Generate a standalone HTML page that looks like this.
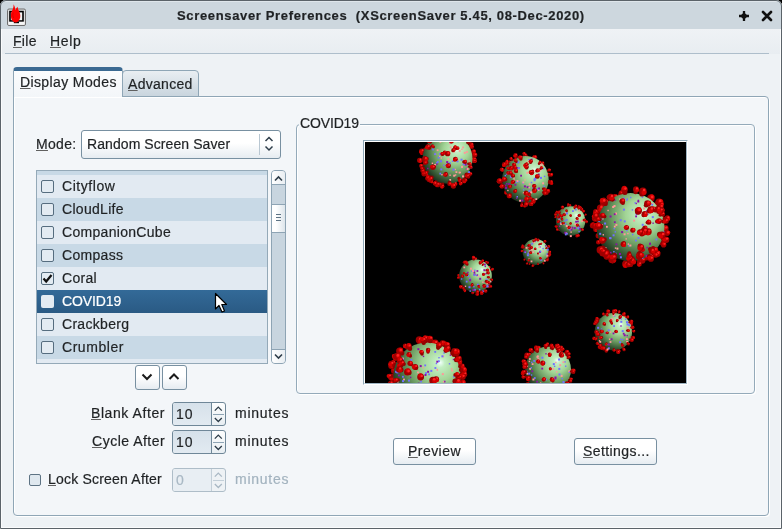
<!DOCTYPE html>
<html><head><meta charset="utf-8">
<style>
*{margin:0;padding:0;box-sizing:border-box}
html,body{width:782px;height:529px;overflow:hidden;background:#000}
body{position:relative;font-family:"Liberation Sans",sans-serif;font-size:14px;color:#1f2224;-webkit-font-smoothing:antialiased;-webkit-text-stroke:0.2px}
#root{position:absolute;left:0;top:0;width:782px;height:529px;will-change:transform}
.a{position:absolute}
.t{position:absolute;line-height:16px;white-space:nowrap;letter-spacing:0.3px}
.u{text-decoration:underline;text-underline-offset:1px;text-decoration-thickness:1px;text-decoration-color:#606060}
#win{left:0;top:0;width:782px;height:529px;background:#eef2f5;border-radius:6px 6px 0 0;overflow:hidden}
#frameov{left:0;top:0;width:782px;height:529px;border:1px solid #5b6369;border-radius:6px 6px 0 0;pointer-events:none}
#hl{left:1px;top:29px;width:780px;height:499px;box-shadow:inset 1px 0 0 #fafbfc,inset -1px -1px 0 #fafbfc}
#tophl{left:5px;top:1px;width:772px;height:1px;background:#dfe6eb}
#title{left:0;top:0;width:782px;height:29px;background:#cdd7de}
#menu{left:0;top:29px;width:782px;height:25px;background:linear-gradient(#eff2f5,#e8edf1)}
#menuline{left:5px;top:53px;width:764px;height:1px;background:#aebecb}
#nb{left:13px;top:96px;width:756px;height:420px;background:#f3f6f9;border:1px solid #8fa6b6;border-radius:0 4px 4px 4px;box-shadow:1px 1px 0 #fff,inset 1px 1px 0 #fff}
#tab1{left:13px;top:67px;width:110px;height:30px;background:linear-gradient(#fbfcfd,#f3f6f9);border:1px solid #8fa6b6;border-bottom:none;border-radius:4px 4px 0 0;border-top:4px solid #3b6a92}
#tab2{left:122px;top:70px;width:77px;height:27px;background:linear-gradient(#e9eef2,#c9d5de);border:1px solid #8fa6b6;border-radius:4px 4px 0 0}
.btn{position:absolute;background:linear-gradient(#ffffff 45%,#e6ecf1);border:1px solid #7890a1;border-radius:3px}
#combo{left:81px;top:130px;width:200px;height:29px}
#list{left:36px;top:170px;width:232px;height:194px;border:1px solid #94a9b8;background:#e2eaf2;overflow:hidden}
.row{position:absolute;left:0;width:230px;height:23px}
.dk{background:#c8d9e6}
.lt{background:#e2eaf2}
.sel{background:linear-gradient(#336a98,#2a5a84)}
.cb{position:absolute;left:4px;top:5px;width:13px;height:13px;border:1px solid #566d7f;border-radius:2px;background:#e3ebf2}
.rt{position:absolute;left:25px;top:3px;line-height:16px;white-space:nowrap;letter-spacing:0.3px}
#sb{left:271px;top:170px;width:15px;height:194px;background:#c8d5df;border:1px solid #8ea4b4;border-radius:4px;overflow:hidden}
#frame{left:296px;top:124px;width:459px;height:270px;border:1px solid #94aaba;border-radius:4px;box-shadow:1px 1px 0 #fff,inset 1px 1px 0 #fff}
#flabel{left:299px;top:115px;background:#f3f6f9;padding:0 1px;letter-spacing:-0.15px}
#prev{left:363px;top:140px;width:325px;height:245px;border-style:solid;border-width:1px;border-color:#8fa8b8 #fff #fff #8fa8b8}
#previn{left:0;top:0;width:323px;height:243px;border-style:solid;border-width:1px;border-color:#fff #9fb5c4 #9fb5c4 #fff;background:#000;overflow:hidden}
.spin{position:absolute;width:54px;height:24px;border:1px solid #6f8798;border-radius:3px;background:linear-gradient(#fdfefe,#e8eef2);overflow:hidden}
.spin .f{position:absolute;left:0;top:0;width:39px;height:22px;background:linear-gradient(#d6e1ea,#e2eaf1);border-right:1px solid #6f8798}
.spin .sep{position:absolute;left:40px;top:11px;width:11px;height:1px;background:#8ea4b4}
.spin svg{position:absolute;left:39px;top:0}
.spin .v{position:absolute;left:3px;top:3px;line-height:16px;letter-spacing:1px}
</style></head><body><div id="root">
<div id="win" class="a">
<div id="title" class="a"></div>
<div id="menu" class="a"></div>
<div id="menuline" class="a"></div>
</div>
<!-- app icon -->
<svg class="a" style="left:4px;top:2px" width="24" height="26" viewBox="0 0 24 26">
 <rect x="3.5" y="7" width="18" height="16.5" rx="1.5" fill="#dcdcdc" stroke="#6e6e6e"/>
 <rect x="5.2" y="8.8" width="14.6" height="11" fill="#000"/>
 <rect x="6.8" y="10.4" width="11.4" height="7.8" fill="#f2f2f2"/>
 <rect x="4.5" y="19.8" width="16" height="3" fill="#f6f6f6"/>
 <rect x="9.8" y="19.8" width="5.2" height="1.4" fill="#000"/>
 <path d="M9.6 2.2 C10.6 4 11.3 6 11.2 8.2 C11.9 6.8 12.8 5.6 13.5 4.8 C13.8 7 14.8 8.5 15.5 10.2 C16.5 12.5 16.6 15 15.7 17 C14.9 19 13.4 20.5 11.8 20.5 C9.6 20.5 7.8 18.7 7.2 16.2 C6.6 13.6 6.9 11 7.9 9 C8.8 7 9.8 5 9.6 2.2 Z" fill="#ff0000"/><path d="M9.2 10.5 C8.6 12.5 8.8 14.5 9.6 16" fill="none" stroke="#900" stroke-width="0.6" opacity="0.6"/>
</svg>
<!-- title buttons -->
<svg class="a" style="left:738px;top:10px" width="12" height="12" viewBox="0 0 12 12">
 <path d="M6 2.2 L9.8 6 L6 9.8 L2.2 6 Z" fill="#111"/>
 <path d="M6 1 V11 M1 6 H11" stroke="#111" stroke-width="2.3"/>
</svg>
<svg class="a" style="left:761px;top:10px" width="12" height="12" viewBox="0 0 12 12">
 <path d="M2 2 L10 10 M10 2 L2 10" stroke="#111" stroke-width="2.6" stroke-linecap="round"/>
</svg>
<div class="t" style="left:177px;top:8px;font-weight:bold;font-size:13px;letter-spacing:0.65px">Screensaver Preferences&nbsp; (XScreenSaver 5.45, 08-Dec-2020)</div>
<div class="t" style="left:13px;top:33px"><span class="u">F</span>ile</div>
<div class="t" style="left:50px;top:33px;letter-spacing:0.7px"><span class="u">H</span>elp</div>

<div id="nb" class="a"></div>
<div id="tab2" class="a"></div>
<div id="tab1" class="a"></div>
<div class="t" style="left:20px;top:74px;letter-spacing:0.38px"><span class="u">D</span>isplay Modes</div>
<div class="t" style="left:128px;top:76px"><span class="u">A</span>dvanced</div>

<div class="t" style="left:36px;top:136px"><span class="u">M</span>ode:</div>
<div id="combo" class="btn"></div>
<div class="t" style="left:87px;top:136px;letter-spacing:0.08px">Random Screen Saver</div>
<div class="a" style="left:259px;top:134px;width:1px;height:21px;background:#b9c7d2"></div>
<svg class="a" style="left:262px;top:135px" width="14" height="18" viewBox="0 0 14 18">
 <path d="M3.5 6 L7 2.5 L10.5 6 M3.5 11.5 L7 15 L10.5 11.5" fill="none" stroke="#2e3d49" stroke-width="1.5"/>
</svg>

<div id="list" class="a">
 <div class="row dk" style="top:0;height:4px"></div>
 <div class="row lt" style="top:4px"><div class="cb"></div><div class="rt" style="letter-spacing:0.55px">Cityflow</div></div>
 <div class="row dk" style="top:27px"><div class="cb"></div><div class="rt">CloudLife</div></div>
 <div class="row lt" style="top:50px"><div class="cb"></div><div class="rt">CompanionCube</div></div>
 <div class="row dk" style="top:73px"><div class="cb"></div><div class="rt">Compass</div></div>
 <div class="row lt" style="top:96px"><div class="cb"></div><div class="rt">Coral</div>
  <svg class="a" style="left:4px;top:5px" width="13" height="13" viewBox="0 0 13 13"><path d="M2.5 6.5 L5.2 9.5 L10.5 3" fill="none" stroke="#111" stroke-width="2.2"/></svg></div>
 <div class="row sel" style="top:119px"><div class="cb" style="border:none;background:#e3ebf2"></div><div class="rt" style="color:#fff;letter-spacing:-0.1px">COVID19</div></div>
 <div class="row lt" style="top:142px"><div class="cb"></div><div class="rt">Crackberg</div></div>
 <div class="row dk" style="top:165px"><div class="cb"></div><div class="rt" style="letter-spacing:0.55px">Crumbler</div></div>
 <div class="row lt" style="top:188px"></div>
</div>
<div id="sb" class="a">
 <div class="a" style="left:0;top:0;width:13px;height:14px;background:linear-gradient(90deg,#fff,#e9eef2);border-bottom:1px solid #8ea4b4"></div>
 <div class="a" style="left:0;top:33px;width:13px;height:29px;background:linear-gradient(90deg,#fff 30%,#dde5eb);border-top:1px solid #8ea4b4;border-bottom:1px solid #8ea4b4"></div>
 <div class="a" style="left:0;top:178px;width:13px;height:14px;background:linear-gradient(90deg,#fff,#e9eef2);border-top:1px solid #8ea4b4"></div>
 <svg class="a" style="left:0;top:0" width="13" height="192" viewBox="0 0 13 192">
  <path d="M3 9.5 L6.5 6 L10 9.5" fill="none" stroke="#2e3d49" stroke-width="1.6"/>
  <path d="M3 183.5 L6.5 187 L10 183.5" fill="none" stroke="#2e3d49" stroke-width="1.6"/>
  <path d="M4 43.5 H9 M4 46.5 H9 M4 49.5 H9" stroke="#5d7384" stroke-width="1"/>
 </svg>
</div>

<div id="frame" class="a"></div>
<div id="flabel" class="t">COVID19</div>
<div id="prev" class="a"><div id="previn" class="a"><svg width="321" height="241" viewBox="0 0 321 241" style="position:absolute;left:0;top:0"><defs><radialGradient id="g" cx="0.64" cy="0.36" r="0.7" fx="0.7" fy="0.3"><stop offset="0" stop-color="#f0fffa"/><stop offset="0.1" stop-color="#c2eec2"/><stop offset="0.36" stop-color="#a2d496"/><stop offset="0.62" stop-color="#6c9c62"/><stop offset="0.84" stop-color="#385a36"/><stop offset="1" stop-color="#1a2c1a"/></radialGradient></defs><circle cx="86.5" cy="21.8" r="1.8" fill="#900000"/><circle cx="86.8" cy="22.2" r="2.5" fill="#a00000"/><circle cx="85.8" cy="21.6" r="1.7" fill="#d40000"/><circle cx="87.6" cy="21.4" r="0.9" fill="#ff2424"/><circle cx="77.1" cy="20.4" r="1.2" fill="#900000"/><circle cx="76.6" cy="20.8" r="1.7" fill="#a00000"/><circle cx="76.6" cy="21.5" r="1.2" fill="#d40000"/><circle cx="77.2" cy="20.2" r="0.6" fill="#ff2424"/><circle cx="85" cy="23.3" r="1.6" fill="#900000"/><circle cx="85.1" cy="23.8" r="2.2" fill="#a00000"/><circle cx="86" cy="23.3" r="1.5" fill="#d40000"/><circle cx="85.8" cy="23.1" r="0.8" fill="#ff2424"/><circle cx="87.8" cy="21.8" r="1.9" fill="#900000"/><circle cx="88.3" cy="22.2" r="2.6" fill="#a00000"/><circle cx="87.1" cy="21.8" r="1.8" fill="#d40000"/><circle cx="89.1" cy="21.3" r="1" fill="#ff2424"/><circle cx="73" cy="13.9" r="1.2" fill="#900000"/><circle cx="72.2" cy="13.7" r="1.7" fill="#a00000"/><circle cx="72.4" cy="13" r="1.1" fill="#d40000"/><circle cx="72.8" cy="13.2" r="0.6" fill="#ff2424"/><circle cx="73.3" cy="22.9" r="1.5" fill="#900000"/><circle cx="72.6" cy="23.4" r="2.1" fill="#a00000"/><circle cx="71.7" cy="22.9" r="1.4" fill="#d40000"/><circle cx="73.2" cy="22.7" r="0.8" fill="#ff2424"/><circle cx="75.7" cy="7.7" r="1.8" fill="#900000"/><circle cx="75.1" cy="7" r="2.4" fill="#a00000"/><circle cx="74.4" cy="6.2" r="1.7" fill="#d40000"/><circle cx="75.9" cy="6.2" r="0.9" fill="#ff2424"/><circle cx="92.7" cy="23.3" r="1.6" fill="#900000"/><circle cx="93.5" cy="23.8" r="2.2" fill="#a00000"/><circle cx="94.4" cy="23.3" r="1.5" fill="#d40000"/><circle cx="94.2" cy="23.1" r="0.8" fill="#ff2424"/><circle cx="69.3" cy="18.2" r="1.5" fill="#900000"/><circle cx="68.2" cy="18.3" r="2.1" fill="#a00000"/><circle cx="67.5" cy="18.9" r="1.4" fill="#d40000"/><circle cx="68.9" cy="17.6" r="0.8" fill="#ff2424"/><circle cx="69.4" cy="19.3" r="1.9" fill="#900000"/><circle cx="68.4" cy="19.5" r="2.6" fill="#a00000"/><circle cx="68.8" cy="20.6" r="1.8" fill="#d40000"/><circle cx="69.2" cy="18.7" r="0.9" fill="#ff2424"/><circle cx="96.9" cy="14.5" r="1.4" fill="#900000"/><circle cx="98.1" cy="14.3" r="2" fill="#a00000"/><circle cx="98.5" cy="13.5" r="1.3" fill="#d40000"/><circle cx="98.7" cy="13.7" r="0.7" fill="#ff2424"/><circle cx="97.9" cy="19.3" r="1.3" fill="#900000"/><circle cx="99.1" cy="19.5" r="1.7" fill="#a00000"/><circle cx="99.5" cy="18.8" r="1.2" fill="#d40000"/><circle cx="99.7" cy="18.9" r="0.6" fill="#ff2424"/><circle cx="88.5" cy="1.6" r="1.8" fill="#900000"/><circle cx="89" cy="0.3" r="2.4" fill="#a00000"/><circle cx="88" cy="0.8" r="1.6" fill="#d40000"/><circle cx="89.7" cy="-0.4" r="0.9" fill="#ff2424"/><circle cx="93.1" cy="29.2" r="1.4" fill="#900000"/><circle cx="94" cy="30.2" r="2" fill="#a00000"/><circle cx="94.2" cy="29.3" r="1.3" fill="#d40000"/><circle cx="94.6" cy="29.5" r="0.7" fill="#ff2424"/><circle cx="82.4" cy="33.3" r="1.9" fill="#900000"/><circle cx="82.4" cy="34.6" r="2.7" fill="#a00000"/><circle cx="83.2" cy="35.6" r="1.8" fill="#d40000"/><circle cx="83.3" cy="33.8" r="1" fill="#ff2424"/><circle cx="96.5" cy="25.8" r="1.6" fill="#900000"/><circle cx="97.6" cy="26.5" r="2.2" fill="#a00000"/><circle cx="96.7" cy="26.2" r="1.5" fill="#d40000"/><circle cx="98.3" cy="25.8" r="0.8" fill="#ff2424"/><circle cx="78.1" cy="-0.8" r="1.6" fill="#900000"/><circle cx="77.7" cy="-2.3" r="2.2" fill="#a00000"/><circle cx="77.2" cy="-1.4" r="1.5" fill="#d40000"/><circle cx="78.4" cy="-3" r="0.8" fill="#ff2424"/><circle cx="64.1" cy="15.5" r="1.3" fill="#900000"/><circle cx="62.6" cy="15.5" r="1.8" fill="#a00000"/><circle cx="61.8" cy="15" r="1.2" fill="#d40000"/><circle cx="63.1" cy="14.9" r="0.7" fill="#ff2424"/><circle cx="63.5" cy="21.9" r="1.8" fill="#900000"/><circle cx="62" cy="22.3" r="2.5" fill="#a00000"/><circle cx="63.1" cy="22.8" r="1.7" fill="#d40000"/><circle cx="62.8" cy="21.5" r="0.9" fill="#ff2424"/><circle cx="86.5" cy="-2.8" r="1.4" fill="#900000"/><circle cx="86.9" cy="-4.4" r="1.9" fill="#a00000"/><circle cx="87.2" cy="-5.2" r="1.3" fill="#d40000"/><circle cx="87.5" cy="-5" r="0.7" fill="#ff2424"/><circle cx="65.2" cy="6.8" r="1.8" fill="#900000"/><circle cx="63.8" cy="6" r="2.5" fill="#a00000"/><circle cx="63.2" cy="5" r="1.7" fill="#d40000"/><circle cx="64.6" cy="5.2" r="0.9" fill="#ff2424"/><circle cx="81.2" cy="-3.4" r="1.2" fill="#900000"/><circle cx="81.1" cy="-5.1" r="1.7" fill="#a00000"/><circle cx="80.9" cy="-5.8" r="1.1" fill="#d40000"/><circle cx="81.6" cy="-5.6" r="0.6" fill="#ff2424"/><circle cx="92.8" cy="-1.3" r="2" fill="#900000"/><circle cx="93.6" cy="-2.7" r="2.7" fill="#a00000"/><circle cx="94.9" cy="-2.7" r="1.9" fill="#d40000"/><circle cx="94.5" cy="-3.6" r="1" fill="#ff2424"/><circle cx="62.8" cy="23.7" r="1.8" fill="#900000"/><circle cx="61.2" cy="24.3" r="2.4" fill="#a00000"/><circle cx="62.2" cy="24.6" r="1.7" fill="#d40000"/><circle cx="61.9" cy="23.5" r="0.9" fill="#ff2424"/><circle cx="62.3" cy="8.5" r="1.9" fill="#900000"/><circle cx="60.7" cy="7.8" r="2.6" fill="#a00000"/><circle cx="60.9" cy="8.9" r="1.8" fill="#d40000"/><circle cx="61.5" cy="7" r="0.9" fill="#ff2424"/><circle cx="90.3" cy="-3.7" r="1.7" fill="#900000"/><circle cx="90.9" cy="-5.3" r="2.4" fill="#a00000"/><circle cx="91.9" cy="-5.6" r="1.6" fill="#d40000"/><circle cx="91.6" cy="-6.1" r="0.9" fill="#ff2424"/><circle cx="66.7" cy="1.1" r="1.8" fill="#900000"/><circle cx="65.4" cy="-0.1" r="2.4" fill="#a00000"/><circle cx="66.1" cy="0.7" r="1.7" fill="#d40000"/><circle cx="66.2" cy="-0.9" r="0.9" fill="#ff2424"/><circle cx="98.8" cy="32.4" r="1.4" fill="#900000"/><circle cx="100.1" cy="33.6" r="2" fill="#a00000"/><circle cx="100.9" cy="33.2" r="1.3" fill="#d40000"/><circle cx="100.7" cy="33" r="0.7" fill="#ff2424"/><circle cx="79.8" cy="-6.4" r="1.3" fill="#900000"/><circle cx="79.6" cy="-8.3" r="1.8" fill="#a00000"/><circle cx="79" cy="-8.8" r="1.2" fill="#d40000"/><circle cx="80.2" cy="-8.8" r="0.7" fill="#ff2424"/><circle cx="63.9" cy="31.4" r="1.5" fill="#900000"/><circle cx="62.4" cy="32.6" r="2.1" fill="#a00000"/><circle cx="62.9" cy="33.4" r="1.4" fill="#d40000"/><circle cx="63.1" cy="31.9" r="0.8" fill="#ff2424"/><circle cx="89.2" cy="39.8" r="1.7" fill="#900000"/><circle cx="89.8" cy="41.7" r="2.3" fill="#a00000"/><circle cx="90.8" cy="41.9" r="1.6" fill="#d40000"/><circle cx="90.5" cy="40.9" r="0.8" fill="#ff2424"/><circle cx="58.9" cy="11.7" r="1.3" fill="#900000"/><circle cx="57" cy="11.3" r="1.8" fill="#a00000"/><circle cx="56.4" cy="11.8" r="1.2" fill="#d40000"/><circle cx="57.6" cy="10.7" r="0.6" fill="#ff2424"/><circle cx="75.8" cy="40.4" r="1.3" fill="#900000"/><circle cx="75.2" cy="42.3" r="1.7" fill="#a00000"/><circle cx="76" cy="42.6" r="1.2" fill="#d40000"/><circle cx="75.8" cy="41.8" r="0.6" fill="#ff2424"/><circle cx="101.7" cy="32.2" r="1.7" fill="#900000"/><circle cx="103.3" cy="33.4" r="2.3" fill="#a00000"/><circle cx="103.2" cy="32.4" r="1.6" fill="#d40000"/><circle cx="104" cy="32.7" r="0.8" fill="#ff2424"/><circle cx="107.1" cy="18.3" r="1.9" fill="#900000"/><circle cx="109.1" cy="18.4" r="2.6" fill="#a00000"/><circle cx="109.9" cy="19.3" r="1.8" fill="#d40000"/><circle cx="110" cy="17.6" r="1" fill="#ff2424"/><circle cx="107.1" cy="14" r="1.5" fill="#900000"/><circle cx="109.1" cy="13.7" r="2.1" fill="#a00000"/><circle cx="108.7" cy="14.6" r="1.4" fill="#d40000"/><circle cx="109.8" cy="13.1" r="0.8" fill="#ff2424"/><circle cx="107.3" cy="17.2" r="1.7" fill="#900000"/><circle cx="109.3" cy="17.3" r="2.3" fill="#a00000"/><circle cx="108.3" cy="17.3" r="1.6" fill="#d40000"/><circle cx="110" cy="16.5" r="0.8" fill="#ff2424"/><circle cx="58.6" cy="9.7" r="2" fill="#900000"/><circle cx="56.7" cy="9.2" r="2.7" fill="#a00000"/><circle cx="55.9" cy="10.1" r="1.8" fill="#d40000"/><circle cx="57.6" cy="8.3" r="1" fill="#ff2424"/><circle cx="106.6" cy="10.7" r="1.2" fill="#900000"/><circle cx="108.6" cy="10.2" r="1.7" fill="#a00000"/><circle cx="108.3" cy="9.5" r="1.2" fill="#d40000"/><circle cx="109.1" cy="9.7" r="0.6" fill="#ff2424"/><circle cx="107.3" cy="18.8" r="1.3" fill="#900000"/><circle cx="109.4" cy="18.9" r="1.8" fill="#a00000"/><circle cx="108.8" cy="18.3" r="1.2" fill="#d40000"/><circle cx="109.9" cy="18.4" r="0.7" fill="#ff2424"/><circle cx="106.6" cy="10.1" r="1.6" fill="#900000"/><circle cx="108.5" cy="9.5" r="2.2" fill="#a00000"/><circle cx="109.4" cy="9" r="1.5" fill="#d40000"/><circle cx="109.2" cy="8.8" r="0.8" fill="#ff2424"/><circle cx="92.2" cy="-6.4" r="1.6" fill="#900000"/><circle cx="92.9" cy="-8.3" r="2.3" fill="#a00000"/><circle cx="92.2" cy="-9" r="1.5" fill="#d40000"/><circle cx="93.7" cy="-9" r="0.8" fill="#ff2424"/><circle cx="105.4" cy="5.9" r="1.4" fill="#900000"/><circle cx="107.2" cy="5" r="1.9" fill="#a00000"/><circle cx="106.4" cy="4.7" r="1.3" fill="#d40000"/><circle cx="107.8" cy="4.4" r="0.7" fill="#ff2424"/><circle cx="58" cy="23.4" r="1.4" fill="#900000"/><circle cx="56" cy="23.9" r="1.9" fill="#a00000"/><circle cx="56" cy="23" r="1.3" fill="#d40000"/><circle cx="56.7" cy="23.3" r="0.7" fill="#ff2424"/><circle cx="97.6" cy="37.3" r="1.6" fill="#900000"/><circle cx="98.9" cy="39" r="2.2" fill="#a00000"/><circle cx="99.5" cy="39.7" r="1.5" fill="#d40000"/><circle cx="99.6" cy="38.3" r="0.8" fill="#ff2424"/><circle cx="93.1" cy="-6.6" r="1.4" fill="#900000"/><circle cx="94" cy="-8.5" r="1.9" fill="#a00000"/><circle cx="93.4" cy="-7.9" r="1.3" fill="#d40000"/><circle cx="94.6" cy="-9.1" r="0.7" fill="#ff2424"/><circle cx="65.7" cy="36.1" r="1.8" fill="#900000"/><circle cx="64.4" cy="37.7" r="2.5" fill="#a00000"/><circle cx="64.9" cy="38.7" r="1.7" fill="#d40000"/><circle cx="65.2" cy="36.9" r="0.9" fill="#ff2424"/><circle cx="107.9" cy="13.3" r="1.8" fill="#900000"/><circle cx="110" cy="13" r="2.4" fill="#a00000"/><circle cx="109.4" cy="12.1" r="1.7" fill="#d40000"/><circle cx="110.8" cy="12.3" r="0.9" fill="#ff2424"/><circle cx="104" cy="30.7" r="1.3" fill="#900000"/><circle cx="105.7" cy="31.9" r="1.7" fill="#a00000"/><circle cx="105.3" cy="31.2" r="1.2" fill="#d40000"/><circle cx="106.3" cy="31.3" r="0.6" fill="#ff2424"/><circle cx="99.2" cy="36.2" r="1.3" fill="#900000"/><circle cx="100.5" cy="37.8" r="1.8" fill="#a00000"/><circle cx="101.1" cy="38.4" r="1.2" fill="#d40000"/><circle cx="101.1" cy="37.3" r="0.6" fill="#ff2424"/><circle cx="104.6" cy="3.6" r="1.7" fill="#900000"/><circle cx="106.4" cy="2.6" r="2.3" fill="#a00000"/><circle cx="106.5" cy="3.6" r="1.6" fill="#d40000"/><circle cx="107.2" cy="1.9" r="0.8" fill="#ff2424"/><circle cx="73.4" cy="40.8" r="1.9" fill="#900000"/><circle cx="72.7" cy="42.7" r="2.6" fill="#a00000"/><circle cx="71.5" cy="42.9" r="1.8" fill="#d40000"/><circle cx="73.5" cy="41.9" r="1" fill="#ff2424"/><circle cx="74.9" cy="-7.9" r="1.5" fill="#900000"/><circle cx="74.3" cy="-9.9" r="2" fill="#a00000"/><circle cx="74.6" cy="-10.8" r="1.4" fill="#d40000"/><circle cx="75" cy="-10.5" r="0.7" fill="#ff2424"/><circle cx="101.8" cy="33.8" r="1.2" fill="#900000"/><circle cx="103.4" cy="35.1" r="1.7" fill="#a00000"/><circle cx="103.3" cy="34.4" r="1.1" fill="#d40000"/><circle cx="103.9" cy="34.6" r="0.6" fill="#ff2424"/><circle cx="67.6" cy="37.7" r="1.2" fill="#900000"/><circle cx="66.4" cy="39.5" r="1.7" fill="#a00000"/><circle cx="66.9" cy="40.1" r="1.2" fill="#d40000"/><circle cx="67" cy="38.9" r="0.6" fill="#ff2424"/><circle cx="60.8" cy="30.7" r="2" fill="#900000"/><circle cx="59.1" cy="31.8" r="2.7" fill="#a00000"/><circle cx="58.6" cy="30.7" r="1.8" fill="#d40000"/><circle cx="59.9" cy="31" r="1" fill="#ff2424"/><circle cx="72.1" cy="40.3" r="1.4" fill="#900000"/><circle cx="71.3" cy="42.3" r="1.9" fill="#a00000"/><circle cx="71.9" cy="42.8" r="1.3" fill="#d40000"/><circle cx="71.9" cy="41.6" r="0.7" fill="#ff2424"/><circle cx="88" cy="41.9" r="2" fill="#900000"/><circle cx="88.4" cy="44" r="2.7" fill="#a00000"/><circle cx="87.8" cy="42.9" r="1.9" fill="#d40000"/><circle cx="89.3" cy="43.1" r="1" fill="#ff2424"/><circle cx="56.7" cy="18.2" r="1.9" fill="#900000"/><circle cx="54.6" cy="18.3" r="2.6" fill="#a00000"/><circle cx="55.3" cy="19.2" r="1.7" fill="#d40000"/><circle cx="55.4" cy="17.5" r="0.9" fill="#ff2424"/><circle cx="66.6" cy="-3.8" r="1.7" fill="#900000"/><circle cx="65.3" cy="-5.4" r="2.3" fill="#a00000"/><circle cx="64.7" cy="-4.6" r="1.6" fill="#d40000"/><circle cx="66.1" cy="-6.2" r="0.8" fill="#ff2424"/><circle cx="94.8" cy="39.5" r="1.4" fill="#900000"/><circle cx="95.8" cy="41.3" r="1.9" fill="#a00000"/><circle cx="95.4" cy="42.1" r="1.3" fill="#d40000"/><circle cx="96.4" cy="40.7" r="0.7" fill="#ff2424"/><circle cx="82.5" cy="16.7" r="25" fill="url(#g)"/><rect x="71.7" y="7.3" width="1.8" height="1.8" fill="#ff9898"/><rect x="97" y="33.4" width="2" height="2" fill="#ff9898"/><rect x="62.1" y="25.8" width="1.4" height="1.4" fill="#8a10a8"/><rect x="67.2" y="6.6" width="1.8" height="1.8" fill="#7070ff"/><rect x="86.8" y="18.5" width="1.4" height="1.4" fill="#7070ff"/><rect x="88.2" y="32.7" width="2" height="2" fill="#ff9898"/><rect x="82.5" y="16.2" width="1.8" height="1.8" fill="#ff9898"/><rect x="97.2" y="4.5" width="1.8" height="1.8" fill="#ff9898"/><rect x="75" y="18.3" width="2" height="2" fill="#7070ff"/><rect x="90.5" y="29.2" width="1.8" height="1.8" fill="#ff9898"/><rect x="89.5" y="26.7" width="1.4" height="1.4" fill="#ff9898"/><rect x="82.5" y="-3.2" width="1.8" height="1.8" fill="#7070ff"/><rect x="93.8" y="8.1" width="1.8" height="1.8" fill="#ff9898"/><rect x="101.1" y="9.1" width="1.8" height="1.8" fill="#ff9898"/><rect x="88.1" y="8.9" width="1.8" height="1.8" fill="#ff9898"/><rect x="71.1" y="20.1" width="1.4" height="1.4" fill="#7070ff"/><rect x="83.7" y="20.3" width="2" height="2" fill="#7070ff"/><rect x="96" y="23.9" width="2" height="2" fill="#ff9898"/><rect x="76.2" y="32" width="1.4" height="1.4" fill="#ff9898"/><rect x="80.2" y="-3.7" width="1.4" height="1.4" fill="#7070ff"/><rect x="87.5" y="26.6" width="2" height="2" fill="#7070ff"/><rect x="66.5" y="3.7" width="1.4" height="1.4" fill="#ff9898"/><rect x="66.7" y="20.6" width="1.4" height="1.4" fill="#ff9898"/><rect x="99.7" y="21.7" width="2" height="2" fill="#8a10a8"/><rect x="78.1" y="22.7" width="1.4" height="1.4" fill="#7070ff"/><rect x="96.2" y="6.6" width="1.4" height="1.4" fill="#ff9898"/><rect x="74.5" y="-1" width="1.8" height="1.8" fill="#ff9898"/><rect x="83.5" y="11.5" width="1.8" height="1.8" fill="#ff9898"/><rect x="80.6" y="21.9" width="1.4" height="1.4" fill="#7070ff"/><rect x="89.9" y="32.3" width="1.4" height="1.4" fill="#ff9898"/><rect x="75.6" y="15.3" width="1.4" height="1.4" fill="#ff9898"/><rect x="103.1" y="29.2" width="2" height="2" fill="#7070ff"/><rect x="100.9" y="26.1" width="1.4" height="1.4" fill="#8a10a8"/><rect x="69" y="21.9" width="2" height="2" fill="#ff9898"/><rect x="84.5" y="-0.7" width="2" height="2" fill="#7070ff"/><rect x="103.5" y="18.3" width="1.4" height="1.4" fill="#ff9898"/><rect x="74" y="13.7" width="1.4" height="1.4" fill="#ff9898"/><rect x="84.8" y="4.5" width="1.8" height="1.8" fill="#ff9898"/><rect x="94.4" y="29.8" width="1.4" height="1.4" fill="#ff9898"/><rect x="75.4" y="-3.8" width="2" height="2" fill="#8a10a8"/><rect x="82.7" y="22.7" width="1.4" height="1.4" fill="#7070ff"/><rect x="76.3" y="-4" width="1.4" height="1.4" fill="#ff9898"/><rect x="101.6" y="26" width="2" height="2" fill="#ff9898"/><rect x="95.5" y="16.7" width="2" height="2" fill="#7070ff"/><rect x="91.5" y="18.3" width="2" height="2" fill="#7070ff"/><rect x="97.7" y="21.3" width="1.8" height="1.8" fill="#7070ff"/><rect x="69.8" y="11.5" width="1.4" height="1.4" fill="#ff9898"/><rect x="93.6" y="29.7" width="1.8" height="1.8" fill="#ff9898"/><rect x="99.9" y="20.5" width="1.4" height="1.4" fill="#8a10a8"/><rect x="87.9" y="17.6" width="1.8" height="1.8" fill="#7070ff"/><rect x="71.2" y="21.5" width="1.4" height="1.4" fill="#8a10a8"/><rect x="84.4" y="32.5" width="1.4" height="1.4" fill="#ff9898"/><rect x="81.2" y="19.1" width="2" height="2" fill="#8a10a8"/><rect x="92.1" y="-1.6" width="1.8" height="1.8" fill="#7070ff"/><rect x="72.7" y="14.8" width="1.8" height="1.8" fill="#7070ff"/><rect x="84" y="0.8" width="1.4" height="1.4" fill="#ff9898"/><rect x="74.4" y="30.7" width="1.8" height="1.8" fill="#7070ff"/><rect x="74.2" y="11" width="2" height="2" fill="#7070ff"/><rect x="98.8" y="9.8" width="2" height="2" fill="#ff9898"/><rect x="91.1" y="16.8" width="2" height="2" fill="#ff9898"/><rect x="105.2" y="24.4" width="2" height="2" fill="#7070ff"/><rect x="84.3" y="37" width="1.8" height="1.8" fill="#ff9898"/><rect x="71.9" y="19.1" width="1.8" height="1.8" fill="#7070ff"/><rect x="69.1" y="11.2" width="1.8" height="1.8" fill="#7070ff"/><rect x="75.3" y="26.4" width="2" height="2" fill="#7070ff"/><circle cx="77.7" cy="42.1" r="1.6" fill="#900000"/><circle cx="77.3" cy="44.2" r="2.2" fill="#a00000"/><circle cx="76.8" cy="45" r="1.5" fill="#d40000"/><circle cx="78" cy="43.5" r="0.8" fill="#ff2424"/><circle cx="72.9" cy="-7.3" r="1.3" fill="#900000"/><circle cx="72.1" cy="-9.2" r="1.8" fill="#a00000"/><circle cx="72.1" cy="-8.4" r="1.2" fill="#d40000"/><circle cx="72.6" cy="-9.8" r="0.7" fill="#ff2424"/><circle cx="65.8" cy="36.4" r="1.5" fill="#900000"/><circle cx="64.4" cy="38" r="2.1" fill="#a00000"/><circle cx="65.2" cy="38.5" r="1.4" fill="#d40000"/><circle cx="65.1" cy="37.4" r="0.8" fill="#ff2424"/><circle cx="70.8" cy="39.7" r="1.5" fill="#900000"/><circle cx="69.8" cy="41.6" r="2.1" fill="#a00000"/><circle cx="69.8" cy="40.6" r="1.4" fill="#d40000"/><circle cx="70.5" cy="40.9" r="0.8" fill="#ff2424"/><circle cx="59.2" cy="27.9" r="1.4" fill="#900000"/><circle cx="57.3" cy="28.8" r="2" fill="#a00000"/><circle cx="58.1" cy="28.4" r="1.3" fill="#d40000"/><circle cx="58" cy="28.2" r="0.7" fill="#ff2424"/><circle cx="64.2" cy="34.8" r="1.8" fill="#900000"/><circle cx="62.7" cy="36.3" r="2.5" fill="#a00000"/><circle cx="62.8" cy="35.1" r="1.7" fill="#d40000"/><circle cx="63.5" cy="35.5" r="0.9" fill="#ff2424"/><circle cx="86.2" cy="-8.7" r="1.6" fill="#900000"/><circle cx="86.5" cy="-10.8" r="2.2" fill="#a00000"/><circle cx="85.5" cy="-10.6" r="1.5" fill="#d40000"/><circle cx="87.2" cy="-11.5" r="0.8" fill="#ff2424"/><circle cx="66" cy="36.3" r="1.6" fill="#900000"/><circle cx="64.6" cy="37.9" r="2.2" fill="#a00000"/><circle cx="65.5" cy="38.5" r="1.5" fill="#d40000"/><circle cx="65.4" cy="37.2" r="0.8" fill="#ff2424"/><circle cx="102.7" cy="0.9" r="1.4" fill="#900000"/><circle cx="104.3" cy="-0.4" r="1.9" fill="#a00000"/><circle cx="104" cy="-1.2" r="1.3" fill="#d40000"/><circle cx="104.9" cy="-1" r="0.7" fill="#ff2424"/><circle cx="66.5" cy="36.5" r="1.3" fill="#900000"/><circle cx="65.2" cy="38.1" r="1.8" fill="#a00000"/><circle cx="64.6" cy="37.7" r="1.2" fill="#d40000"/><circle cx="65.8" cy="37.6" r="0.6" fill="#ff2424"/><circle cx="64.2" cy="-1" r="1.7" fill="#900000"/><circle cx="62.7" cy="-2.4" r="2.3" fill="#a00000"/><circle cx="63.2" cy="-3.4" r="1.6" fill="#d40000"/><circle cx="63.5" cy="-3.1" r="0.8" fill="#ff2424"/><circle cx="58.8" cy="25.9" r="1.2" fill="#900000"/><circle cx="56.9" cy="26.6" r="1.7" fill="#a00000"/><circle cx="56.6" cy="25.9" r="1.1" fill="#d40000"/><circle cx="57.5" cy="26.1" r="0.6" fill="#ff2424"/><circle cx="101.5" cy="32.1" r="1.7" fill="#900000"/><circle cx="103.1" cy="33.3" r="2.3" fill="#a00000"/><circle cx="102" cy="33.2" r="1.6" fill="#d40000"/><circle cx="103.8" cy="32.6" r="0.8" fill="#ff2424"/><circle cx="100.9" cy="32.8" r="1.6" fill="#900000"/><circle cx="102.4" cy="34.1" r="2.2" fill="#a00000"/><circle cx="101.4" cy="33.8" r="1.5" fill="#d40000"/><circle cx="103.1" cy="33.4" r="0.8" fill="#ff2424"/><circle cx="66.9" cy="35.3" r="1.8" fill="#900000"/><circle cx="65.6" cy="36.8" r="2.4" fill="#a00000"/><circle cx="64.6" cy="37.1" r="1.6" fill="#d40000"/><circle cx="66.4" cy="36" r="0.9" fill="#ff2424"/><circle cx="65.3" cy="-0" r="1.8" fill="#900000"/><circle cx="63.9" cy="-1.4" r="2.5" fill="#a00000"/><circle cx="62.9" cy="-1.9" r="1.7" fill="#d40000"/><circle cx="64.7" cy="-2.2" r="0.9" fill="#ff2424"/><circle cx="79.5" cy="-7.1" r="1.9" fill="#900000"/><circle cx="79.3" cy="-9" r="2.7" fill="#a00000"/><circle cx="78.2" cy="-9.5" r="1.8" fill="#d40000"/><circle cx="80.2" cy="-9.9" r="1" fill="#ff2424"/><circle cx="62.6" cy="29.7" r="1.2" fill="#900000"/><circle cx="61" cy="30.7" r="1.7" fill="#a00000"/><circle cx="61.4" cy="31.3" r="1.2" fill="#d40000"/><circle cx="61.5" cy="30.2" r="0.6" fill="#ff2424"/><circle cx="84.3" cy="40.1" r="1.5" fill="#900000"/><circle cx="84.4" cy="41.9" r="2.1" fill="#a00000"/><circle cx="85.4" cy="41.7" r="1.4" fill="#d40000"/><circle cx="85.1" cy="41.3" r="0.8" fill="#ff2424"/><circle cx="104.1" cy="24.6" r="1.2" fill="#900000"/><circle cx="105.9" cy="25.2" r="1.7" fill="#a00000"/><circle cx="106" cy="24.5" r="1.1" fill="#d40000"/><circle cx="106.4" cy="24.7" r="0.6" fill="#ff2424"/><circle cx="93.9" cy="36.3" r="1.4" fill="#900000"/><circle cx="94.8" cy="37.9" r="1.9" fill="#a00000"/><circle cx="94.6" cy="38.7" r="1.3" fill="#d40000"/><circle cx="95.4" cy="37.3" r="0.7" fill="#ff2424"/><circle cx="103.3" cy="21.8" r="1.2" fill="#900000"/><circle cx="105" cy="22.2" r="1.7" fill="#a00000"/><circle cx="105.1" cy="21.4" r="1.1" fill="#d40000"/><circle cx="105.5" cy="21.7" r="0.6" fill="#ff2424"/><circle cx="61.7" cy="20.5" r="1.7" fill="#900000"/><circle cx="60" cy="20.8" r="2.3" fill="#a00000"/><circle cx="60.7" cy="20" r="1.6" fill="#d40000"/><circle cx="60.7" cy="20" r="0.8" fill="#ff2424"/><circle cx="64.4" cy="5.8" r="2" fill="#900000"/><circle cx="63" cy="4.9" r="2.7" fill="#a00000"/><circle cx="61.9" cy="5.5" r="1.8" fill="#d40000"/><circle cx="63.8" cy="4" r="1" fill="#ff2424"/><circle cx="61.7" cy="16.8" r="2" fill="#900000"/><circle cx="60" cy="16.8" r="2.7" fill="#a00000"/><circle cx="61.3" cy="16.9" r="1.9" fill="#d40000"/><circle cx="60.9" cy="15.9" r="1" fill="#ff2424"/><circle cx="82.5" cy="-2.5" r="1.9" fill="#900000"/><circle cx="82.5" cy="-4" r="2.7" fill="#a00000"/><circle cx="82.6" cy="-2.8" r="1.8" fill="#d40000"/><circle cx="83.3" cy="-4.9" r="1" fill="#ff2424"/><circle cx="68.7" cy="5" r="1.2" fill="#900000"/><circle cx="67.5" cy="4" r="1.7" fill="#a00000"/><circle cx="68.2" cy="4.4" r="1.2" fill="#d40000"/><circle cx="68.1" cy="3.5" r="0.6" fill="#ff2424"/><circle cx="86.4" cy="-0.4" r="2" fill="#900000"/><circle cx="86.7" cy="-1.8" r="2.7" fill="#a00000"/><circle cx="86.3" cy="-0.6" r="1.8" fill="#d40000"/><circle cx="87.6" cy="-2.6" r="1" fill="#ff2424"/><circle cx="98.7" cy="19.7" r="1.5" fill="#900000"/><circle cx="100" cy="19.9" r="2" fill="#a00000"/><circle cx="100.3" cy="19.1" r="1.4" fill="#d40000"/><circle cx="100.7" cy="19.3" r="0.7" fill="#ff2424"/><circle cx="69" cy="24.6" r="1.9" fill="#900000"/><circle cx="67.9" cy="25.3" r="2.7" fill="#a00000"/><circle cx="67" cy="24.5" r="1.8" fill="#d40000"/><circle cx="68.8" cy="24.4" r="1" fill="#ff2424"/><circle cx="80.9" cy="31.4" r="1.6" fill="#900000"/><circle cx="80.7" cy="32.6" r="2.3" fill="#a00000"/><circle cx="79.7" cy="32.7" r="1.5" fill="#d40000"/><circle cx="81.4" cy="31.9" r="0.8" fill="#ff2424"/><circle cx="91.8" cy="6.8" r="1.3" fill="#900000"/><circle cx="92.6" cy="6" r="1.8" fill="#a00000"/><circle cx="93.1" cy="6.5" r="1.2" fill="#d40000"/><circle cx="93.1" cy="5.4" r="0.6" fill="#ff2424"/><circle cx="89.5" cy="6.5" r="1.5" fill="#900000"/><circle cx="90.1" cy="5.6" r="2" fill="#a00000"/><circle cx="90.3" cy="4.7" r="1.4" fill="#d40000"/><circle cx="90.7" cy="5" r="0.7" fill="#ff2424"/><circle cx="87.9" cy="8.7" r="1.5" fill="#900000"/><circle cx="88.4" cy="8" r="2.1" fill="#a00000"/><circle cx="89.3" cy="7.8" r="1.4" fill="#d40000"/><circle cx="89" cy="7.3" r="0.8" fill="#ff2424"/><circle cx="89.8" cy="17.1" r="1.7" fill="#900000"/><circle cx="90.4" cy="17.2" r="2.4" fill="#a00000"/><circle cx="89.6" cy="17.9" r="1.6" fill="#d40000"/><circle cx="91.2" cy="16.4" r="0.9" fill="#ff2424"/><circle cx="83.3" cy="23.2" r="1.8" fill="#900000"/><circle cx="83.4" cy="23.8" r="2.5" fill="#a00000"/><circle cx="82.3" cy="23.6" r="1.7" fill="#d40000"/><circle cx="84.2" cy="23" r="0.9" fill="#ff2424"/><circle cx="77.7" cy="12.4" r="1.4" fill="#900000"/><circle cx="77.3" cy="12" r="1.9" fill="#a00000"/><circle cx="77" cy="11.2" r="1.3" fill="#d40000"/><circle cx="77.9" cy="11.4" r="0.7" fill="#ff2424"/><circle cx="79.9" cy="10.9" r="1.5" fill="#900000"/><circle cx="79.7" cy="10.4" r="2" fill="#a00000"/><circle cx="79.3" cy="11.2" r="1.4" fill="#d40000"/><circle cx="80.3" cy="9.7" r="0.7" fill="#ff2424"/><circle cx="82.6" cy="12.1" r="1.9" fill="#900000"/><circle cx="82.6" cy="11.7" r="2.6" fill="#a00000"/><circle cx="83.5" cy="11" r="1.8" fill="#d40000"/><circle cx="83.4" cy="10.9" r="0.9" fill="#ff2424"/><circle cx="161.2" cy="35.4" r="1.4" fill="#900000"/><circle cx="161.3" cy="35.2" r="2" fill="#a00000"/><circle cx="160.4" cy="35.1" r="1.3" fill="#d40000"/><circle cx="161.9" cy="34.6" r="0.7" fill="#ff2424"/><circle cx="160.7" cy="40.3" r="1.4" fill="#900000"/><circle cx="160.7" cy="40.6" r="2" fill="#a00000"/><circle cx="159.9" cy="40.1" r="1.4" fill="#d40000"/><circle cx="161.4" cy="39.9" r="0.7" fill="#ff2424"/><circle cx="157.4" cy="32.9" r="1.5" fill="#900000"/><circle cx="157.2" cy="32.6" r="2.1" fill="#a00000"/><circle cx="156.9" cy="31.7" r="1.4" fill="#d40000"/><circle cx="157.8" cy="31.9" r="0.8" fill="#ff2424"/><circle cx="163.5" cy="32.5" r="1.6" fill="#900000"/><circle cx="163.8" cy="32.1" r="2.3" fill="#a00000"/><circle cx="163.6" cy="31.1" r="1.5" fill="#d40000"/><circle cx="164.5" cy="31.4" r="0.8" fill="#ff2424"/><circle cx="159.3" cy="46.2" r="1.6" fill="#900000"/><circle cx="159.2" cy="46.9" r="2.1" fill="#a00000"/><circle cx="160.1" cy="47.2" r="1.5" fill="#d40000"/><circle cx="159.9" cy="46.2" r="0.8" fill="#ff2424"/><circle cx="169.1" cy="42.9" r="1.7" fill="#900000"/><circle cx="169.8" cy="43.3" r="2.3" fill="#a00000"/><circle cx="169.5" cy="44.3" r="1.5" fill="#d40000"/><circle cx="170.6" cy="42.6" r="0.8" fill="#ff2424"/><circle cx="171.2" cy="40" r="1.5" fill="#900000"/><circle cx="172.1" cy="40.3" r="2.1" fill="#a00000"/><circle cx="171.2" cy="40" r="1.4" fill="#d40000"/><circle cx="172.8" cy="39.6" r="0.8" fill="#ff2424"/><circle cx="170.5" cy="42.4" r="1.7" fill="#900000"/><circle cx="171.3" cy="42.8" r="2.4" fill="#a00000"/><circle cx="172.4" cy="42.5" r="1.6" fill="#d40000"/><circle cx="172.1" cy="42.1" r="0.9" fill="#ff2424"/><circle cx="163.6" cy="50.7" r="1.6" fill="#900000"/><circle cx="163.8" cy="51.8" r="2.2" fill="#a00000"/><circle cx="163.7" cy="52.8" r="1.5" fill="#d40000"/><circle cx="164.5" cy="51.1" r="0.8" fill="#ff2424"/><circle cx="172.2" cy="30.1" r="1.4" fill="#900000"/><circle cx="173.2" cy="29.5" r="2" fill="#a00000"/><circle cx="172.9" cy="30.4" r="1.3" fill="#d40000"/><circle cx="173.8" cy="28.9" r="0.7" fill="#ff2424"/><circle cx="148.8" cy="29.6" r="1.5" fill="#900000"/><circle cx="147.8" cy="28.9" r="2" fill="#a00000"/><circle cx="147.5" cy="29.8" r="1.4" fill="#d40000"/><circle cx="148.5" cy="28.3" r="0.7" fill="#ff2424"/><circle cx="171.4" cy="28.7" r="1.8" fill="#900000"/><circle cx="172.3" cy="28" r="2.4" fill="#a00000"/><circle cx="171.8" cy="29" r="1.7" fill="#d40000"/><circle cx="173.1" cy="27.2" r="0.9" fill="#ff2424"/><circle cx="172" cy="46.2" r="1.6" fill="#900000"/><circle cx="173" cy="46.9" r="2.2" fill="#a00000"/><circle cx="172" cy="46.9" r="1.5" fill="#d40000"/><circle cx="173.7" cy="46.2" r="0.8" fill="#ff2424"/><circle cx="167.6" cy="21.5" r="1.4" fill="#900000"/><circle cx="168.1" cy="20.2" r="1.9" fill="#a00000"/><circle cx="167.7" cy="19.5" r="1.3" fill="#d40000"/><circle cx="168.8" cy="19.6" r="0.7" fill="#ff2424"/><circle cx="151.3" cy="20.9" r="1.8" fill="#900000"/><circle cx="150.5" cy="19.6" r="2.5" fill="#a00000"/><circle cx="150.1" cy="20.6" r="1.7" fill="#d40000"/><circle cx="151.3" cy="18.8" r="0.9" fill="#ff2424"/><circle cx="164.8" cy="55.8" r="1.6" fill="#900000"/><circle cx="165.2" cy="57.3" r="2.2" fill="#a00000"/><circle cx="164.2" cy="57.5" r="1.5" fill="#d40000"/><circle cx="165.8" cy="56.6" r="0.8" fill="#ff2424"/><circle cx="149.7" cy="21.5" r="1.2" fill="#900000"/><circle cx="148.9" cy="20.2" r="1.7" fill="#a00000"/><circle cx="149.6" cy="20.2" r="1.2" fill="#d40000"/><circle cx="149.4" cy="19.7" r="0.6" fill="#ff2424"/><circle cx="169.1" cy="55.3" r="1.6" fill="#900000"/><circle cx="169.8" cy="56.8" r="2.2" fill="#a00000"/><circle cx="168.9" cy="57.1" r="1.5" fill="#d40000"/><circle cx="170.5" cy="56.1" r="0.8" fill="#ff2424"/><circle cx="146.8" cy="22.5" r="1.5" fill="#900000"/><circle cx="145.7" cy="21.3" r="2.1" fill="#a00000"/><circle cx="144.9" cy="21.8" r="1.4" fill="#d40000"/><circle cx="146.3" cy="20.6" r="0.8" fill="#ff2424"/><circle cx="161.7" cy="17" r="1.3" fill="#900000"/><circle cx="161.8" cy="15.4" r="1.7" fill="#a00000"/><circle cx="162.5" cy="15" r="1.2" fill="#d40000"/><circle cx="162.4" cy="14.8" r="0.6" fill="#ff2424"/><circle cx="167.8" cy="56.5" r="1.2" fill="#900000"/><circle cx="168.4" cy="58" r="1.7" fill="#a00000"/><circle cx="167.6" cy="58" r="1.2" fill="#d40000"/><circle cx="168.9" cy="57.5" r="0.6" fill="#ff2424"/><circle cx="143.1" cy="49" r="1.8" fill="#900000"/><circle cx="141.7" cy="49.9" r="2.5" fill="#a00000"/><circle cx="141.1" cy="50.9" r="1.7" fill="#d40000"/><circle cx="142.5" cy="49.1" r="0.9" fill="#ff2424"/><circle cx="176.6" cy="23.9" r="1.1" fill="#900000"/><circle cx="177.9" cy="22.8" r="1.6" fill="#a00000"/><circle cx="177.2" cy="23.1" r="1.1" fill="#d40000"/><circle cx="178.4" cy="22.3" r="0.6" fill="#ff2424"/><circle cx="163" cy="58.5" r="1.5" fill="#900000"/><circle cx="163.2" cy="60.2" r="2.1" fill="#a00000"/><circle cx="162.2" cy="60.2" r="1.4" fill="#d40000"/><circle cx="163.8" cy="59.6" r="0.8" fill="#ff2424"/><circle cx="139.6" cy="42.9" r="1.8" fill="#900000"/><circle cx="137.9" cy="43.3" r="2.5" fill="#a00000"/><circle cx="138.2" cy="44.4" r="1.7" fill="#d40000"/><circle cx="138.7" cy="42.5" r="0.9" fill="#ff2424"/><circle cx="145.9" cy="21.3" r="1.3" fill="#900000"/><circle cx="144.8" cy="20" r="1.8" fill="#a00000"/><circle cx="145.2" cy="20.7" r="1.2" fill="#d40000"/><circle cx="145.3" cy="19.5" r="0.6" fill="#ff2424"/><circle cx="160.5" cy="15.5" r="1.5" fill="#900000"/><circle cx="160.5" cy="13.7" r="2.1" fill="#a00000"/><circle cx="160.5" cy="14.7" r="1.4" fill="#d40000"/><circle cx="161.2" cy="13.1" r="0.8" fill="#ff2424"/><circle cx="181.9" cy="32.9" r="1.4" fill="#900000"/><circle cx="183.7" cy="32.6" r="1.9" fill="#a00000"/><circle cx="183.1" cy="32" r="1.3" fill="#d40000"/><circle cx="184.3" cy="32" r="0.7" fill="#ff2424"/><circle cx="176.4" cy="22.2" r="1.3" fill="#900000"/><circle cx="177.7" cy="21" r="1.7" fill="#a00000"/><circle cx="177" cy="21.3" r="1.2" fill="#d40000"/><circle cx="178.3" cy="20.4" r="0.6" fill="#ff2424"/><circle cx="169.1" cy="16.9" r="1.7" fill="#900000"/><circle cx="169.8" cy="15.3" r="2.4" fill="#a00000"/><circle cx="168.8" cy="15.2" r="1.6" fill="#d40000"/><circle cx="170.6" cy="14.5" r="0.9" fill="#ff2424"/><circle cx="160" cy="14.9" r="1.5" fill="#900000"/><circle cx="160" cy="13.1" r="2" fill="#a00000"/><circle cx="159.8" cy="12.2" r="1.4" fill="#d40000"/><circle cx="160.6" cy="12.5" r="0.7" fill="#ff2424"/><circle cx="138.2" cy="43.7" r="1.2" fill="#900000"/><circle cx="136.4" cy="44.3" r="1.6" fill="#a00000"/><circle cx="136.6" cy="43.6" r="1.1" fill="#d40000"/><circle cx="136.9" cy="43.7" r="0.6" fill="#ff2424"/><circle cx="165.4" cy="60" r="1.6" fill="#900000"/><circle cx="165.8" cy="61.9" r="2.2" fill="#a00000"/><circle cx="166.6" cy="62.5" r="1.5" fill="#d40000"/><circle cx="166.5" cy="61.2" r="0.8" fill="#ff2424"/><circle cx="142.8" cy="22" r="1.2" fill="#900000"/><circle cx="141.3" cy="20.7" r="1.6" fill="#a00000"/><circle cx="141.8" cy="20.2" r="1.1" fill="#d40000"/><circle cx="141.9" cy="20.2" r="0.6" fill="#ff2424"/><circle cx="166.1" cy="60.3" r="1.3" fill="#900000"/><circle cx="166.5" cy="62.2" r="1.8" fill="#a00000"/><circle cx="166.6" cy="61.3" r="1.2" fill="#d40000"/><circle cx="167.1" cy="61.6" r="0.7" fill="#ff2424"/><circle cx="143.4" cy="21" r="1.3" fill="#900000"/><circle cx="142" cy="19.7" r="1.7" fill="#a00000"/><circle cx="142.1" cy="18.9" r="1.2" fill="#d40000"/><circle cx="142.5" cy="19.1" r="0.6" fill="#ff2424"/><circle cx="138.6" cy="28.2" r="1.5" fill="#900000"/><circle cx="136.8" cy="27.5" r="2.1" fill="#a00000"/><circle cx="137.3" cy="28.3" r="1.4" fill="#d40000"/><circle cx="137.5" cy="26.8" r="0.8" fill="#ff2424"/><circle cx="181.5" cy="48.4" r="1.4" fill="#900000"/><circle cx="183.2" cy="49.2" r="1.9" fill="#a00000"/><circle cx="183.3" cy="48.4" r="1.3" fill="#d40000"/><circle cx="183.8" cy="48.7" r="0.7" fill="#ff2424"/><circle cx="159" cy="13.5" r="1.2" fill="#900000"/><circle cx="158.9" cy="11.5" r="1.6" fill="#a00000"/><circle cx="159.3" cy="11" r="1.1" fill="#d40000"/><circle cx="159.4" cy="11" r="0.6" fill="#ff2424"/><circle cx="140.8" cy="23.5" r="1.8" fill="#900000"/><circle cx="139.3" cy="22.4" r="2.4" fill="#a00000"/><circle cx="138.8" cy="23.4" r="1.7" fill="#d40000"/><circle cx="140" cy="21.6" r="0.9" fill="#ff2424"/><circle cx="160.2" cy="61.5" r="1.3" fill="#900000"/><circle cx="160.2" cy="63.5" r="1.8" fill="#a00000"/><circle cx="159.7" cy="64.2" r="1.3" fill="#d40000"/><circle cx="160.8" cy="62.9" r="0.7" fill="#ff2424"/><circle cx="136.3" cy="38.8" r="1.9" fill="#900000"/><circle cx="134.4" cy="38.9" r="2.6" fill="#a00000"/><circle cx="133.4" cy="39.6" r="1.7" fill="#d40000"/><circle cx="135.2" cy="38.1" r="0.9" fill="#ff2424"/><circle cx="160.4" cy="37.4" r="23.3" fill="url(#g)"/><rect x="165.8" y="39.8" width="1.4" height="1.4" fill="#7070ff"/><rect x="165.8" y="16.7" width="1.8" height="1.8" fill="#8a10a8"/><rect x="172" y="46.3" width="1.8" height="1.8" fill="#7070ff"/><rect x="177.1" y="40.3" width="2" height="2" fill="#ff9898"/><rect x="173" y="47.5" width="1.4" height="1.4" fill="#ff9898"/><rect x="153.3" y="38.9" width="1.4" height="1.4" fill="#7070ff"/><rect x="155.2" y="32.8" width="1.8" height="1.8" fill="#8a10a8"/><rect x="149.5" y="41.9" width="1.8" height="1.8" fill="#8a10a8"/><rect x="175" y="34.9" width="2" height="2" fill="#7070ff"/><rect x="168.6" y="36.4" width="1.4" height="1.4" fill="#7070ff"/><rect x="151.1" y="55.5" width="1.4" height="1.4" fill="#8a10a8"/><rect x="163.7" y="41.4" width="1.8" height="1.8" fill="#ff9898"/><rect x="140.1" y="45" width="2" height="2" fill="#8a10a8"/><rect x="148.4" y="37.4" width="1.8" height="1.8" fill="#ff9898"/><rect x="141.1" y="41" width="1.4" height="1.4" fill="#8a10a8"/><rect x="167.2" y="45" width="1.8" height="1.8" fill="#7070ff"/><rect x="168.6" y="37.3" width="2" height="2" fill="#7070ff"/><rect x="173.2" y="45.5" width="1.8" height="1.8" fill="#8a10a8"/><rect x="166.1" y="30.3" width="1.4" height="1.4" fill="#ff9898"/><rect x="154.1" y="57.7" width="2" height="2" fill="#ff9898"/><rect x="178.5" y="43.6" width="1.4" height="1.4" fill="#7070ff"/><rect x="161.6" y="24.3" width="1.8" height="1.8" fill="#8a10a8"/><rect x="150.3" y="25.3" width="2" height="2" fill="#8a10a8"/><rect x="157.8" y="50.2" width="1.4" height="1.4" fill="#ff9898"/><rect x="148.3" y="35.6" width="1.4" height="1.4" fill="#ff9898"/><rect x="157.9" y="47.1" width="1.4" height="1.4" fill="#7070ff"/><rect x="151.4" y="38.1" width="2" height="2" fill="#ff9898"/><rect x="156.3" y="57.5" width="2" height="2" fill="#8a10a8"/><rect x="139.4" y="42.6" width="2" height="2" fill="#8a10a8"/><rect x="151.6" y="54" width="1.4" height="1.4" fill="#7070ff"/><rect x="144.2" y="28.9" width="1.8" height="1.8" fill="#8a10a8"/><rect x="163.2" y="16.9" width="1.4" height="1.4" fill="#7070ff"/><rect x="145.2" y="34" width="2" height="2" fill="#7070ff"/><rect x="166.9" y="58.7" width="1.4" height="1.4" fill="#8a10a8"/><rect x="153.2" y="25.1" width="1.8" height="1.8" fill="#7070ff"/><rect x="142.2" y="47.8" width="1.4" height="1.4" fill="#ff9898"/><rect x="163.5" y="47.9" width="2" height="2" fill="#7070ff"/><rect x="172.9" y="31.6" width="1.8" height="1.8" fill="#8a10a8"/><rect x="161.6" y="44.2" width="2" height="2" fill="#8a10a8"/><rect x="141.2" y="31" width="1.8" height="1.8" fill="#7070ff"/><rect x="159.3" y="37.2" width="1.4" height="1.4" fill="#ff9898"/><rect x="150.8" y="39.6" width="1.4" height="1.4" fill="#7070ff"/><rect x="170.4" y="56.2" width="1.8" height="1.8" fill="#ff9898"/><rect x="158.9" y="43.4" width="2" height="2" fill="#8a10a8"/><rect x="143.1" y="41.2" width="2" height="2" fill="#8a10a8"/><rect x="177.9" y="26" width="1.4" height="1.4" fill="#7070ff"/><rect x="151.7" y="25.1" width="1.4" height="1.4" fill="#8a10a8"/><rect x="178.9" y="33.7" width="1.4" height="1.4" fill="#7070ff"/><rect x="139.6" y="32.9" width="1.4" height="1.4" fill="#7070ff"/><rect x="157.1" y="39.9" width="1.8" height="1.8" fill="#7070ff"/><rect x="168.5" y="56.9" width="1.4" height="1.4" fill="#ff9898"/><rect x="161.4" y="29.8" width="2" height="2" fill="#ff9898"/><rect x="163.5" y="45" width="1.4" height="1.4" fill="#ff9898"/><rect x="157.3" y="39.4" width="2" height="2" fill="#ff9898"/><rect x="162.5" y="18.7" width="1.4" height="1.4" fill="#ff9898"/><rect x="175.3" y="21.7" width="2" height="2" fill="#ff9898"/><rect x="174.1" y="27.4" width="2" height="2" fill="#ff9898"/><rect x="165.1" y="49.4" width="2" height="2" fill="#ff9898"/><rect x="152.2" y="19.4" width="2" height="2" fill="#7070ff"/><rect x="169.3" y="35.7" width="2" height="2" fill="#7070ff"/><circle cx="151.3" cy="15.1" r="1.6" fill="#900000"/><circle cx="150.5" cy="13.2" r="2.2" fill="#a00000"/><circle cx="149.9" cy="14" r="1.5" fill="#d40000"/><circle cx="151.2" cy="12.6" r="0.8" fill="#ff2424"/><circle cx="157" cy="61.3" r="1.2" fill="#900000"/><circle cx="156.7" cy="63.2" r="1.7" fill="#a00000"/><circle cx="156.5" cy="64" r="1.1" fill="#d40000"/><circle cx="157.2" cy="62.7" r="0.6" fill="#ff2424"/><circle cx="184.4" cy="40.1" r="1.1" fill="#900000"/><circle cx="186.3" cy="40.3" r="1.5" fill="#a00000"/><circle cx="186.7" cy="40.9" r="1.1" fill="#d40000"/><circle cx="186.8" cy="39.8" r="0.6" fill="#ff2424"/><circle cx="184.3" cy="40.6" r="1.4" fill="#900000"/><circle cx="186.2" cy="40.9" r="2" fill="#a00000"/><circle cx="186.9" cy="41.4" r="1.3" fill="#d40000"/><circle cx="186.8" cy="40.3" r="0.7" fill="#ff2424"/><circle cx="182.8" cy="28.7" r="1.1" fill="#900000"/><circle cx="184.6" cy="27.9" r="1.5" fill="#a00000"/><circle cx="184" cy="27.7" r="1.1" fill="#d40000"/><circle cx="185.1" cy="27.5" r="0.6" fill="#ff2424"/><circle cx="136.4" cy="38.9" r="1.8" fill="#900000"/><circle cx="134.4" cy="39.1" r="2.5" fill="#a00000"/><circle cx="135" cy="38.1" r="1.7" fill="#d40000"/><circle cx="135.2" cy="38.2" r="0.9" fill="#ff2424"/><circle cx="184.1" cy="33.1" r="1.4" fill="#900000"/><circle cx="186" cy="32.8" r="1.9" fill="#a00000"/><circle cx="186.8" cy="32.4" r="1.3" fill="#d40000"/><circle cx="186.6" cy="32.2" r="0.7" fill="#ff2424"/><circle cx="184.3" cy="39.3" r="1.2" fill="#900000"/><circle cx="186.2" cy="39.5" r="1.6" fill="#a00000"/><circle cx="186.7" cy="40.1" r="1.1" fill="#d40000"/><circle cx="186.8" cy="38.9" r="0.6" fill="#ff2424"/><circle cx="147" cy="17.9" r="1.1" fill="#900000"/><circle cx="145.9" cy="16.4" r="1.5" fill="#a00000"/><circle cx="146.5" cy="16.6" r="1.1" fill="#d40000"/><circle cx="146.4" cy="15.9" r="0.6" fill="#ff2424"/><circle cx="161.1" cy="60.7" r="1.6" fill="#900000"/><circle cx="161.2" cy="62.6" r="2.2" fill="#a00000"/><circle cx="161.2" cy="61.7" r="1.5" fill="#d40000"/><circle cx="161.9" cy="61.9" r="0.8" fill="#ff2424"/><circle cx="180.1" cy="49.9" r="1.5" fill="#900000"/><circle cx="181.7" cy="50.9" r="2" fill="#a00000"/><circle cx="182" cy="50" r="1.4" fill="#d40000"/><circle cx="182.4" cy="50.2" r="0.7" fill="#ff2424"/><circle cx="180.8" cy="48" r="1.5" fill="#900000"/><circle cx="182.5" cy="48.9" r="2" fill="#a00000"/><circle cx="183.3" cy="48.4" r="1.4" fill="#d40000"/><circle cx="183.1" cy="48.2" r="0.7" fill="#ff2424"/><circle cx="138.7" cy="44" r="1.6" fill="#900000"/><circle cx="137" cy="44.5" r="2.2" fill="#a00000"/><circle cx="136" cy="44.3" r="1.5" fill="#d40000"/><circle cx="137.6" cy="43.8" r="0.8" fill="#ff2424"/><circle cx="143.2" cy="22.6" r="1.2" fill="#900000"/><circle cx="141.8" cy="21.4" r="1.7" fill="#a00000"/><circle cx="141.1" cy="21.8" r="1.2" fill="#d40000"/><circle cx="142.4" cy="20.9" r="0.6" fill="#ff2424"/><circle cx="178.4" cy="50.5" r="1.4" fill="#900000"/><circle cx="179.9" cy="51.5" r="2" fill="#a00000"/><circle cx="180.3" cy="50.7" r="1.4" fill="#d40000"/><circle cx="180.5" cy="50.9" r="0.7" fill="#ff2424"/><circle cx="168.4" cy="57.9" r="1.3" fill="#900000"/><circle cx="169.1" cy="59.6" r="1.8" fill="#a00000"/><circle cx="168.8" cy="60.4" r="1.2" fill="#d40000"/><circle cx="169.6" cy="59" r="0.6" fill="#ff2424"/><circle cx="145.2" cy="52.7" r="1.7" fill="#900000"/><circle cx="144" cy="54" r="2.4" fill="#a00000"/><circle cx="145" cy="54.4" r="1.6" fill="#d40000"/><circle cx="144.7" cy="53.2" r="0.9" fill="#ff2424"/><circle cx="167.6" cy="57.2" r="1.5" fill="#900000"/><circle cx="168.1" cy="58.8" r="2.1" fill="#a00000"/><circle cx="168.3" cy="59.7" r="1.4" fill="#d40000"/><circle cx="168.8" cy="58.1" r="0.8" fill="#ff2424"/><circle cx="155.9" cy="17.1" r="1.6" fill="#900000"/><circle cx="155.5" cy="15.5" r="2.2" fill="#a00000"/><circle cx="154.7" cy="14.9" r="1.5" fill="#d40000"/><circle cx="156.2" cy="14.8" r="0.8" fill="#ff2424"/><circle cx="174" cy="21.8" r="1.2" fill="#900000"/><circle cx="175.1" cy="20.5" r="1.6" fill="#a00000"/><circle cx="175" cy="19.8" r="1.1" fill="#d40000"/><circle cx="175.7" cy="20" r="0.6" fill="#ff2424"/><circle cx="178.3" cy="46.8" r="1.4" fill="#900000"/><circle cx="179.7" cy="47.5" r="2" fill="#a00000"/><circle cx="179.3" cy="48.3" r="1.3" fill="#d40000"/><circle cx="180.3" cy="46.9" r="0.7" fill="#ff2424"/><circle cx="140.5" cy="37.4" r="1.8" fill="#900000"/><circle cx="138.9" cy="37.4" r="2.4" fill="#a00000"/><circle cx="139.1" cy="36.3" r="1.6" fill="#d40000"/><circle cx="139.7" cy="36.6" r="0.9" fill="#ff2424"/><circle cx="151.3" cy="19.8" r="1.3" fill="#900000"/><circle cx="150.6" cy="18.4" r="1.9" fill="#a00000"/><circle cx="150.2" cy="17.7" r="1.3" fill="#d40000"/><circle cx="151.2" cy="17.8" r="0.7" fill="#ff2424"/><circle cx="144.6" cy="27.1" r="1.2" fill="#900000"/><circle cx="143.4" cy="26.3" r="1.7" fill="#a00000"/><circle cx="142.6" cy="26.2" r="1.1" fill="#d40000"/><circle cx="143.9" cy="25.8" r="0.6" fill="#ff2424"/><circle cx="175.5" cy="26.7" r="1.2" fill="#900000"/><circle cx="176.7" cy="25.8" r="1.6" fill="#a00000"/><circle cx="176.2" cy="25.3" r="1.1" fill="#d40000"/><circle cx="177.2" cy="25.3" r="0.6" fill="#ff2424"/><circle cx="161.7" cy="55.8" r="1.8" fill="#900000"/><circle cx="161.8" cy="57.3" r="2.5" fill="#a00000"/><circle cx="161.1" cy="56.5" r="1.7" fill="#d40000"/><circle cx="162.6" cy="56.5" r="0.9" fill="#ff2424"/><circle cx="165.3" cy="54.9" r="1.1" fill="#900000"/><circle cx="165.7" cy="56.4" r="1.6" fill="#a00000"/><circle cx="165" cy="56.3" r="1.1" fill="#d40000"/><circle cx="166.2" cy="55.9" r="0.6" fill="#ff2424"/><circle cx="165.5" cy="20.6" r="1.5" fill="#900000"/><circle cx="165.9" cy="19.3" r="2" fill="#a00000"/><circle cx="165.1" cy="19.6" r="1.4" fill="#d40000"/><circle cx="166.6" cy="18.6" r="0.7" fill="#ff2424"/><circle cx="144.2" cy="31.3" r="1.2" fill="#900000"/><circle cx="142.9" cy="30.8" r="1.7" fill="#a00000"/><circle cx="142.8" cy="31.5" r="1.2" fill="#d40000"/><circle cx="143.4" cy="30.2" r="0.6" fill="#ff2424"/><circle cx="149.8" cy="23.8" r="1.5" fill="#900000"/><circle cx="148.9" cy="22.7" r="2" fill="#a00000"/><circle cx="149.7" cy="23" r="1.4" fill="#d40000"/><circle cx="149.5" cy="22" r="0.7" fill="#ff2424"/><circle cx="147.2" cy="26.7" r="1.6" fill="#900000"/><circle cx="146.2" cy="25.9" r="2.2" fill="#a00000"/><circle cx="146.2" cy="26.9" r="1.5" fill="#d40000"/><circle cx="146.9" cy="25.2" r="0.8" fill="#ff2424"/><circle cx="145.8" cy="44" r="1.3" fill="#900000"/><circle cx="144.6" cy="44.6" r="1.8" fill="#a00000"/><circle cx="145.3" cy="45" r="1.3" fill="#d40000"/><circle cx="145.2" cy="44" r="0.7" fill="#ff2424"/><circle cx="146.4" cy="31.4" r="1.3" fill="#900000"/><circle cx="145.3" cy="30.9" r="1.8" fill="#a00000"/><circle cx="146" cy="30.5" r="1.3" fill="#d40000"/><circle cx="145.9" cy="30.3" r="0.7" fill="#ff2424"/><circle cx="150.5" cy="26.1" r="1.3" fill="#900000"/><circle cx="149.7" cy="25.2" r="1.8" fill="#a00000"/><circle cx="150.4" cy="25.7" r="1.3" fill="#d40000"/><circle cx="150.3" cy="24.6" r="0.7" fill="#ff2424"/><circle cx="150.7" cy="48.4" r="1.4" fill="#900000"/><circle cx="149.9" cy="49.3" r="1.9" fill="#a00000"/><circle cx="150.8" cy="49" r="1.3" fill="#d40000"/><circle cx="150.6" cy="48.7" r="0.7" fill="#ff2424"/><circle cx="164.2" cy="51.5" r="1.2" fill="#900000"/><circle cx="164.5" cy="52.6" r="1.6" fill="#a00000"/><circle cx="164.1" cy="53.2" r="1.1" fill="#d40000"/><circle cx="165" cy="52.1" r="0.6" fill="#ff2424"/><circle cx="161.8" cy="23.4" r="1.3" fill="#900000"/><circle cx="161.9" cy="22.2" r="1.8" fill="#a00000"/><circle cx="161.5" cy="21.5" r="1.2" fill="#d40000"/><circle cx="162.4" cy="21.7" r="0.6" fill="#ff2424"/><circle cx="171.7" cy="29" r="1.5" fill="#900000"/><circle cx="172.6" cy="28.3" r="2" fill="#a00000"/><circle cx="173.3" cy="28.9" r="1.4" fill="#d40000"/><circle cx="173.2" cy="27.7" r="0.7" fill="#ff2424"/><circle cx="169" cy="47.7" r="1.8" fill="#900000"/><circle cx="169.7" cy="48.6" r="2.4" fill="#a00000"/><circle cx="169.2" cy="49.5" r="1.7" fill="#d40000"/><circle cx="170.5" cy="47.8" r="0.9" fill="#ff2424"/><circle cx="160.7" cy="24.1" r="1.6" fill="#900000"/><circle cx="160.7" cy="23.1" r="2.2" fill="#a00000"/><circle cx="159.7" cy="23.4" r="1.5" fill="#d40000"/><circle cx="161.4" cy="22.3" r="0.8" fill="#ff2424"/><circle cx="161" cy="50.3" r="1.8" fill="#900000"/><circle cx="161" cy="51.4" r="2.4" fill="#a00000"/><circle cx="162" cy="51.8" r="1.7" fill="#d40000"/><circle cx="161.8" cy="50.6" r="0.9" fill="#ff2424"/><circle cx="148.4" cy="33.7" r="1.3" fill="#900000"/><circle cx="147.5" cy="33.4" r="1.8" fill="#a00000"/><circle cx="147.3" cy="34.2" r="1.2" fill="#d40000"/><circle cx="148" cy="32.8" r="0.6" fill="#ff2424"/><circle cx="148.8" cy="34" r="1.3" fill="#900000"/><circle cx="147.9" cy="33.7" r="1.8" fill="#a00000"/><circle cx="148.3" cy="33" r="1.2" fill="#d40000"/><circle cx="148.5" cy="33.1" r="0.7" fill="#ff2424"/><circle cx="148.7" cy="39.8" r="1.5" fill="#900000"/><circle cx="147.7" cy="40" r="2.1" fill="#a00000"/><circle cx="147.2" cy="40.7" r="1.4" fill="#d40000"/><circle cx="148.4" cy="39.3" r="0.7" fill="#ff2424"/><circle cx="151.5" cy="29.6" r="1.5" fill="#900000"/><circle cx="150.8" cy="28.9" r="2.1" fill="#a00000"/><circle cx="151.3" cy="28.2" r="1.4" fill="#d40000"/><circle cx="151.4" cy="28.3" r="0.7" fill="#ff2424"/><circle cx="161.6" cy="25.9" r="1.5" fill="#900000"/><circle cx="161.7" cy="25" r="2.1" fill="#a00000"/><circle cx="160.7" cy="25.3" r="1.4" fill="#d40000"/><circle cx="162.3" cy="24.3" r="0.8" fill="#ff2424"/><circle cx="171.6" cy="34.7" r="1.6" fill="#900000"/><circle cx="172.5" cy="34.5" r="2.2" fill="#a00000"/><circle cx="171.8" cy="33.8" r="1.5" fill="#d40000"/><circle cx="173.2" cy="33.8" r="0.8" fill="#ff2424"/><circle cx="168.7" cy="43.6" r="1.4" fill="#900000"/><circle cx="169.4" cy="44.1" r="2" fill="#a00000"/><circle cx="168.6" cy="44.5" r="1.3" fill="#d40000"/><circle cx="170" cy="43.5" r="0.7" fill="#ff2424"/><circle cx="167" cy="29.7" r="1.2" fill="#900000"/><circle cx="167.6" cy="29.1" r="1.7" fill="#a00000"/><circle cx="166.9" cy="29.4" r="1.1" fill="#d40000"/><circle cx="168.1" cy="28.6" r="0.6" fill="#ff2424"/><circle cx="166.4" cy="31" r="1.8" fill="#900000"/><circle cx="166.9" cy="30.5" r="2.4" fill="#a00000"/><circle cx="166.5" cy="31.6" r="1.7" fill="#d40000"/><circle cx="167.7" cy="29.7" r="0.9" fill="#ff2424"/><circle cx="165.4" cy="30.7" r="1.4" fill="#900000"/><circle cx="165.8" cy="30.2" r="1.9" fill="#a00000"/><circle cx="165.1" cy="29.7" r="1.3" fill="#d40000"/><circle cx="166.4" cy="29.6" r="0.7" fill="#ff2424"/><circle cx="206.5" cy="79.5" r="0.8" fill="#900000"/><circle cx="206.5" cy="79.6" r="1.2" fill="#a00000"/><circle cx="207.1" cy="79.7" r="0.8" fill="#d40000"/><circle cx="206.9" cy="79.2" r="0.4" fill="#ff2424"/><circle cx="201.7" cy="82.1" r="0.8" fill="#900000"/><circle cx="201.4" cy="82.3" r="1.1" fill="#a00000"/><circle cx="201.7" cy="82.8" r="0.8" fill="#d40000"/><circle cx="201.7" cy="82" r="0.4" fill="#ff2424"/><circle cx="211" cy="82" r="0.9" fill="#900000"/><circle cx="211.4" cy="82.2" r="1.2" fill="#a00000"/><circle cx="211.9" cy="81.9" r="0.8" fill="#d40000"/><circle cx="211.8" cy="81.9" r="0.4" fill="#ff2424"/><circle cx="206.5" cy="85.3" r="0.7" fill="#900000"/><circle cx="206.5" cy="85.8" r="1" fill="#a00000"/><circle cx="206.3" cy="86.1" r="0.7" fill="#d40000"/><circle cx="206.9" cy="85.4" r="0.4" fill="#ff2424"/><circle cx="208.9" cy="86.9" r="1" fill="#900000"/><circle cx="209.2" cy="87.5" r="1.4" fill="#a00000"/><circle cx="208.7" cy="87.1" r="1" fill="#d40000"/><circle cx="209.6" cy="87.1" r="0.5" fill="#ff2424"/><circle cx="213.7" cy="82.7" r="0.7" fill="#900000"/><circle cx="214.4" cy="83" r="1" fill="#a00000"/><circle cx="214.4" cy="83.4" r="0.7" fill="#d40000"/><circle cx="214.7" cy="82.6" r="0.4" fill="#ff2424"/><circle cx="205.1" cy="69.7" r="0.8" fill="#900000"/><circle cx="205.1" cy="69" r="1.2" fill="#a00000"/><circle cx="205.5" cy="68.7" r="0.8" fill="#d40000"/><circle cx="205.4" cy="68.6" r="0.4" fill="#ff2424"/><circle cx="196.6" cy="81.5" r="0.9" fill="#900000"/><circle cx="195.8" cy="81.7" r="1.3" fill="#a00000"/><circle cx="195.8" cy="82.3" r="0.9" fill="#d40000"/><circle cx="196.2" cy="81.3" r="0.5" fill="#ff2424"/><circle cx="216" cy="78.3" r="0.9" fill="#900000"/><circle cx="216.8" cy="78.3" r="1.3" fill="#a00000"/><circle cx="216.2" cy="78.3" r="0.9" fill="#d40000"/><circle cx="217.2" cy="77.8" r="0.5" fill="#ff2424"/><circle cx="196.9" cy="85.2" r="0.8" fill="#900000"/><circle cx="196.2" cy="85.7" r="1.1" fill="#a00000"/><circle cx="196" cy="85.2" r="0.7" fill="#d40000"/><circle cx="196.5" cy="85.3" r="0.4" fill="#ff2424"/><circle cx="196" cy="87.2" r="1" fill="#900000"/><circle cx="195.2" cy="87.8" r="1.4" fill="#a00000"/><circle cx="194.5" cy="87.9" r="1" fill="#d40000"/><circle cx="195.7" cy="87.4" r="0.5" fill="#ff2424"/><circle cx="197.2" cy="69.4" r="1" fill="#900000"/><circle cx="196.5" cy="68.6" r="1.3" fill="#a00000"/><circle cx="196.6" cy="68" r="0.9" fill="#d40000"/><circle cx="196.9" cy="68.2" r="0.5" fill="#ff2424"/><circle cx="209.6" cy="66.6" r="1.2" fill="#900000"/><circle cx="209.9" cy="65.6" r="1.6" fill="#a00000"/><circle cx="209.3" cy="65.1" r="1.1" fill="#d40000"/><circle cx="210.4" cy="65.1" r="0.6" fill="#ff2424"/><circle cx="191.7" cy="75.5" r="0.7" fill="#900000"/><circle cx="190.6" cy="75.2" r="1" fill="#a00000"/><circle cx="190.1" cy="75.2" r="0.7" fill="#d40000"/><circle cx="190.9" cy="74.9" r="0.4" fill="#ff2424"/><circle cx="192.2" cy="73.7" r="1" fill="#900000"/><circle cx="191.2" cy="73.3" r="1.4" fill="#a00000"/><circle cx="190.9" cy="73.9" r="1" fill="#d40000"/><circle cx="191.6" cy="72.9" r="0.5" fill="#ff2424"/><circle cx="205.1" cy="64.5" r="1" fill="#900000"/><circle cx="205" cy="63.4" r="1.4" fill="#a00000"/><circle cx="204.6" cy="63.8" r="1" fill="#d40000"/><circle cx="205.5" cy="62.9" r="0.5" fill="#ff2424"/><circle cx="193.4" cy="87" r="1" fill="#900000"/><circle cx="192.4" cy="87.7" r="1.4" fill="#a00000"/><circle cx="191.9" cy="87.2" r="0.9" fill="#d40000"/><circle cx="192.8" cy="87.2" r="0.5" fill="#ff2424"/><circle cx="217.4" cy="70.1" r="1" fill="#900000"/><circle cx="218.4" cy="69.4" r="1.4" fill="#a00000"/><circle cx="218.9" cy="69.1" r="1" fill="#d40000"/><circle cx="218.8" cy="68.9" r="0.5" fill="#ff2424"/><circle cx="220.4" cy="79.8" r="1" fill="#900000"/><circle cx="221.6" cy="79.9" r="1.4" fill="#a00000"/><circle cx="221.5" cy="79.3" r="1" fill="#d40000"/><circle cx="222.1" cy="79.4" r="0.5" fill="#ff2424"/><circle cx="214.5" cy="66.9" r="1" fill="#900000"/><circle cx="215.2" cy="65.9" r="1.4" fill="#a00000"/><circle cx="215.3" cy="66.5" r="1" fill="#d40000"/><circle cx="215.7" cy="65.4" r="0.5" fill="#ff2424"/><circle cx="191.7" cy="73.2" r="1" fill="#900000"/><circle cx="190.6" cy="72.7" r="1.4" fill="#a00000"/><circle cx="190.1" cy="72.3" r="0.9" fill="#d40000"/><circle cx="191" cy="72.2" r="0.5" fill="#ff2424"/><circle cx="219.6" cy="73.2" r="0.7" fill="#900000"/><circle cx="220.7" cy="72.7" r="1" fill="#a00000"/><circle cx="220.7" cy="72.3" r="0.7" fill="#d40000"/><circle cx="221" cy="72.4" r="0.4" fill="#ff2424"/><circle cx="192.5" cy="71.3" r="0.8" fill="#900000"/><circle cx="191.5" cy="70.7" r="1.1" fill="#a00000"/><circle cx="191" cy="70.7" r="0.8" fill="#d40000"/><circle cx="191.8" cy="70.4" r="0.4" fill="#ff2424"/><circle cx="203.4" cy="64" r="1" fill="#900000"/><circle cx="203.3" cy="62.8" r="1.3" fill="#a00000"/><circle cx="203.2" cy="62.2" r="0.9" fill="#d40000"/><circle cx="203.7" cy="62.4" r="0.5" fill="#ff2424"/><circle cx="212.4" cy="92.5" r="1.1" fill="#900000"/><circle cx="213" cy="93.6" r="1.5" fill="#a00000"/><circle cx="212.4" cy="93.8" r="1" fill="#d40000"/><circle cx="213.5" cy="93.2" r="0.5" fill="#ff2424"/><circle cx="214.9" cy="67" r="1.1" fill="#900000"/><circle cx="215.7" cy="66" r="1.6" fill="#a00000"/><circle cx="215" cy="66.3" r="1.1" fill="#d40000"/><circle cx="216.2" cy="65.5" r="0.6" fill="#ff2424"/><circle cx="212.7" cy="92.4" r="1" fill="#900000"/><circle cx="213.2" cy="93.5" r="1.3" fill="#a00000"/><circle cx="213.8" cy="93.5" r="0.9" fill="#d40000"/><circle cx="213.7" cy="93.1" r="0.5" fill="#ff2424"/><circle cx="192.9" cy="70.7" r="0.9" fill="#900000"/><circle cx="191.9" cy="70" r="1.2" fill="#a00000"/><circle cx="191.7" cy="69.5" r="0.8" fill="#d40000"/><circle cx="192.2" cy="69.7" r="0.4" fill="#ff2424"/><circle cx="214.2" cy="66.4" r="1.2" fill="#900000"/><circle cx="214.9" cy="65.4" r="1.6" fill="#a00000"/><circle cx="215.5" cy="65.8" r="1.1" fill="#d40000"/><circle cx="215.4" cy="64.9" r="0.6" fill="#ff2424"/><circle cx="213.4" cy="65.9" r="1.1" fill="#900000"/><circle cx="214" cy="64.9" r="1.5" fill="#a00000"/><circle cx="213.7" cy="64.3" r="1" fill="#d40000"/><circle cx="214.5" cy="64.4" r="0.5" fill="#ff2424"/><circle cx="205.6" cy="79" r="14.7" fill="url(#g)"/><rect x="193.3" y="75.9" width="1.4" height="1.4" fill="#7070ff"/><rect x="194.5" y="79.9" width="1.4" height="1.4" fill="#7070ff"/><rect x="209.8" y="66.7" width="1.8" height="1.8" fill="#7070ff"/><rect x="199.9" y="81.2" width="1.4" height="1.4" fill="#7070ff"/><rect x="199.3" y="89.8" width="2" height="2" fill="#8a10a8"/><rect x="193.3" y="77.5" width="2" height="2" fill="#ff9898"/><rect x="206.5" y="84.7" width="1.8" height="1.8" fill="#8a10a8"/><rect x="213.4" y="68" width="1.4" height="1.4" fill="#ff9898"/><rect x="207" y="68.2" width="1.8" height="1.8" fill="#7070ff"/><rect x="212" y="78.6" width="1.8" height="1.8" fill="#8a10a8"/><rect x="204.3" y="86.7" width="1.8" height="1.8" fill="#7070ff"/><rect x="200.3" y="69.7" width="1.4" height="1.4" fill="#ff9898"/><rect x="202.2" y="85.4" width="1.8" height="1.8" fill="#ff9898"/><rect x="210.5" y="79" width="1.4" height="1.4" fill="#7070ff"/><rect x="200.7" y="90.5" width="1.4" height="1.4" fill="#ff9898"/><rect x="210.2" y="78.8" width="1.8" height="1.8" fill="#8a10a8"/><rect x="205.4" y="89.4" width="1.4" height="1.4" fill="#ff9898"/><rect x="213.4" y="88.9" width="1.4" height="1.4" fill="#7070ff"/><rect x="194" y="83.6" width="1.4" height="1.4" fill="#8a10a8"/><rect x="199.9" y="91.6" width="1.8" height="1.8" fill="#7070ff"/><rect x="212.9" y="73.3" width="1.4" height="1.4" fill="#7070ff"/><rect x="204.8" y="93.1" width="2" height="2" fill="#ff9898"/><rect x="209.4" y="81.3" width="1.8" height="1.8" fill="#ff9898"/><rect x="200.7" y="77" width="1.8" height="1.8" fill="#7070ff"/><rect x="216.2" y="78.2" width="1.8" height="1.8" fill="#ff9898"/><rect x="213.7" y="83.6" width="1.4" height="1.4" fill="#8a10a8"/><rect x="198" y="81.3" width="1.4" height="1.4" fill="#ff9898"/><rect x="201.1" y="90.8" width="1.8" height="1.8" fill="#7070ff"/><rect x="214" y="85.9" width="2" height="2" fill="#8a10a8"/><rect x="200.8" y="83" width="2" height="2" fill="#ff9898"/><rect x="199.3" y="78.2" width="1.4" height="1.4" fill="#7070ff"/><rect x="212.2" y="85.2" width="2" height="2" fill="#7070ff"/><rect x="195.1" y="81.1" width="1.8" height="1.8" fill="#ff9898"/><rect x="205.2" y="85.8" width="1.8" height="1.8" fill="#ff9898"/><rect x="205.5" y="86.4" width="2" height="2" fill="#8a10a8"/><rect x="192.1" y="74.8" width="1.4" height="1.4" fill="#ff9898"/><rect x="201" y="70.4" width="2" height="2" fill="#7070ff"/><rect x="208.8" y="85.1" width="2" height="2" fill="#8a10a8"/><circle cx="203.3" cy="63.9" r="0.8" fill="#900000"/><circle cx="203.1" cy="62.7" r="1.1" fill="#a00000"/><circle cx="202.8" cy="63.1" r="0.7" fill="#d40000"/><circle cx="203.4" cy="62.4" r="0.4" fill="#ff2424"/><circle cx="211.4" cy="93.1" r="1" fill="#900000"/><circle cx="211.9" cy="94.2" r="1.4" fill="#a00000"/><circle cx="212" cy="93.6" r="1" fill="#d40000"/><circle cx="212.3" cy="93.7" r="0.5" fill="#ff2424"/><circle cx="216.2" cy="68.1" r="0.9" fill="#900000"/><circle cx="217.1" cy="67.2" r="1.2" fill="#a00000"/><circle cx="217.2" cy="67.8" r="0.9" fill="#d40000"/><circle cx="217.5" cy="66.8" r="0.5" fill="#ff2424"/><circle cx="197.9" cy="66" r="1.2" fill="#900000"/><circle cx="197.3" cy="65" r="1.6" fill="#a00000"/><circle cx="198" cy="64.8" r="1.1" fill="#d40000"/><circle cx="197.8" cy="64.5" r="0.6" fill="#ff2424"/><circle cx="210.6" cy="65.1" r="1" fill="#900000"/><circle cx="211" cy="64" r="1.4" fill="#a00000"/><circle cx="210.4" cy="63.7" r="0.9" fill="#d40000"/><circle cx="211.5" cy="63.6" r="0.5" fill="#ff2424"/><circle cx="213.6" cy="66.6" r="1.1" fill="#900000"/><circle cx="214.3" cy="65.6" r="1.5" fill="#a00000"/><circle cx="213.6" cy="65.9" r="1" fill="#d40000"/><circle cx="214.8" cy="65.1" r="0.6" fill="#ff2424"/><circle cx="191.8" cy="83.9" r="0.8" fill="#900000"/><circle cx="190.7" cy="84.3" r="1.1" fill="#a00000"/><circle cx="190.4" cy="84.6" r="0.7" fill="#d40000"/><circle cx="191" cy="83.9" r="0.4" fill="#ff2424"/><circle cx="192.7" cy="84.5" r="0.8" fill="#900000"/><circle cx="191.6" cy="84.9" r="1" fill="#a00000"/><circle cx="191.2" cy="85" r="0.7" fill="#d40000"/><circle cx="192" cy="84.6" r="0.4" fill="#ff2424"/><circle cx="195.1" cy="70.1" r="0.7" fill="#900000"/><circle cx="194.2" cy="69.4" r="1" fill="#a00000"/><circle cx="193.8" cy="69.5" r="0.7" fill="#d40000"/><circle cx="194.5" cy="69" r="0.4" fill="#ff2424"/><circle cx="194.6" cy="70.9" r="1" fill="#900000"/><circle cx="193.8" cy="70.3" r="1.4" fill="#a00000"/><circle cx="193.4" cy="70.8" r="1" fill="#d40000"/><circle cx="194.2" cy="69.8" r="0.5" fill="#ff2424"/><circle cx="216.5" cy="87.1" r="1" fill="#900000"/><circle cx="217.4" cy="87.8" r="1.4" fill="#a00000"/><circle cx="218" cy="87.7" r="0.9" fill="#d40000"/><circle cx="217.8" cy="87.4" r="0.5" fill="#ff2424"/><circle cx="209.5" cy="66.5" r="0.8" fill="#900000"/><circle cx="209.8" cy="65.5" r="1.1" fill="#a00000"/><circle cx="209.3" cy="65.4" r="0.8" fill="#d40000"/><circle cx="210.1" cy="65.1" r="0.4" fill="#ff2424"/><circle cx="218.6" cy="78" r="1" fill="#900000"/><circle cx="219.7" cy="77.9" r="1.4" fill="#a00000"/><circle cx="219.3" cy="78.4" r="1" fill="#d40000"/><circle cx="220.1" cy="77.5" r="0.5" fill="#ff2424"/><circle cx="194.3" cy="75.5" r="0.8" fill="#900000"/><circle cx="193.4" cy="75.2" r="1.2" fill="#a00000"/><circle cx="192.8" cy="75.1" r="0.8" fill="#d40000"/><circle cx="193.7" cy="74.8" r="0.4" fill="#ff2424"/><circle cx="194.2" cy="79.4" r="1.1" fill="#900000"/><circle cx="193.3" cy="79.4" r="1.5" fill="#a00000"/><circle cx="192.8" cy="79.9" r="1" fill="#d40000"/><circle cx="193.7" cy="79" r="0.5" fill="#ff2424"/><circle cx="195.6" cy="74" r="1.1" fill="#900000"/><circle cx="194.8" cy="73.6" r="1.5" fill="#a00000"/><circle cx="195.2" cy="73.1" r="1" fill="#d40000"/><circle cx="195.3" cy="73.2" r="0.5" fill="#ff2424"/><circle cx="201.8" cy="69.3" r="0.9" fill="#900000"/><circle cx="201.5" cy="68.5" r="1.2" fill="#a00000"/><circle cx="201" cy="68.8" r="0.8" fill="#d40000"/><circle cx="201.9" cy="68.1" r="0.4" fill="#ff2424"/><circle cx="197.1" cy="74.2" r="1" fill="#900000"/><circle cx="196.4" cy="73.8" r="1.4" fill="#a00000"/><circle cx="195.8" cy="74.1" r="0.9" fill="#d40000"/><circle cx="196.8" cy="73.4" r="0.5" fill="#ff2424"/><circle cx="213.7" cy="73.7" r="1.1" fill="#900000"/><circle cx="214.4" cy="73.3" r="1.5" fill="#a00000"/><circle cx="214.5" cy="74" r="1" fill="#d40000"/><circle cx="214.9" cy="72.8" r="0.5" fill="#ff2424"/><circle cx="197.4" cy="76.7" r="0.8" fill="#900000"/><circle cx="196.8" cy="76.5" r="1.1" fill="#a00000"/><circle cx="196.7" cy="76" r="0.7" fill="#d40000"/><circle cx="197.1" cy="76.1" r="0.4" fill="#ff2424"/><circle cx="199.6" cy="73" r="1.1" fill="#900000"/><circle cx="199.1" cy="72.5" r="1.6" fill="#a00000"/><circle cx="198.7" cy="73.1" r="1.1" fill="#d40000"/><circle cx="199.6" cy="72" r="0.6" fill="#ff2424"/><circle cx="197.6" cy="77.7" r="0.7" fill="#900000"/><circle cx="196.9" cy="77.6" r="1" fill="#a00000"/><circle cx="197" cy="77.1" r="0.7" fill="#d40000"/><circle cx="197.3" cy="77.3" r="0.4" fill="#ff2424"/><circle cx="212" cy="82.8" r="1.1" fill="#900000"/><circle cx="212.5" cy="83.1" r="1.6" fill="#a00000"/><circle cx="211.9" cy="83.5" r="1.1" fill="#d40000"/><circle cx="213" cy="82.6" r="0.6" fill="#ff2424"/><circle cx="198.6" cy="81" r="1" fill="#900000"/><circle cx="198" cy="81.2" r="1.3" fill="#a00000"/><circle cx="198.5" cy="80.8" r="0.9" fill="#d40000"/><circle cx="198.4" cy="80.7" r="0.5" fill="#ff2424"/><circle cx="211.6" cy="76.6" r="1" fill="#900000"/><circle cx="212.1" cy="76.4" r="1.4" fill="#a00000"/><circle cx="212.6" cy="76.9" r="1" fill="#d40000"/><circle cx="212.6" cy="76" r="0.5" fill="#ff2424"/><circle cx="204.2" cy="85" r="1.2" fill="#900000"/><circle cx="204.1" cy="85.5" r="1.6" fill="#a00000"/><circle cx="203.6" cy="86" r="1.1" fill="#d40000"/><circle cx="204.6" cy="84.9" r="0.6" fill="#ff2424"/><circle cx="205.7" cy="73.9" r="0.9" fill="#900000"/><circle cx="205.7" cy="73.5" r="1.2" fill="#a00000"/><circle cx="205.2" cy="73.2" r="0.8" fill="#d40000"/><circle cx="206.1" cy="73.1" r="0.4" fill="#ff2424"/><circle cx="205.6" cy="81.2" r="0.9" fill="#900000"/><circle cx="205.6" cy="81.4" r="1.2" fill="#a00000"/><circle cx="205.4" cy="81.9" r="0.8" fill="#d40000"/><circle cx="206" cy="81" r="0.4" fill="#ff2424"/><circle cx="263.2" cy="83.5" r="2.6" fill="#900000"/><circle cx="263" cy="83.4" r="3.5" fill="#a00000"/><circle cx="264.4" cy="82.7" r="2.4" fill="#d40000"/><circle cx="264.1" cy="82.3" r="1.3" fill="#ff2424"/><circle cx="257.7" cy="86.1" r="1.8" fill="#900000"/><circle cx="257" cy="86.2" r="2.5" fill="#a00000"/><circle cx="256.6" cy="85.2" r="1.7" fill="#d40000"/><circle cx="257.8" cy="85.4" r="0.9" fill="#ff2424"/><circle cx="258.6" cy="79.8" r="2" fill="#900000"/><circle cx="258.1" cy="79.4" r="2.8" fill="#a00000"/><circle cx="256.8" cy="79.7" r="1.9" fill="#d40000"/><circle cx="259" cy="78.5" r="1" fill="#ff2424"/><circle cx="262.1" cy="76.2" r="2.3" fill="#900000"/><circle cx="261.8" cy="75.5" r="3.1" fill="#a00000"/><circle cx="261.5" cy="74.1" r="2.1" fill="#d40000"/><circle cx="262.8" cy="74.5" r="1.1" fill="#ff2424"/><circle cx="275.4" cy="85" r="1.9" fill="#900000"/><circle cx="276.2" cy="85" r="2.7" fill="#a00000"/><circle cx="277.4" cy="85.4" r="1.8" fill="#d40000"/><circle cx="277.1" cy="84.1" r="1" fill="#ff2424"/><circle cx="276.1" cy="84.6" r="2.5" fill="#900000"/><circle cx="277" cy="84.5" r="3.4" fill="#a00000"/><circle cx="278.3" cy="85.4" r="2.3" fill="#d40000"/><circle cx="278.1" cy="83.4" r="1.2" fill="#ff2424"/><circle cx="276.6" cy="91.4" r="1.7" fill="#900000"/><circle cx="277.5" cy="91.9" r="2.4" fill="#a00000"/><circle cx="277.4" cy="93" r="1.6" fill="#d40000"/><circle cx="278.2" cy="91.2" r="0.9" fill="#ff2424"/><circle cx="252.3" cy="92.1" r="2.6" fill="#900000"/><circle cx="251.2" cy="92.7" r="3.5" fill="#a00000"/><circle cx="251.4" cy="94.3" r="2.4" fill="#d40000"/><circle cx="252.3" cy="91.5" r="1.3" fill="#ff2424"/><circle cx="281.7" cy="83" r="2.6" fill="#900000"/><circle cx="283" cy="82.9" r="3.6" fill="#a00000"/><circle cx="284.1" cy="81.6" r="2.5" fill="#d40000"/><circle cx="284.2" cy="81.7" r="1.3" fill="#ff2424"/><circle cx="276.5" cy="72.4" r="2.4" fill="#900000"/><circle cx="277.4" cy="71.4" r="3.3" fill="#a00000"/><circle cx="275.9" cy="71.7" r="2.2" fill="#d40000"/><circle cx="278.4" cy="70.4" r="1.2" fill="#ff2424"/><circle cx="275.6" cy="99.2" r="2.5" fill="#900000"/><circle cx="276.5" cy="100.3" r="3.5" fill="#a00000"/><circle cx="277.9" cy="101" r="2.4" fill="#d40000"/><circle cx="277.6" cy="99.2" r="1.3" fill="#ff2424"/><circle cx="247.8" cy="82.9" r="2.6" fill="#900000"/><circle cx="246.4" cy="82.7" r="3.5" fill="#a00000"/><circle cx="245.8" cy="84.2" r="2.4" fill="#d40000"/><circle cx="247.5" cy="81.6" r="1.3" fill="#ff2424"/><circle cx="273.5" cy="67.9" r="1.9" fill="#900000"/><circle cx="274.1" cy="66.5" r="2.6" fill="#a00000"/><circle cx="275.3" cy="66.5" r="1.8" fill="#d40000"/><circle cx="275" cy="65.7" r="0.9" fill="#ff2424"/><circle cx="271" cy="104.1" r="2.7" fill="#900000"/><circle cx="271.5" cy="105.6" r="3.7" fill="#a00000"/><circle cx="271.8" cy="104" r="2.5" fill="#d40000"/><circle cx="272.6" cy="104.4" r="1.4" fill="#ff2424"/><circle cx="283.1" cy="94.2" r="1.7" fill="#900000"/><circle cx="284.5" cy="95" r="2.3" fill="#a00000"/><circle cx="285.1" cy="94.1" r="1.6" fill="#d40000"/><circle cx="285.3" cy="94.3" r="0.8" fill="#ff2424"/><circle cx="285.1" cy="78.2" r="1.9" fill="#900000"/><circle cx="286.7" cy="77.7" r="2.7" fill="#a00000"/><circle cx="287.7" cy="77.1" r="1.8" fill="#d40000"/><circle cx="287.5" cy="76.9" r="1" fill="#ff2424"/><circle cx="283.7" cy="96.5" r="2.3" fill="#900000"/><circle cx="285.2" cy="97.4" r="3.2" fill="#a00000"/><circle cx="284" cy="96.7" r="2.1" fill="#d40000"/><circle cx="286.2" cy="96.4" r="1.1" fill="#ff2424"/><circle cx="250.9" cy="68.9" r="2.1" fill="#900000"/><circle cx="249.8" cy="67.6" r="2.9" fill="#a00000"/><circle cx="248.5" cy="67.2" r="2" fill="#d40000"/><circle cx="250.7" cy="66.7" r="1.1" fill="#ff2424"/><circle cx="264.2" cy="63.2" r="1.9" fill="#900000"/><circle cx="264.1" cy="61.5" r="2.6" fill="#a00000"/><circle cx="265.1" cy="62.1" r="1.8" fill="#d40000"/><circle cx="264.9" cy="60.6" r="0.9" fill="#ff2424"/><circle cx="267" cy="108" r="2.2" fill="#900000"/><circle cx="267.2" cy="109.8" r="3.1" fill="#a00000"/><circle cx="266" cy="109" r="2.1" fill="#d40000"/><circle cx="268.1" cy="108.8" r="1.1" fill="#ff2424"/><circle cx="256.1" cy="62.4" r="2.5" fill="#900000"/><circle cx="255.3" cy="60.6" r="3.5" fill="#a00000"/><circle cx="253.8" cy="60.6" r="2.4" fill="#d40000"/><circle cx="256.4" cy="59.5" r="1.3" fill="#ff2424"/><circle cx="259.9" cy="61.1" r="2" fill="#900000"/><circle cx="259.4" cy="59.2" r="2.7" fill="#a00000"/><circle cx="258.3" cy="59.6" r="1.9" fill="#d40000"/><circle cx="260.3" cy="58.3" r="1" fill="#ff2424"/><circle cx="273.1" cy="109" r="1.9" fill="#900000"/><circle cx="273.7" cy="110.9" r="2.6" fill="#a00000"/><circle cx="273" cy="111.9" r="1.7" fill="#d40000"/><circle cx="274.5" cy="110.1" r="0.9" fill="#ff2424"/><circle cx="263.6" cy="110.3" r="2" fill="#900000"/><circle cx="263.4" cy="112.3" r="2.7" fill="#a00000"/><circle cx="264.2" cy="111.3" r="1.9" fill="#d40000"/><circle cx="264.3" cy="111.5" r="1" fill="#ff2424"/><circle cx="287.6" cy="97.8" r="2.6" fill="#900000"/><circle cx="289.4" cy="98.8" r="3.6" fill="#a00000"/><circle cx="289.9" cy="100.4" r="2.5" fill="#d40000"/><circle cx="290.6" cy="97.7" r="1.3" fill="#ff2424"/><circle cx="271.1" cy="59.9" r="2.2" fill="#900000"/><circle cx="271.5" cy="57.9" r="3" fill="#a00000"/><circle cx="272.7" cy="58.5" r="2.1" fill="#d40000"/><circle cx="272.5" cy="56.9" r="1.1" fill="#ff2424"/><circle cx="283.5" cy="65.5" r="2.7" fill="#900000"/><circle cx="284.9" cy="63.9" r="3.7" fill="#a00000"/><circle cx="283.9" cy="62.6" r="2.5" fill="#d40000"/><circle cx="286.1" cy="62.7" r="1.3" fill="#ff2424"/><circle cx="242.5" cy="98.8" r="2.1" fill="#900000"/><circle cx="240.6" cy="100" r="2.9" fill="#a00000"/><circle cx="241.3" cy="98.9" r="2" fill="#d40000"/><circle cx="241.6" cy="99" r="1.1" fill="#ff2424"/><circle cx="268.8" cy="58.2" r="1.8" fill="#900000"/><circle cx="269.1" cy="56.1" r="2.5" fill="#a00000"/><circle cx="269" cy="57.2" r="1.7" fill="#d40000"/><circle cx="269.8" cy="55.3" r="0.9" fill="#ff2424"/><circle cx="243.3" cy="100.7" r="2.4" fill="#900000"/><circle cx="241.5" cy="102" r="3.3" fill="#a00000"/><circle cx="240.5" cy="103.2" r="2.3" fill="#d40000"/><circle cx="242.5" cy="100.9" r="1.2" fill="#ff2424"/><circle cx="237.8" cy="85.3" r="2" fill="#900000"/><circle cx="235.6" cy="85.3" r="2.8" fill="#a00000"/><circle cx="236.8" cy="85.2" r="1.9" fill="#d40000"/><circle cx="236.4" cy="84.5" r="1" fill="#ff2424"/><circle cx="288.5" cy="100.7" r="2.2" fill="#900000"/><circle cx="290.4" cy="101.9" r="3.1" fill="#a00000"/><circle cx="290.9" cy="103.2" r="2.1" fill="#d40000"/><circle cx="291.4" cy="101" r="1.1" fill="#ff2424"/><circle cx="243.2" cy="66.1" r="1.7" fill="#900000"/><circle cx="241.4" cy="64.6" r="2.3" fill="#a00000"/><circle cx="242.1" cy="65.4" r="1.6" fill="#d40000"/><circle cx="242.2" cy="63.9" r="0.8" fill="#ff2424"/><circle cx="294.2" cy="77.6" r="2.4" fill="#900000"/><circle cx="296.6" cy="77" r="3.2" fill="#a00000"/><circle cx="295.3" cy="76.3" r="2.2" fill="#d40000"/><circle cx="297.6" cy="75.9" r="1.2" fill="#ff2424"/><circle cx="294.7" cy="79.6" r="2.6" fill="#900000"/><circle cx="297.1" cy="79.2" r="3.6" fill="#a00000"/><circle cx="298.2" cy="78.1" r="2.4" fill="#d40000"/><circle cx="298.2" cy="78.1" r="1.3" fill="#ff2424"/><circle cx="249.2" cy="110" r="1.6" fill="#900000"/><circle cx="247.9" cy="112" r="2.3" fill="#a00000"/><circle cx="247.5" cy="113" r="1.5" fill="#d40000"/><circle cx="248.6" cy="111.3" r="0.8" fill="#ff2424"/><circle cx="250.4" cy="59.1" r="1.8" fill="#900000"/><circle cx="249.2" cy="57" r="2.5" fill="#a00000"/><circle cx="250.3" cy="56.9" r="1.7" fill="#d40000"/><circle cx="249.9" cy="56.3" r="0.9" fill="#ff2424"/><circle cx="235.7" cy="93" r="2" fill="#900000"/><circle cx="233.3" cy="93.7" r="2.7" fill="#a00000"/><circle cx="233.5" cy="92.4" r="1.9" fill="#d40000"/><circle cx="234.2" cy="92.8" r="1" fill="#ff2424"/><circle cx="256.8" cy="55" r="2" fill="#900000"/><circle cx="256.1" cy="52.6" r="2.7" fill="#a00000"/><circle cx="255.2" cy="53.3" r="1.9" fill="#d40000"/><circle cx="257" cy="51.7" r="1" fill="#ff2424"/><circle cx="251.6" cy="56.8" r="1.9" fill="#900000"/><circle cx="250.5" cy="54.5" r="2.6" fill="#a00000"/><circle cx="249.4" cy="54.1" r="1.8" fill="#d40000"/><circle cx="251.3" cy="53.7" r="1" fill="#ff2424"/><circle cx="293.3" cy="69.6" r="2.7" fill="#900000"/><circle cx="295.5" cy="68.4" r="3.7" fill="#a00000"/><circle cx="297.2" cy="68.3" r="2.5" fill="#d40000"/><circle cx="296.7" cy="67.2" r="1.3" fill="#ff2424"/><circle cx="280.5" cy="113.2" r="2.2" fill="#900000"/><circle cx="281.7" cy="115.5" r="3" fill="#a00000"/><circle cx="280.9" cy="114.3" r="2.1" fill="#d40000"/><circle cx="282.7" cy="114.5" r="1.1" fill="#ff2424"/><circle cx="242.7" cy="62.6" r="2.4" fill="#900000"/><circle cx="240.9" cy="60.8" r="3.3" fill="#a00000"/><circle cx="241.4" cy="59.4" r="2.2" fill="#d40000"/><circle cx="241.9" cy="59.8" r="1.2" fill="#ff2424"/><circle cx="297.7" cy="86.3" r="2.4" fill="#900000"/><circle cx="300.3" cy="86.4" r="3.3" fill="#a00000"/><circle cx="298.8" cy="86.3" r="2.3" fill="#d40000"/><circle cx="301.4" cy="85.4" r="1.2" fill="#ff2424"/><circle cx="241" cy="106.2" r="2.1" fill="#900000"/><circle cx="239" cy="107.9" r="2.9" fill="#a00000"/><circle cx="238.3" cy="106.8" r="2" fill="#d40000"/><circle cx="239.9" cy="107" r="1" fill="#ff2424"/><circle cx="233.2" cy="87.6" r="1.7" fill="#900000"/><circle cx="230.5" cy="87.8" r="2.3" fill="#a00000"/><circle cx="231.4" cy="88.4" r="1.6" fill="#d40000"/><circle cx="231.3" cy="87.1" r="0.8" fill="#ff2424"/><circle cx="276.1" cy="115.7" r="2.5" fill="#900000"/><circle cx="276.9" cy="118.2" r="3.5" fill="#a00000"/><circle cx="275.6" cy="117.4" r="2.4" fill="#d40000"/><circle cx="278" cy="117.1" r="1.3" fill="#ff2424"/><circle cx="276.9" cy="115.5" r="1.8" fill="#900000"/><circle cx="277.9" cy="118" r="2.5" fill="#a00000"/><circle cx="278.2" cy="116.9" r="1.7" fill="#d40000"/><circle cx="278.7" cy="117.2" r="0.9" fill="#ff2424"/><circle cx="256.9" cy="53.6" r="1.9" fill="#900000"/><circle cx="256.2" cy="51" r="2.6" fill="#a00000"/><circle cx="256.7" cy="50" r="1.7" fill="#d40000"/><circle cx="257" cy="50.2" r="0.9" fill="#ff2424"/><circle cx="234.5" cy="74.4" r="1.7" fill="#900000"/><circle cx="232" cy="73.5" r="2.3" fill="#a00000"/><circle cx="231" cy="73.7" r="1.5" fill="#d40000"/><circle cx="232.7" cy="72.8" r="0.8" fill="#ff2424"/><circle cx="284.5" cy="58.2" r="2.7" fill="#900000"/><circle cx="286" cy="56" r="3.7" fill="#a00000"/><circle cx="286.9" cy="54.7" r="2.5" fill="#d40000"/><circle cx="287.2" cy="54.9" r="1.3" fill="#ff2424"/><circle cx="240.7" cy="63.5" r="2.2" fill="#900000"/><circle cx="238.6" cy="61.8" r="3" fill="#a00000"/><circle cx="237.6" cy="62.6" r="2.1" fill="#d40000"/><circle cx="239.6" cy="60.8" r="1.1" fill="#ff2424"/><circle cx="237.6" cy="67.5" r="2.6" fill="#900000"/><circle cx="235.4" cy="66.1" r="3.5" fill="#a00000"/><circle cx="236.2" cy="67.5" r="2.4" fill="#d40000"/><circle cx="236.5" cy="64.9" r="1.3" fill="#ff2424"/><circle cx="234.4" cy="72.8" r="2.7" fill="#900000"/><circle cx="231.9" cy="71.8" r="3.7" fill="#a00000"/><circle cx="233.2" cy="70.7" r="2.5" fill="#d40000"/><circle cx="233.1" cy="70.7" r="1.3" fill="#ff2424"/><circle cx="285.1" cy="112.4" r="1.7" fill="#900000"/><circle cx="286.7" cy="114.7" r="2.4" fill="#a00000"/><circle cx="287.7" cy="114.8" r="1.6" fill="#d40000"/><circle cx="287.4" cy="113.9" r="0.9" fill="#ff2424"/><circle cx="232.7" cy="77.2" r="2.3" fill="#900000"/><circle cx="230" cy="76.6" r="3.1" fill="#a00000"/><circle cx="231.3" cy="77.3" r="2.1" fill="#d40000"/><circle cx="231" cy="75.6" r="1.1" fill="#ff2424"/><circle cx="297" cy="98.2" r="1.7" fill="#900000"/><circle cx="299.5" cy="99.2" r="2.3" fill="#a00000"/><circle cx="298.7" cy="98.7" r="1.6" fill="#d40000"/><circle cx="300.2" cy="98.5" r="0.8" fill="#ff2424"/><circle cx="265.3" cy="119.4" r="2.1" fill="#900000"/><circle cx="265.3" cy="122.2" r="2.9" fill="#a00000"/><circle cx="264" cy="121.9" r="2" fill="#d40000"/><circle cx="266.2" cy="121.2" r="1.1" fill="#ff2424"/><circle cx="232.4" cy="75.6" r="1.9" fill="#900000"/><circle cx="229.7" cy="74.9" r="2.7" fill="#a00000"/><circle cx="228.7" cy="74.2" r="1.8" fill="#d40000"/><circle cx="230.6" cy="74" r="1" fill="#ff2424"/><circle cx="299.5" cy="90.6" r="2.1" fill="#900000"/><circle cx="302.2" cy="91.1" r="2.8" fill="#a00000"/><circle cx="303.3" cy="90.3" r="1.9" fill="#d40000"/><circle cx="303.1" cy="90.2" r="1" fill="#ff2424"/><circle cx="261" cy="119.3" r="2.5" fill="#900000"/><circle cx="260.6" cy="122.1" r="3.5" fill="#a00000"/><circle cx="260.3" cy="123.7" r="2.4" fill="#d40000"/><circle cx="261.7" cy="121" r="1.3" fill="#ff2424"/><circle cx="248.3" cy="115.1" r="2.6" fill="#900000"/><circle cx="246.9" cy="117.6" r="3.6" fill="#a00000"/><circle cx="247.7" cy="119" r="2.4" fill="#d40000"/><circle cx="248" cy="116.5" r="1.3" fill="#ff2424"/><circle cx="296.2" cy="101.3" r="2" fill="#900000"/><circle cx="298.6" cy="102.7" r="2.8" fill="#a00000"/><circle cx="299.1" cy="101.5" r="1.9" fill="#d40000"/><circle cx="299.5" cy="101.8" r="1" fill="#ff2424"/><circle cx="249.4" cy="115.8" r="2" fill="#900000"/><circle cx="248.1" cy="118.3" r="2.8" fill="#a00000"/><circle cx="249.3" cy="118.5" r="1.9" fill="#d40000"/><circle cx="249" cy="117.4" r="1" fill="#ff2424"/><circle cx="237.7" cy="105.9" r="1.9" fill="#900000"/><circle cx="235.4" cy="107.6" r="2.6" fill="#a00000"/><circle cx="234.4" cy="107.1" r="1.7" fill="#d40000"/><circle cx="236.2" cy="106.8" r="0.9" fill="#ff2424"/><circle cx="290.7" cy="109.2" r="1.7" fill="#900000"/><circle cx="292.7" cy="111.2" r="2.4" fill="#a00000"/><circle cx="292.6" cy="112.2" r="1.6" fill="#d40000"/><circle cx="293.5" cy="110.4" r="0.9" fill="#ff2424"/><circle cx="292.9" cy="63.3" r="2.5" fill="#900000"/><circle cx="295.2" cy="61.5" r="3.4" fill="#a00000"/><circle cx="295.3" cy="60" r="2.3" fill="#d40000"/><circle cx="296.2" cy="60.5" r="1.2" fill="#ff2424"/><circle cx="290.3" cy="109.7" r="2.2" fill="#900000"/><circle cx="292.4" cy="111.8" r="3.1" fill="#a00000"/><circle cx="293.2" cy="110.6" r="2.1" fill="#d40000"/><circle cx="293.3" cy="110.8" r="1.1" fill="#ff2424"/><circle cx="292" cy="62" r="2.7" fill="#900000"/><circle cx="294.1" cy="60.1" r="3.6" fill="#a00000"/><circle cx="295.7" cy="59.5" r="2.5" fill="#d40000"/><circle cx="295.3" cy="58.9" r="1.3" fill="#ff2424"/><circle cx="243.9" cy="112.8" r="1.7" fill="#900000"/><circle cx="242.2" cy="115" r="2.3" fill="#a00000"/><circle cx="242.8" cy="114.2" r="1.6" fill="#d40000"/><circle cx="242.9" cy="114.3" r="0.8" fill="#ff2424"/><circle cx="273.6" cy="119.2" r="1.8" fill="#900000"/><circle cx="274.3" cy="122" r="2.5" fill="#a00000"/><circle cx="274" cy="123.1" r="1.7" fill="#d40000"/><circle cx="275.1" cy="121.2" r="0.9" fill="#ff2424"/><circle cx="294" cy="64.3" r="1.8" fill="#900000"/><circle cx="296.3" cy="62.7" r="2.4" fill="#a00000"/><circle cx="297.1" cy="61.9" r="1.7" fill="#d40000"/><circle cx="297.1" cy="61.9" r="0.9" fill="#ff2424"/><circle cx="265.5" cy="85" r="34" fill="url(#g)"/><rect x="251.4" y="105.6" width="2" height="2" fill="#ff9898"/><rect x="280.6" y="112.9" width="2" height="2" fill="#8a10a8"/><rect x="278.1" y="65.6" width="2" height="2" fill="#ff9898"/><rect x="276.7" y="81.8" width="2" height="2" fill="#7070ff"/><rect x="270.2" y="73.5" width="1.8" height="1.8" fill="#8a10a8"/><rect x="250.4" y="81.9" width="2" height="2" fill="#ff9898"/><rect x="286.8" y="74.1" width="2" height="2" fill="#7070ff"/><rect x="276" y="108.1" width="1.8" height="1.8" fill="#ff9898"/><rect x="268.1" y="77.6" width="2" height="2" fill="#ff9898"/><rect x="263.3" y="103.1" width="1.4" height="1.4" fill="#7070ff"/><rect x="261.2" y="57.4" width="1.4" height="1.4" fill="#7070ff"/><rect x="248.5" y="86" width="1.4" height="1.4" fill="#7070ff"/><rect x="280.6" y="80.1" width="1.4" height="1.4" fill="#ff9898"/><rect x="261.2" y="87.9" width="1.4" height="1.4" fill="#7070ff"/><rect x="248.5" y="63" width="2" height="2" fill="#ff9898"/><rect x="254.7" y="77.2" width="2" height="2" fill="#7070ff"/><rect x="270.5" y="60.8" width="1.4" height="1.4" fill="#8a10a8"/><rect x="249.6" y="89.2" width="1.4" height="1.4" fill="#7070ff"/><rect x="281.5" y="104.9" width="1.4" height="1.4" fill="#8a10a8"/><rect x="254.1" y="56.5" width="1.4" height="1.4" fill="#ff9898"/><rect x="240.2" y="105.3" width="1.4" height="1.4" fill="#ff9898"/><rect x="274.8" y="105.1" width="1.8" height="1.8" fill="#8a10a8"/><rect x="282.9" y="86.1" width="2" height="2" fill="#ff9898"/><rect x="256.1" y="89.1" width="2" height="2" fill="#8a10a8"/><rect x="266.7" y="67.2" width="1.4" height="1.4" fill="#7070ff"/><rect x="285.1" y="110.6" width="1.8" height="1.8" fill="#ff9898"/><rect x="267" y="91.8" width="1.4" height="1.4" fill="#7070ff"/><rect x="234.5" y="84.2" width="1.4" height="1.4" fill="#7070ff"/><rect x="297.7" y="89.5" width="1.8" height="1.8" fill="#7070ff"/><rect x="282.2" y="71.7" width="1.4" height="1.4" fill="#7070ff"/><rect x="244.3" y="95.1" width="2" height="2" fill="#7070ff"/><rect x="262.8" y="84.3" width="1.8" height="1.8" fill="#ff9898"/><rect x="258.1" y="55.6" width="1.8" height="1.8" fill="#7070ff"/><rect x="249.8" y="105.4" width="1.4" height="1.4" fill="#ff9898"/><rect x="237.2" y="76.2" width="1.4" height="1.4" fill="#ff9898"/><rect x="249.3" y="57.5" width="1.4" height="1.4" fill="#8a10a8"/><rect x="248.9" y="83.7" width="1.8" height="1.8" fill="#ff9898"/><rect x="250" y="70.6" width="2" height="2" fill="#ff9898"/><rect x="264.4" y="102.5" width="2" height="2" fill="#ff9898"/><rect x="242.4" y="67.8" width="1.4" height="1.4" fill="#ff9898"/><rect x="270.6" y="71.4" width="1.8" height="1.8" fill="#7070ff"/><rect x="244.8" y="109.8" width="1.8" height="1.8" fill="#8a10a8"/><rect x="250.5" y="101.4" width="1.8" height="1.8" fill="#8a10a8"/><rect x="272.3" y="58.5" width="2" height="2" fill="#8a10a8"/><rect x="241" y="83.9" width="1.8" height="1.8" fill="#ff9898"/><rect x="288.8" y="65.5" width="2" height="2" fill="#ff9898"/><rect x="261.4" y="85.2" width="1.8" height="1.8" fill="#7070ff"/><rect x="237.6" y="92.1" width="1.4" height="1.4" fill="#ff9898"/><rect x="276.7" y="54.6" width="1.4" height="1.4" fill="#7070ff"/><rect x="272.6" y="95" width="1.8" height="1.8" fill="#7070ff"/><rect x="260.5" y="96.2" width="1.4" height="1.4" fill="#ff9898"/><rect x="257.9" y="66.6" width="2" height="2" fill="#7070ff"/><rect x="244.5" y="73.5" width="2" height="2" fill="#8a10a8"/><rect x="236.2" y="82.1" width="1.8" height="1.8" fill="#ff9898"/><rect x="262.2" y="90.9" width="1.4" height="1.4" fill="#ff9898"/><rect x="276.2" y="115" width="2" height="2" fill="#7070ff"/><rect x="247.2" y="64" width="2" height="2" fill="#ff9898"/><rect x="265" y="54.8" width="1.4" height="1.4" fill="#7070ff"/><rect x="280.9" y="68.4" width="1.4" height="1.4" fill="#8a10a8"/><rect x="239.1" y="80.5" width="2" height="2" fill="#7070ff"/><rect x="272.7" y="57.7" width="1.4" height="1.4" fill="#8a10a8"/><rect x="248.2" y="109" width="1.4" height="1.4" fill="#7070ff"/><rect x="270" y="97.6" width="1.8" height="1.8" fill="#7070ff"/><rect x="247.6" y="92.3" width="2" height="2" fill="#7070ff"/><rect x="269.5" y="60.2" width="1.4" height="1.4" fill="#7070ff"/><rect x="268.2" y="117.8" width="1.8" height="1.8" fill="#8a10a8"/><rect x="287.4" y="80.5" width="1.4" height="1.4" fill="#8a10a8"/><rect x="291.5" y="79.6" width="2" height="2" fill="#7070ff"/><rect x="244.4" y="95.2" width="2" height="2" fill="#7070ff"/><rect x="258.6" y="91.3" width="2" height="2" fill="#ff9898"/><rect x="248.8" y="71.3" width="1.8" height="1.8" fill="#8a10a8"/><rect x="254" y="111" width="2" height="2" fill="#8a10a8"/><rect x="261.6" y="56.3" width="1.4" height="1.4" fill="#7070ff"/><rect x="284.2" y="100.6" width="1.8" height="1.8" fill="#8a10a8"/><rect x="284.2" y="101.6" width="1.4" height="1.4" fill="#8a10a8"/><rect x="258.7" y="78.4" width="2" height="2" fill="#7070ff"/><rect x="259.6" y="100.9" width="1.4" height="1.4" fill="#ff9898"/><rect x="286.7" y="61.1" width="1.8" height="1.8" fill="#ff9898"/><rect x="233.4" y="78.7" width="1.4" height="1.4" fill="#7070ff"/><rect x="248.9" y="79.3" width="1.8" height="1.8" fill="#8a10a8"/><rect x="254.9" y="114.3" width="2" height="2" fill="#7070ff"/><rect x="234.2" y="90.8" width="2" height="2" fill="#7070ff"/><rect x="262.6" y="101.4" width="1.4" height="1.4" fill="#ff9898"/><rect x="235.3" y="76.7" width="1.8" height="1.8" fill="#7070ff"/><rect x="290.5" y="96.6" width="1.8" height="1.8" fill="#7070ff"/><rect x="286.3" y="61.8" width="1.8" height="1.8" fill="#7070ff"/><rect x="249.8" y="110.8" width="2" height="2" fill="#7070ff"/><rect x="279.2" y="71" width="2" height="2" fill="#ff9898"/><circle cx="270.6" cy="50.1" r="2.2" fill="#900000"/><circle cx="271" cy="47.3" r="3" fill="#a00000"/><circle cx="272.2" cy="48" r="2.1" fill="#d40000"/><circle cx="271.9" cy="46.4" r="1.1" fill="#ff2424"/><circle cx="240.7" cy="60" r="1.8" fill="#900000"/><circle cx="238.7" cy="58" r="2.5" fill="#a00000"/><circle cx="237.9" cy="58.8" r="1.7" fill="#d40000"/><circle cx="239.5" cy="57.2" r="0.9" fill="#ff2424"/><circle cx="233.3" cy="70.8" r="1.9" fill="#900000"/><circle cx="230.7" cy="69.7" r="2.6" fill="#a00000"/><circle cx="231.6" cy="70.4" r="1.8" fill="#d40000"/><circle cx="231.5" cy="68.9" r="0.9" fill="#ff2424"/><circle cx="243.4" cy="112.4" r="2.3" fill="#900000"/><circle cx="241.6" cy="114.6" r="3.1" fill="#a00000"/><circle cx="242.9" cy="114" r="2.1" fill="#d40000"/><circle cx="242.6" cy="113.6" r="1.1" fill="#ff2424"/><circle cx="288.9" cy="111.2" r="1.8" fill="#900000"/><circle cx="290.8" cy="113.3" r="2.5" fill="#a00000"/><circle cx="291" cy="112.2" r="1.7" fill="#d40000"/><circle cx="291.6" cy="112.5" r="0.9" fill="#ff2424"/><circle cx="237.6" cy="106.3" r="2.7" fill="#900000"/><circle cx="235.3" cy="108" r="3.7" fill="#a00000"/><circle cx="236.9" cy="108.4" r="2.5" fill="#d40000"/><circle cx="236.5" cy="106.8" r="1.3" fill="#ff2424"/><circle cx="299.6" cy="76.8" r="2" fill="#900000"/><circle cx="302.4" cy="76.1" r="2.8" fill="#a00000"/><circle cx="303.3" cy="76.9" r="1.9" fill="#d40000"/><circle cx="303.3" cy="75.2" r="1" fill="#ff2424"/><circle cx="277.5" cy="52.1" r="1.7" fill="#900000"/><circle cx="278.5" cy="49.4" r="2.3" fill="#a00000"/><circle cx="277.8" cy="50.1" r="1.6" fill="#d40000"/><circle cx="279.2" cy="48.7" r="0.8" fill="#ff2424"/><circle cx="277" cy="51.9" r="2.7" fill="#900000"/><circle cx="277.9" cy="49.2" r="3.7" fill="#a00000"/><circle cx="279" cy="50.5" r="2.5" fill="#d40000"/><circle cx="279.1" cy="48" r="1.3" fill="#ff2424"/><circle cx="259.9" cy="50.4" r="2.5" fill="#900000"/><circle cx="259.4" cy="47.6" r="3.4" fill="#a00000"/><circle cx="259.3" cy="46" r="2.3" fill="#d40000"/><circle cx="260.5" cy="46.5" r="1.2" fill="#ff2424"/><circle cx="230.5" cy="83.5" r="2.1" fill="#900000"/><circle cx="227.7" cy="83.4" r="2.9" fill="#a00000"/><circle cx="228.2" cy="82.2" r="2" fill="#d40000"/><circle cx="228.6" cy="82.5" r="1.1" fill="#ff2424"/><circle cx="232.7" cy="72.9" r="1.7" fill="#900000"/><circle cx="230" cy="71.9" r="2.3" fill="#a00000"/><circle cx="230.1" cy="70.9" r="1.6" fill="#d40000"/><circle cx="230.8" cy="71.2" r="0.8" fill="#ff2424"/><circle cx="263.5" cy="119.9" r="1.9" fill="#900000"/><circle cx="263.3" cy="122.7" r="2.6" fill="#a00000"/><circle cx="264.2" cy="121.9" r="1.8" fill="#d40000"/><circle cx="264.2" cy="121.8" r="1" fill="#ff2424"/><circle cx="298.3" cy="96.7" r="2.4" fill="#900000"/><circle cx="301" cy="97.7" r="3.3" fill="#a00000"/><circle cx="299.6" cy="97.2" r="2.3" fill="#d40000"/><circle cx="302.1" cy="96.6" r="1.2" fill="#ff2424"/><circle cx="284.3" cy="114.3" r="2.3" fill="#900000"/><circle cx="285.9" cy="116.7" r="3.1" fill="#a00000"/><circle cx="284.7" cy="115.9" r="2.1" fill="#d40000"/><circle cx="286.9" cy="115.7" r="1.1" fill="#ff2424"/><circle cx="240.1" cy="108.8" r="2.7" fill="#900000"/><circle cx="238" cy="110.8" r="3.7" fill="#a00000"/><circle cx="239.7" cy="111.2" r="2.5" fill="#d40000"/><circle cx="239.2" cy="109.6" r="1.3" fill="#ff2424"/><circle cx="249.5" cy="115.8" r="1.8" fill="#900000"/><circle cx="248.2" cy="118.3" r="2.5" fill="#a00000"/><circle cx="249.4" cy="118" r="1.7" fill="#d40000"/><circle cx="249" cy="117.5" r="0.9" fill="#ff2424"/><circle cx="240.2" cy="61.4" r="2.6" fill="#900000"/><circle cx="238.2" cy="59.5" r="3.5" fill="#a00000"/><circle cx="237.2" cy="58.3" r="2.4" fill="#d40000"/><circle cx="239.3" cy="58.4" r="1.3" fill="#ff2424"/><circle cx="233" cy="74.6" r="1.8" fill="#900000"/><circle cx="230.3" cy="73.7" r="2.5" fill="#a00000"/><circle cx="231.3" cy="73.2" r="1.7" fill="#d40000"/><circle cx="231.1" cy="73" r="0.9" fill="#ff2424"/><circle cx="242.3" cy="109.9" r="2.5" fill="#900000"/><circle cx="240.4" cy="111.9" r="3.4" fill="#a00000"/><circle cx="241.5" cy="110.8" r="2.3" fill="#d40000"/><circle cx="241.4" cy="110.8" r="1.2" fill="#ff2424"/><circle cx="240.2" cy="107.6" r="1.9" fill="#900000"/><circle cx="238.1" cy="109.4" r="2.6" fill="#a00000"/><circle cx="237.7" cy="108.3" r="1.7" fill="#d40000"/><circle cx="238.9" cy="108.6" r="0.9" fill="#ff2424"/><circle cx="245.7" cy="57.5" r="1.8" fill="#900000"/><circle cx="244.1" cy="55.2" r="2.5" fill="#a00000"/><circle cx="245.2" cy="55" r="1.7" fill="#d40000"/><circle cx="244.9" cy="54.4" r="0.9" fill="#ff2424"/><circle cx="293.7" cy="66.4" r="1.9" fill="#900000"/><circle cx="296" cy="64.9" r="2.6" fill="#a00000"/><circle cx="296.4" cy="63.8" r="1.8" fill="#d40000"/><circle cx="296.9" cy="64.1" r="1" fill="#ff2424"/><circle cx="298.3" cy="79.5" r="2.1" fill="#900000"/><circle cx="301" cy="79" r="2.8" fill="#a00000"/><circle cx="299.7" cy="79.3" r="1.9" fill="#d40000"/><circle cx="301.9" cy="78.1" r="1" fill="#ff2424"/><circle cx="232.4" cy="84.2" r="2.2" fill="#900000"/><circle cx="229.7" cy="84.1" r="3" fill="#a00000"/><circle cx="230.6" cy="83" r="2.1" fill="#d40000"/><circle cx="230.7" cy="83.1" r="1.1" fill="#ff2424"/><circle cx="247.4" cy="57.3" r="2.4" fill="#900000"/><circle cx="245.9" cy="55" r="3.3" fill="#a00000"/><circle cx="246.7" cy="56.3" r="2.3" fill="#d40000"/><circle cx="247" cy="54" r="1.2" fill="#ff2424"/><circle cx="235.7" cy="99.1" r="1.7" fill="#900000"/><circle cx="233.3" cy="100.3" r="2.3" fill="#a00000"/><circle cx="234.1" cy="99.6" r="1.6" fill="#d40000"/><circle cx="234" cy="99.5" r="0.8" fill="#ff2424"/><circle cx="249.7" cy="113.2" r="2.4" fill="#900000"/><circle cx="248.4" cy="115.5" r="3.3" fill="#a00000"/><circle cx="246.9" cy="115" r="2.3" fill="#d40000"/><circle cx="249.4" cy="114.4" r="1.2" fill="#ff2424"/><circle cx="267.6" cy="117.1" r="2.2" fill="#900000"/><circle cx="267.8" cy="119.7" r="3" fill="#a00000"/><circle cx="269.1" cy="120.1" r="2.1" fill="#d40000"/><circle cx="268.8" cy="118.7" r="1.1" fill="#ff2424"/><circle cx="295.2" cy="73" r="1.8" fill="#900000"/><circle cx="297.6" cy="72" r="2.5" fill="#a00000"/><circle cx="296.7" cy="71.3" r="1.7" fill="#d40000"/><circle cx="298.4" cy="71.2" r="0.9" fill="#ff2424"/><circle cx="293.5" cy="69.8" r="2.2" fill="#900000"/><circle cx="295.8" cy="68.5" r="3.1" fill="#a00000"/><circle cx="294.7" cy="69.4" r="2.1" fill="#d40000"/><circle cx="296.7" cy="67.5" r="1.1" fill="#ff2424"/><circle cx="286.2" cy="108.5" r="1.7" fill="#900000"/><circle cx="287.9" cy="110.4" r="2.3" fill="#a00000"/><circle cx="288.7" cy="111.1" r="1.6" fill="#d40000"/><circle cx="288.6" cy="109.7" r="0.8" fill="#ff2424"/><circle cx="235.1" cy="77.6" r="1.7" fill="#900000"/><circle cx="232.6" cy="77" r="2.3" fill="#a00000"/><circle cx="233.6" cy="76.7" r="1.5" fill="#d40000"/><circle cx="233.3" cy="76.3" r="0.8" fill="#ff2424"/><circle cx="266.3" cy="116.1" r="2.6" fill="#900000"/><circle cx="266.4" cy="118.6" r="3.6" fill="#a00000"/><circle cx="267.9" cy="119.3" r="2.4" fill="#d40000"/><circle cx="267.5" cy="117.5" r="1.3" fill="#ff2424"/><circle cx="288.1" cy="106.1" r="2.1" fill="#900000"/><circle cx="290" cy="107.9" r="2.9" fill="#a00000"/><circle cx="291.2" cy="107.4" r="1.9" fill="#d40000"/><circle cx="290.9" cy="106.9" r="1" fill="#ff2424"/><circle cx="290.7" cy="68.4" r="2.2" fill="#900000"/><circle cx="292.8" cy="67" r="3.1" fill="#a00000"/><circle cx="293.9" cy="67.9" r="2.1" fill="#d40000"/><circle cx="293.8" cy="66.1" r="1.1" fill="#ff2424"/><circle cx="294.7" cy="92.5" r="2.7" fill="#900000"/><circle cx="297" cy="93.1" r="3.7" fill="#a00000"/><circle cx="295.6" cy="94" r="2.5" fill="#d40000"/><circle cx="298.2" cy="92" r="1.3" fill="#ff2424"/><circle cx="235.5" cy="84.3" r="2.6" fill="#900000"/><circle cx="233.1" cy="84.2" r="3.5" fill="#a00000"/><circle cx="233.1" cy="82.6" r="2.4" fill="#d40000"/><circle cx="234.2" cy="83.1" r="1.3" fill="#ff2424"/><circle cx="285.2" cy="107.1" r="2.2" fill="#900000"/><circle cx="286.8" cy="108.9" r="3.1" fill="#a00000"/><circle cx="288.1" cy="109.3" r="2.1" fill="#d40000"/><circle cx="287.8" cy="107.9" r="1.1" fill="#ff2424"/><circle cx="264.7" cy="114.2" r="2.2" fill="#900000"/><circle cx="264.6" cy="116.6" r="3" fill="#a00000"/><circle cx="263.2" cy="116.6" r="2.1" fill="#d40000"/><circle cx="265.6" cy="115.6" r="1.1" fill="#ff2424"/><circle cx="239.4" cy="97.6" r="2.4" fill="#900000"/><circle cx="237.2" cy="98.6" r="3.3" fill="#a00000"/><circle cx="236.6" cy="97.3" r="2.2" fill="#d40000"/><circle cx="238.3" cy="97.6" r="1.2" fill="#ff2424"/><circle cx="273.7" cy="112.4" r="2.4" fill="#900000"/><circle cx="274.4" cy="114.6" r="3.4" fill="#a00000"/><circle cx="273.8" cy="113.2" r="2.3" fill="#d40000"/><circle cx="275.4" cy="113.5" r="1.2" fill="#ff2424"/><circle cx="239.5" cy="74.4" r="1.9" fill="#900000"/><circle cx="237.4" cy="73.6" r="2.6" fill="#a00000"/><circle cx="238.1" cy="72.6" r="1.8" fill="#d40000"/><circle cx="238.2" cy="72.7" r="0.9" fill="#ff2424"/><circle cx="275.5" cy="111.1" r="1.9" fill="#900000"/><circle cx="276.3" cy="113.2" r="2.7" fill="#a00000"/><circle cx="277.5" cy="113.2" r="1.8" fill="#d40000"/><circle cx="277.2" cy="112.4" r="1" fill="#ff2424"/><circle cx="274.4" cy="111.1" r="2.1" fill="#900000"/><circle cx="275.2" cy="113.2" r="2.9" fill="#a00000"/><circle cx="276.4" cy="112.9" r="2" fill="#d40000"/><circle cx="276.1" cy="112.3" r="1.1" fill="#ff2424"/><circle cx="292" cy="79.5" r="2" fill="#900000"/><circle cx="294.1" cy="79.1" r="2.8" fill="#a00000"/><circle cx="292.9" cy="79.3" r="1.9" fill="#d40000"/><circle cx="295" cy="78.2" r="1" fill="#ff2424"/><circle cx="281.2" cy="63.2" r="2.4" fill="#900000"/><circle cx="282.5" cy="61.5" r="3.3" fill="#a00000"/><circle cx="284" cy="61.3" r="2.3" fill="#d40000"/><circle cx="283.5" cy="60.4" r="1.2" fill="#ff2424"/><circle cx="286.2" cy="68.5" r="2.2" fill="#900000"/><circle cx="287.9" cy="67.2" r="3" fill="#a00000"/><circle cx="286.7" cy="67.9" r="2.1" fill="#d40000"/><circle cx="288.9" cy="66.2" r="1.1" fill="#ff2424"/><circle cx="264.3" cy="111.1" r="1.9" fill="#900000"/><circle cx="264.2" cy="113.2" r="2.6" fill="#a00000"/><circle cx="264.4" cy="114.3" r="1.8" fill="#d40000"/><circle cx="265" cy="112.3" r="0.9" fill="#ff2424"/><circle cx="257.9" cy="61.1" r="2" fill="#900000"/><circle cx="257.3" cy="59.2" r="2.8" fill="#a00000"/><circle cx="258" cy="58.1" r="1.9" fill="#d40000"/><circle cx="258.2" cy="58.3" r="1" fill="#ff2424"/><circle cx="284.3" cy="68.9" r="2.5" fill="#900000"/><circle cx="285.8" cy="67.6" r="3.4" fill="#a00000"/><circle cx="285.7" cy="69.1" r="2.3" fill="#d40000"/><circle cx="286.9" cy="66.5" r="1.2" fill="#ff2424"/><circle cx="276.4" cy="106" r="1.7" fill="#900000"/><circle cx="277.3" cy="107.7" r="2.3" fill="#a00000"/><circle cx="278.3" cy="107.7" r="1.6" fill="#d40000"/><circle cx="278" cy="106.9" r="0.8" fill="#ff2424"/><circle cx="275" cy="103.9" r="2.4" fill="#900000"/><circle cx="275.8" cy="105.4" r="3.3" fill="#a00000"/><circle cx="274.8" cy="106.5" r="2.2" fill="#d40000"/><circle cx="276.8" cy="104.3" r="1.2" fill="#ff2424"/><circle cx="278.6" cy="73" r="2.2" fill="#900000"/><circle cx="279.7" cy="72" r="3" fill="#a00000"/><circle cx="280.5" cy="73.1" r="2" fill="#d40000"/><circle cx="280.6" cy="71.1" r="1.1" fill="#ff2424"/><circle cx="282.4" cy="80.5" r="1.8" fill="#900000"/><circle cx="283.8" cy="80.2" r="2.5" fill="#a00000"/><circle cx="283.4" cy="79.1" r="1.7" fill="#d40000"/><circle cx="284.6" cy="79.4" r="0.9" fill="#ff2424"/><circle cx="258.9" cy="100.9" r="2" fill="#900000"/><circle cx="258.3" cy="102.2" r="2.7" fill="#a00000"/><circle cx="259.1" cy="103.2" r="1.9" fill="#d40000"/><circle cx="259.2" cy="101.3" r="1" fill="#ff2424"/><circle cx="282" cy="89.4" r="2.4" fill="#900000"/><circle cx="283.3" cy="89.7" r="3.4" fill="#a00000"/><circle cx="283" cy="91.2" r="2.3" fill="#d40000"/><circle cx="284.4" cy="88.6" r="1.2" fill="#ff2424"/><circle cx="272.8" cy="70" r="2.6" fill="#900000"/><circle cx="273.4" cy="68.8" r="3.6" fill="#a00000"/><circle cx="273.9" cy="67.3" r="2.4" fill="#d40000"/><circle cx="274.5" cy="67.7" r="1.3" fill="#ff2424"/><circle cx="279.1" cy="85.8" r="1.8" fill="#900000"/><circle cx="280.2" cy="85.9" r="2.4" fill="#a00000"/><circle cx="280.7" cy="86.8" r="1.6" fill="#d40000"/><circle cx="281" cy="85.1" r="0.9" fill="#ff2424"/><circle cx="278.3" cy="89" r="2.7" fill="#900000"/><circle cx="279.3" cy="89.3" r="3.7" fill="#a00000"/><circle cx="278.9" cy="90.9" r="2.5" fill="#d40000"/><circle cx="280.5" cy="88.1" r="1.4" fill="#ff2424"/><circle cx="276.1" cy="91" r="2.1" fill="#900000"/><circle cx="276.9" cy="91.5" r="2.9" fill="#a00000"/><circle cx="278" cy="90.9" r="2" fill="#d40000"/><circle cx="277.8" cy="90.6" r="1" fill="#ff2424"/><circle cx="274.4" cy="89.8" r="2.1" fill="#900000"/><circle cx="275.2" cy="90.2" r="2.9" fill="#a00000"/><circle cx="273.9" cy="90.8" r="2" fill="#d40000"/><circle cx="276.1" cy="89.3" r="1.1" fill="#ff2424"/><circle cx="261.8" cy="85.5" r="1.8" fill="#900000"/><circle cx="261.5" cy="85.5" r="2.5" fill="#a00000"/><circle cx="260.4" cy="85.5" r="1.7" fill="#d40000"/><circle cx="262.3" cy="84.7" r="0.9" fill="#ff2424"/><circle cx="267.6" cy="87.9" r="1.8" fill="#900000"/><circle cx="267.7" cy="88.2" r="2.5" fill="#a00000"/><circle cx="268.8" cy="87.8" r="1.7" fill="#d40000"/><circle cx="268.5" cy="87.4" r="0.9" fill="#ff2424"/><circle cx="165.4" cy="108.4" r="0.6" fill="#900000"/><circle cx="165" cy="108.3" r="0.9" fill="#a00000"/><circle cx="164.9" cy="107.9" r="0.6" fill="#d40000"/><circle cx="165.3" cy="108" r="0.3" fill="#ff2424"/><circle cx="175.9" cy="112.4" r="0.7" fill="#900000"/><circle cx="176.3" cy="112.6" r="1" fill="#a00000"/><circle cx="176" cy="112.3" r="0.7" fill="#d40000"/><circle cx="176.7" cy="112.3" r="0.4" fill="#ff2424"/><circle cx="172.2" cy="103.7" r="0.9" fill="#900000"/><circle cx="172.4" cy="103.2" r="1.2" fill="#a00000"/><circle cx="172.6" cy="102.7" r="0.8" fill="#d40000"/><circle cx="172.8" cy="102.8" r="0.4" fill="#ff2424"/><circle cx="176" cy="104" r="0.8" fill="#900000"/><circle cx="176.5" cy="103.5" r="1.1" fill="#a00000"/><circle cx="176.3" cy="104" r="0.8" fill="#d40000"/><circle cx="176.8" cy="103.2" r="0.4" fill="#ff2424"/><circle cx="177.9" cy="113.9" r="0.9" fill="#900000"/><circle cx="178.5" cy="114.2" r="1.3" fill="#a00000"/><circle cx="179.1" cy="114.4" r="0.9" fill="#d40000"/><circle cx="178.9" cy="113.8" r="0.5" fill="#ff2424"/><circle cx="169.4" cy="101.2" r="1" fill="#900000"/><circle cx="169.3" cy="100.4" r="1.4" fill="#a00000"/><circle cx="169.8" cy="100.2" r="1" fill="#d40000"/><circle cx="169.7" cy="100" r="0.5" fill="#ff2424"/><circle cx="177" cy="103.8" r="0.9" fill="#900000"/><circle cx="177.6" cy="103.3" r="1.2" fill="#a00000"/><circle cx="178" cy="103.6" r="0.8" fill="#d40000"/><circle cx="178" cy="102.9" r="0.4" fill="#ff2424"/><circle cx="162.4" cy="115.2" r="1" fill="#900000"/><circle cx="161.7" cy="115.6" r="1.4" fill="#a00000"/><circle cx="161.1" cy="115.7" r="0.9" fill="#d40000"/><circle cx="162.1" cy="115.2" r="0.5" fill="#ff2424"/><circle cx="177.1" cy="117" r="1" fill="#900000"/><circle cx="177.6" cy="117.6" r="1.4" fill="#a00000"/><circle cx="177" cy="117.9" r="1" fill="#d40000"/><circle cx="178.1" cy="117.2" r="0.5" fill="#ff2424"/><circle cx="167.5" cy="100.5" r="0.9" fill="#900000"/><circle cx="167.3" cy="99.7" r="1.2" fill="#a00000"/><circle cx="167.5" cy="100.2" r="0.8" fill="#d40000"/><circle cx="167.7" cy="99.3" r="0.5" fill="#ff2424"/><circle cx="173" cy="99.1" r="1" fill="#900000"/><circle cx="173.2" cy="98.2" r="1.4" fill="#a00000"/><circle cx="172.5" cy="98.1" r="1" fill="#d40000"/><circle cx="173.6" cy="97.7" r="0.5" fill="#ff2424"/><circle cx="160" cy="105.5" r="0.9" fill="#900000"/><circle cx="159.2" cy="105.1" r="1.2" fill="#a00000"/><circle cx="158.8" cy="104.8" r="0.8" fill="#d40000"/><circle cx="159.6" cy="104.7" r="0.4" fill="#ff2424"/><circle cx="168.8" cy="122.1" r="0.8" fill="#900000"/><circle cx="168.6" cy="123.1" r="1.1" fill="#a00000"/><circle cx="168.2" cy="123.2" r="0.8" fill="#d40000"/><circle cx="169" cy="122.7" r="0.4" fill="#ff2424"/><circle cx="181.6" cy="115.6" r="0.8" fill="#900000"/><circle cx="182.5" cy="116.1" r="1.1" fill="#a00000"/><circle cx="182.8" cy="115.7" r="0.7" fill="#d40000"/><circle cx="182.8" cy="115.7" r="0.4" fill="#ff2424"/><circle cx="164.9" cy="121.1" r="0.7" fill="#900000"/><circle cx="164.4" cy="122" r="0.9" fill="#a00000"/><circle cx="164.8" cy="122.1" r="0.6" fill="#d40000"/><circle cx="164.7" cy="121.7" r="0.3" fill="#ff2424"/><circle cx="183.1" cy="113.5" r="1" fill="#900000"/><circle cx="184.1" cy="113.8" r="1.3" fill="#a00000"/><circle cx="183.9" cy="113.2" r="0.9" fill="#d40000"/><circle cx="184.5" cy="113.4" r="0.5" fill="#ff2424"/><circle cx="179.2" cy="100.1" r="0.9" fill="#900000"/><circle cx="179.9" cy="99.3" r="1.3" fill="#a00000"/><circle cx="180.4" cy="99" r="0.9" fill="#d40000"/><circle cx="180.3" cy="98.9" r="0.5" fill="#ff2424"/><circle cx="183.7" cy="109.8" r="1" fill="#900000"/><circle cx="184.7" cy="109.8" r="1.4" fill="#a00000"/><circle cx="185.2" cy="110.2" r="0.9" fill="#d40000"/><circle cx="185.2" cy="109.4" r="0.5" fill="#ff2424"/><circle cx="158" cy="105.6" r="0.8" fill="#900000"/><circle cx="157" cy="105.3" r="1" fill="#a00000"/><circle cx="157.5" cy="105.3" r="0.7" fill="#d40000"/><circle cx="157.4" cy="104.9" r="0.4" fill="#ff2424"/><circle cx="182.8" cy="105.1" r="0.9" fill="#900000"/><circle cx="183.8" cy="104.7" r="1.3" fill="#a00000"/><circle cx="183.5" cy="104.2" r="0.9" fill="#d40000"/><circle cx="184.2" cy="104.3" r="0.5" fill="#ff2424"/><circle cx="170.5" cy="110" r="12.9" fill="url(#g)"/><rect x="166.3" y="100.8" width="1.8" height="1.8" fill="#7070ff"/><rect x="173.7" y="104.5" width="1.4" height="1.4" fill="#ff9898"/><rect x="181.3" y="112.7" width="2" height="2" fill="#ff9898"/><rect x="160.6" y="105" width="1.8" height="1.8" fill="#ff9898"/><rect x="161.9" y="112.2" width="2" height="2" fill="#7070ff"/><rect x="174" y="108.9" width="2" height="2" fill="#8a10a8"/><rect x="166.3" y="106.9" width="1.8" height="1.8" fill="#ff9898"/><rect x="168.9" y="98.2" width="1.8" height="1.8" fill="#8a10a8"/><rect x="172.9" y="98.3" width="1.4" height="1.4" fill="#ff9898"/><rect x="162.5" y="103.3" width="1.4" height="1.4" fill="#7070ff"/><rect x="165.6" y="118.5" width="1.8" height="1.8" fill="#ff9898"/><rect x="177.4" y="105.9" width="1.4" height="1.4" fill="#7070ff"/><rect x="177.6" y="108.4" width="1.4" height="1.4" fill="#ff9898"/><rect x="175.2" y="114.9" width="1.4" height="1.4" fill="#ff9898"/><rect x="167.4" y="109.2" width="1.8" height="1.8" fill="#ff9898"/><rect x="174.4" y="104.1" width="1.8" height="1.8" fill="#7070ff"/><rect x="167.8" y="99.2" width="2" height="2" fill="#ff9898"/><rect x="159.3" y="108.9" width="1.8" height="1.8" fill="#8a10a8"/><rect x="182" y="105.3" width="1.4" height="1.4" fill="#7070ff"/><rect x="173.5" y="112.3" width="1.4" height="1.4" fill="#ff9898"/><rect x="173.5" y="104.3" width="2" height="2" fill="#ff9898"/><rect x="163.7" y="108.4" width="2" height="2" fill="#7070ff"/><rect x="180" y="103.2" width="1.4" height="1.4" fill="#8a10a8"/><rect x="174.5" y="108.6" width="1.8" height="1.8" fill="#7070ff"/><rect x="175.3" y="116.9" width="1.8" height="1.8" fill="#7070ff"/><rect x="181.6" y="111.2" width="2" height="2" fill="#7070ff"/><rect x="159.5" y="109.7" width="1.4" height="1.4" fill="#7070ff"/><rect x="162.4" y="110.7" width="1.4" height="1.4" fill="#7070ff"/><rect x="163.3" y="116.5" width="1.4" height="1.4" fill="#ff9898"/><rect x="164.2" y="108.5" width="2" height="2" fill="#ff9898"/><rect x="181.9" y="106.9" width="1.8" height="1.8" fill="#7070ff"/><rect x="179" y="117.9" width="1.8" height="1.8" fill="#ff9898"/><rect x="164.3" y="102.5" width="1.8" height="1.8" fill="#8a10a8"/><circle cx="182.6" cy="104.4" r="0.7" fill="#900000"/><circle cx="183.6" cy="104" r="0.9" fill="#a00000"/><circle cx="183.9" cy="103.7" r="0.6" fill="#d40000"/><circle cx="183.9" cy="103.7" r="0.3" fill="#ff2424"/><circle cx="162.5" cy="120.7" r="0.7" fill="#900000"/><circle cx="161.8" cy="121.5" r="1" fill="#a00000"/><circle cx="162.2" cy="121.7" r="0.7" fill="#d40000"/><circle cx="162.2" cy="121.2" r="0.4" fill="#ff2424"/><circle cx="182.1" cy="116.7" r="0.7" fill="#900000"/><circle cx="183" cy="117.2" r="1" fill="#a00000"/><circle cx="182.5" cy="117.1" r="0.7" fill="#d40000"/><circle cx="183.3" cy="116.9" r="0.4" fill="#ff2424"/><circle cx="181.4" cy="117.6" r="1" fill="#900000"/><circle cx="182.3" cy="118.2" r="1.3" fill="#a00000"/><circle cx="181.8" cy="117.9" r="0.9" fill="#d40000"/><circle cx="182.7" cy="117.8" r="0.5" fill="#ff2424"/><circle cx="183.6" cy="112.1" r="1" fill="#900000"/><circle cx="184.7" cy="112.3" r="1.4" fill="#a00000"/><circle cx="184.9" cy="112.9" r="1" fill="#d40000"/><circle cx="185.1" cy="111.8" r="0.5" fill="#ff2424"/><circle cx="158.7" cy="104" r="0.8" fill="#900000"/><circle cx="157.7" cy="103.5" r="1.1" fill="#a00000"/><circle cx="157.3" cy="103.3" r="0.7" fill="#d40000"/><circle cx="158.1" cy="103.2" r="0.4" fill="#ff2424"/><circle cx="179.3" cy="100.1" r="0.9" fill="#900000"/><circle cx="180" cy="99.3" r="1.2" fill="#a00000"/><circle cx="179.8" cy="98.8" r="0.8" fill="#d40000"/><circle cx="180.4" cy="98.9" r="0.4" fill="#ff2424"/><circle cx="167.7" cy="122.8" r="0.8" fill="#900000"/><circle cx="167.5" cy="123.9" r="1.1" fill="#a00000"/><circle cx="167.9" cy="124.2" r="0.8" fill="#d40000"/><circle cx="167.8" cy="123.5" r="0.4" fill="#ff2424"/><circle cx="158.2" cy="105.6" r="0.9" fill="#900000"/><circle cx="157.2" cy="105.2" r="1.3" fill="#a00000"/><circle cx="157.4" cy="104.7" r="0.9" fill="#d40000"/><circle cx="157.6" cy="104.8" r="0.5" fill="#ff2424"/><circle cx="177.9" cy="120.6" r="0.6" fill="#900000"/><circle cx="178.5" cy="121.5" r="0.9" fill="#a00000"/><circle cx="178.7" cy="121.1" r="0.6" fill="#d40000"/><circle cx="178.8" cy="121.2" r="0.3" fill="#ff2424"/><circle cx="183.1" cy="112" r="0.6" fill="#900000"/><circle cx="184.1" cy="112.1" r="0.9" fill="#a00000"/><circle cx="184" cy="111.8" r="0.6" fill="#d40000"/><circle cx="184.4" cy="111.9" r="0.3" fill="#ff2424"/><circle cx="157.8" cy="109" r="0.9" fill="#900000"/><circle cx="156.8" cy="108.9" r="1.2" fill="#a00000"/><circle cx="156.7" cy="109.4" r="0.8" fill="#d40000"/><circle cx="157.2" cy="108.5" r="0.4" fill="#ff2424"/><circle cx="160.2" cy="116.9" r="0.7" fill="#900000"/><circle cx="159.3" cy="117.5" r="0.9" fill="#a00000"/><circle cx="159.3" cy="117.9" r="0.6" fill="#d40000"/><circle cx="159.6" cy="117.2" r="0.3" fill="#ff2424"/><circle cx="159.1" cy="105.6" r="0.9" fill="#900000"/><circle cx="158.2" cy="105.3" r="1.2" fill="#a00000"/><circle cx="157.7" cy="105.1" r="0.8" fill="#d40000"/><circle cx="158.6" cy="104.9" r="0.4" fill="#ff2424"/><circle cx="170.7" cy="98.1" r="1" fill="#900000"/><circle cx="170.7" cy="97.1" r="1.3" fill="#a00000"/><circle cx="171" cy="97.7" r="0.9" fill="#d40000"/><circle cx="171.1" cy="96.7" r="0.5" fill="#ff2424"/><circle cx="172.9" cy="98.6" r="0.9" fill="#900000"/><circle cx="173.1" cy="97.7" r="1.2" fill="#a00000"/><circle cx="172.9" cy="98.2" r="0.8" fill="#d40000"/><circle cx="173.5" cy="97.3" r="0.4" fill="#ff2424"/><circle cx="172.8" cy="121.1" r="0.6" fill="#900000"/><circle cx="173" cy="122" r="0.9" fill="#a00000"/><circle cx="173.1" cy="122.4" r="0.6" fill="#d40000"/><circle cx="173.2" cy="121.7" r="0.3" fill="#ff2424"/><circle cx="180.9" cy="106.3" r="0.7" fill="#900000"/><circle cx="181.7" cy="106" r="0.9" fill="#a00000"/><circle cx="181.9" cy="106.3" r="0.6" fill="#d40000"/><circle cx="182" cy="105.7" r="0.3" fill="#ff2424"/><circle cx="168.7" cy="99.5" r="0.6" fill="#900000"/><circle cx="168.6" cy="98.7" r="0.9" fill="#a00000"/><circle cx="169" cy="98.6" r="0.6" fill="#d40000"/><circle cx="168.9" cy="98.4" r="0.3" fill="#ff2424"/><circle cx="168.6" cy="99.6" r="0.8" fill="#900000"/><circle cx="168.4" cy="98.8" r="1.1" fill="#a00000"/><circle cx="168.5" cy="98.3" r="0.7" fill="#d40000"/><circle cx="168.8" cy="98.4" r="0.4" fill="#ff2424"/><circle cx="164.2" cy="117.9" r="0.8" fill="#900000"/><circle cx="163.7" cy="118.5" r="1.1" fill="#a00000"/><circle cx="163.2" cy="118.5" r="0.7" fill="#d40000"/><circle cx="164" cy="118.2" r="0.4" fill="#ff2424"/><circle cx="175.7" cy="102.3" r="0.7" fill="#900000"/><circle cx="176.1" cy="101.7" r="1" fill="#a00000"/><circle cx="176.5" cy="101.5" r="0.7" fill="#d40000"/><circle cx="176.4" cy="101.3" r="0.4" fill="#ff2424"/><circle cx="163.6" cy="104.3" r="0.7" fill="#900000"/><circle cx="163.1" cy="103.8" r="1" fill="#a00000"/><circle cx="163.5" cy="103.7" r="0.7" fill="#d40000"/><circle cx="163.4" cy="103.5" r="0.4" fill="#ff2424"/><circle cx="164.5" cy="103.7" r="0.9" fill="#900000"/><circle cx="164" cy="103.2" r="1.3" fill="#a00000"/><circle cx="164.4" cy="102.8" r="0.9" fill="#d40000"/><circle cx="164.4" cy="102.8" r="0.5" fill="#ff2424"/><circle cx="174" cy="102.7" r="0.7" fill="#900000"/><circle cx="174.3" cy="102.1" r="0.9" fill="#a00000"/><circle cx="174.7" cy="102" r="0.6" fill="#d40000"/><circle cx="174.6" cy="101.8" r="0.3" fill="#ff2424"/><circle cx="175.2" cy="115.9" r="0.9" fill="#900000"/><circle cx="175.6" cy="116.4" r="1.2" fill="#a00000"/><circle cx="175.1" cy="116.1" r="0.8" fill="#d40000"/><circle cx="176" cy="116" r="0.4" fill="#ff2424"/><circle cx="165.1" cy="106.7" r="0.9" fill="#900000"/><circle cx="164.6" cy="106.5" r="1.2" fill="#a00000"/><circle cx="164.1" cy="106.6" r="0.8" fill="#d40000"/><circle cx="165" cy="106.1" r="0.4" fill="#ff2424"/><circle cx="166.6" cy="105.8" r="1" fill="#900000"/><circle cx="166.3" cy="105.5" r="1.4" fill="#a00000"/><circle cx="166.9" cy="105.4" r="0.9" fill="#d40000"/><circle cx="166.7" cy="105" r="0.5" fill="#ff2424"/><circle cx="165.9" cy="110.6" r="1" fill="#900000"/><circle cx="165.5" cy="110.7" r="1.4" fill="#a00000"/><circle cx="165.9" cy="111.2" r="0.9" fill="#d40000"/><circle cx="165.9" cy="110.2" r="0.5" fill="#ff2424"/><circle cx="170.3" cy="107.1" r="0.8" fill="#900000"/><circle cx="170.3" cy="106.9" r="1.2" fill="#a00000"/><circle cx="170.1" cy="106.4" r="0.8" fill="#d40000"/><circle cx="170.7" cy="106.5" r="0.4" fill="#ff2424"/><circle cx="172.9" cy="111.5" r="0.7" fill="#900000"/><circle cx="173" cy="111.6" r="1" fill="#a00000"/><circle cx="173.4" cy="111.4" r="0.7" fill="#d40000"/><circle cx="173.3" cy="111.3" r="0.3" fill="#ff2424"/><circle cx="110.9" cy="135.1" r="0.9" fill="#900000"/><circle cx="111" cy="135.2" r="1.2" fill="#a00000"/><circle cx="111.4" cy="135.5" r="0.8" fill="#d40000"/><circle cx="111.4" cy="134.8" r="0.4" fill="#ff2424"/><circle cx="110" cy="130.4" r="1.1" fill="#900000"/><circle cx="109.9" cy="130.1" r="1.5" fill="#a00000"/><circle cx="109.5" cy="129.6" r="1" fill="#d40000"/><circle cx="110.4" cy="129.7" r="0.5" fill="#ff2424"/><circle cx="114.6" cy="130" r="1.2" fill="#900000"/><circle cx="114.9" cy="129.6" r="1.6" fill="#a00000"/><circle cx="115" cy="130.4" r="1.1" fill="#d40000"/><circle cx="115.4" cy="129.1" r="0.6" fill="#ff2424"/><circle cx="103.6" cy="132.8" r="1.2" fill="#900000"/><circle cx="103.1" cy="132.7" r="1.7" fill="#a00000"/><circle cx="103.7" cy="132.3" r="1.2" fill="#d40000"/><circle cx="103.6" cy="132.2" r="0.6" fill="#ff2424"/><circle cx="106" cy="139.9" r="1" fill="#900000"/><circle cx="105.6" cy="140.3" r="1.4" fill="#a00000"/><circle cx="106.1" cy="140.8" r="1" fill="#d40000"/><circle cx="106" cy="139.9" r="0.5" fill="#ff2424"/><circle cx="109" cy="126.6" r="0.9" fill="#900000"/><circle cx="108.9" cy="126" r="1.2" fill="#a00000"/><circle cx="108.8" cy="125.5" r="0.8" fill="#d40000"/><circle cx="109.3" cy="125.7" r="0.4" fill="#ff2424"/><circle cx="104.2" cy="140" r="0.8" fill="#900000"/><circle cx="103.7" cy="140.5" r="1.1" fill="#a00000"/><circle cx="103.3" cy="140.1" r="0.8" fill="#d40000"/><circle cx="104" cy="140.1" r="0.4" fill="#ff2424"/><circle cx="113" cy="143.6" r="1.2" fill="#900000"/><circle cx="113.3" cy="144.3" r="1.6" fill="#a00000"/><circle cx="114" cy="144.4" r="1.1" fill="#d40000"/><circle cx="113.8" cy="143.8" r="0.6" fill="#ff2424"/><circle cx="122.8" cy="133.5" r="0.9" fill="#900000"/><circle cx="123.8" cy="133.5" r="1.2" fill="#a00000"/><circle cx="123.9" cy="134" r="0.8" fill="#d40000"/><circle cx="124.2" cy="133.1" r="0.4" fill="#ff2424"/><circle cx="108.3" cy="121.5" r="1" fill="#900000"/><circle cx="108.1" cy="120.5" r="1.4" fill="#a00000"/><circle cx="108.5" cy="120" r="1" fill="#d40000"/><circle cx="108.6" cy="120.1" r="0.5" fill="#ff2424"/><circle cx="110.7" cy="121.1" r="1.2" fill="#900000"/><circle cx="110.7" cy="120.1" r="1.7" fill="#a00000"/><circle cx="110.1" cy="120.6" r="1.1" fill="#d40000"/><circle cx="111.2" cy="119.6" r="0.6" fill="#ff2424"/><circle cx="120.5" cy="125.9" r="0.8" fill="#900000"/><circle cx="121.3" cy="125.2" r="1.1" fill="#a00000"/><circle cx="120.8" cy="125.1" r="0.7" fill="#d40000"/><circle cx="121.6" cy="124.8" r="0.4" fill="#ff2424"/><circle cx="98.9" cy="128.2" r="0.9" fill="#900000"/><circle cx="98" cy="127.8" r="1.2" fill="#a00000"/><circle cx="97.8" cy="128.3" r="0.8" fill="#d40000"/><circle cx="98.3" cy="127.4" r="0.4" fill="#ff2424"/><circle cx="104.3" cy="145.4" r="1.3" fill="#900000"/><circle cx="103.8" cy="146.4" r="1.8" fill="#a00000"/><circle cx="103.6" cy="147.1" r="1.2" fill="#d40000"/><circle cx="104.3" cy="145.8" r="0.6" fill="#ff2424"/><circle cx="104" cy="145.5" r="1" fill="#900000"/><circle cx="103.5" cy="146.4" r="1.4" fill="#a00000"/><circle cx="103.2" cy="145.9" r="0.9" fill="#d40000"/><circle cx="103.9" cy="146" r="0.5" fill="#ff2424"/><circle cx="116.9" cy="145.6" r="1.3" fill="#900000"/><circle cx="117.4" cy="146.5" r="1.8" fill="#a00000"/><circle cx="118.2" cy="146.8" r="1.2" fill="#d40000"/><circle cx="118" cy="146" r="0.6" fill="#ff2424"/><circle cx="117.5" cy="145.3" r="1.1" fill="#900000"/><circle cx="118" cy="146.2" r="1.5" fill="#a00000"/><circle cx="117.7" cy="145.6" r="1" fill="#d40000"/><circle cx="118.5" cy="145.7" r="0.5" fill="#ff2424"/><circle cx="97" cy="132.1" r="0.9" fill="#900000"/><circle cx="95.9" cy="131.9" r="1.2" fill="#a00000"/><circle cx="96.3" cy="132.2" r="0.8" fill="#d40000"/><circle cx="96.3" cy="131.5" r="0.4" fill="#ff2424"/><circle cx="124" cy="137.4" r="1" fill="#900000"/><circle cx="125.1" cy="137.6" r="1.3" fill="#a00000"/><circle cx="124.8" cy="138.1" r="0.9" fill="#d40000"/><circle cx="125.5" cy="137.2" r="0.5" fill="#ff2424"/><circle cx="103" cy="122.2" r="1.2" fill="#900000"/><circle cx="102.4" cy="121.2" r="1.6" fill="#a00000"/><circle cx="103.1" cy="121.1" r="1.1" fill="#d40000"/><circle cx="102.9" cy="120.7" r="0.6" fill="#ff2424"/><circle cx="121.1" cy="143.4" r="1.1" fill="#900000"/><circle cx="121.9" cy="144.2" r="1.6" fill="#a00000"/><circle cx="121.3" cy="144.5" r="1.1" fill="#d40000"/><circle cx="122.4" cy="143.7" r="0.6" fill="#ff2424"/><circle cx="122.6" cy="126.1" r="1.3" fill="#900000"/><circle cx="123.6" cy="125.5" r="1.8" fill="#a00000"/><circle cx="124.3" cy="125.1" r="1.2" fill="#d40000"/><circle cx="124.2" cy="124.9" r="0.7" fill="#ff2424"/><circle cx="123.1" cy="141.5" r="1" fill="#900000"/><circle cx="124.1" cy="142.1" r="1.4" fill="#a00000"/><circle cx="123.5" cy="142.2" r="1" fill="#d40000"/><circle cx="124.6" cy="141.6" r="0.5" fill="#ff2424"/><circle cx="118.3" cy="147" r="1.1" fill="#900000"/><circle cx="118.9" cy="148" r="1.5" fill="#a00000"/><circle cx="119.4" cy="148.4" r="1" fill="#d40000"/><circle cx="119.4" cy="147.6" r="0.5" fill="#ff2424"/><circle cx="101.9" cy="121.4" r="1.1" fill="#900000"/><circle cx="101.2" cy="120.4" r="1.5" fill="#a00000"/><circle cx="101" cy="119.7" r="1.1" fill="#d40000"/><circle cx="101.7" cy="119.9" r="0.6" fill="#ff2424"/><circle cx="95.2" cy="133.5" r="1" fill="#900000"/><circle cx="94" cy="133.4" r="1.4" fill="#a00000"/><circle cx="93.4" cy="133.1" r="1" fill="#d40000"/><circle cx="94.4" cy="133" r="0.5" fill="#ff2424"/><circle cx="122.6" cy="143.8" r="1.3" fill="#900000"/><circle cx="123.6" cy="144.6" r="1.7" fill="#a00000"/><circle cx="123" cy="144" r="1.2" fill="#d40000"/><circle cx="124.1" cy="144" r="0.6" fill="#ff2424"/><circle cx="107.9" cy="149.4" r="1.1" fill="#900000"/><circle cx="107.7" cy="150.7" r="1.6" fill="#a00000"/><circle cx="108.3" cy="150.2" r="1.1" fill="#d40000"/><circle cx="108.2" cy="150.2" r="0.6" fill="#ff2424"/><circle cx="110.6" cy="118.2" r="1.2" fill="#900000"/><circle cx="110.6" cy="116.9" r="1.6" fill="#a00000"/><circle cx="109.9" cy="117.1" r="1.1" fill="#d40000"/><circle cx="111.1" cy="116.4" r="0.6" fill="#ff2424"/><circle cx="100.4" cy="121.4" r="1.3" fill="#900000"/><circle cx="99.6" cy="120.3" r="1.8" fill="#a00000"/><circle cx="100.3" cy="120.1" r="1.2" fill="#d40000"/><circle cx="100.1" cy="119.8" r="0.6" fill="#ff2424"/><circle cx="120.2" cy="120.9" r="0.8" fill="#900000"/><circle cx="121" cy="119.8" r="1.1" fill="#a00000"/><circle cx="121.5" cy="119.8" r="0.8" fill="#d40000"/><circle cx="121.4" cy="119.4" r="0.4" fill="#ff2424"/><circle cx="99.9" cy="146.7" r="0.9" fill="#900000"/><circle cx="99" cy="147.7" r="1.2" fill="#a00000"/><circle cx="99.4" cy="147.3" r="0.8" fill="#d40000"/><circle cx="99.4" cy="147.3" r="0.4" fill="#ff2424"/><circle cx="119.7" cy="147.9" r="1.1" fill="#900000"/><circle cx="120.4" cy="149.1" r="1.5" fill="#a00000"/><circle cx="120.6" cy="148.4" r="1.1" fill="#d40000"/><circle cx="120.9" cy="148.6" r="0.6" fill="#ff2424"/><circle cx="100.7" cy="147.6" r="1" fill="#900000"/><circle cx="99.9" cy="148.7" r="1.3" fill="#a00000"/><circle cx="99.8" cy="149.3" r="0.9" fill="#d40000"/><circle cx="100.3" cy="148.3" r="0.5" fill="#ff2424"/><circle cx="112.3" cy="150.8" r="0.9" fill="#900000"/><circle cx="112.5" cy="152.1" r="1.2" fill="#a00000"/><circle cx="112.9" cy="152.5" r="0.8" fill="#d40000"/><circle cx="112.8" cy="151.7" r="0.4" fill="#ff2424"/><circle cx="121.8" cy="121.4" r="0.8" fill="#900000"/><circle cx="122.7" cy="120.4" r="1.2" fill="#a00000"/><circle cx="122.9" cy="120.9" r="0.8" fill="#d40000"/><circle cx="123.1" cy="120.1" r="0.4" fill="#ff2424"/><circle cx="120" cy="148" r="1.2" fill="#900000"/><circle cx="120.8" cy="149.1" r="1.7" fill="#a00000"/><circle cx="120" cy="149" r="1.1" fill="#d40000"/><circle cx="121.3" cy="148.6" r="0.6" fill="#ff2424"/><circle cx="111.9" cy="150.9" r="1.2" fill="#900000"/><circle cx="112.1" cy="152.3" r="1.7" fill="#a00000"/><circle cx="112.8" cy="152.2" r="1.2" fill="#d40000"/><circle cx="112.6" cy="151.7" r="0.6" fill="#ff2424"/><circle cx="110.5" cy="134" r="16.4" fill="url(#g)"/><rect x="104.3" y="136.5" width="1.4" height="1.4" fill="#8a10a8"/><rect x="112" y="141.8" width="2" height="2" fill="#7070ff"/><rect x="109" y="146.8" width="1.8" height="1.8" fill="#7070ff"/><rect x="119.6" y="123.7" width="1.4" height="1.4" fill="#8a10a8"/><rect x="111.5" y="128.1" width="1.8" height="1.8" fill="#8a10a8"/><rect x="99.8" y="143.6" width="1.4" height="1.4" fill="#ff9898"/><rect x="114.2" y="135.8" width="2" height="2" fill="#8a10a8"/><rect x="117" y="148.5" width="1.8" height="1.8" fill="#7070ff"/><rect x="121" y="127.7" width="1.8" height="1.8" fill="#ff9898"/><rect x="125.1" y="139" width="1.4" height="1.4" fill="#ff9898"/><rect x="106.1" y="128.6" width="1.4" height="1.4" fill="#7070ff"/><rect x="108.5" y="131.4" width="2" height="2" fill="#8a10a8"/><rect x="104" y="136.3" width="1.8" height="1.8" fill="#7070ff"/><rect x="110.9" y="132.8" width="1.4" height="1.4" fill="#7070ff"/><rect x="105" y="125.7" width="2" height="2" fill="#ff9898"/><rect x="101.8" y="129.8" width="1.8" height="1.8" fill="#8a10a8"/><rect x="121.1" y="140.3" width="2" height="2" fill="#ff9898"/><rect x="108.5" y="129.4" width="1.8" height="1.8" fill="#8a10a8"/><rect x="107" y="127.9" width="2" height="2" fill="#ff9898"/><rect x="102.3" y="132.9" width="1.8" height="1.8" fill="#7070ff"/><rect x="108.2" y="144" width="1.4" height="1.4" fill="#7070ff"/><rect x="119" y="121.6" width="1.8" height="1.8" fill="#8a10a8"/><rect x="108.5" y="132.2" width="1.8" height="1.8" fill="#7070ff"/><rect x="103.5" y="144.2" width="2" height="2" fill="#7070ff"/><rect x="100.8" y="138.7" width="1.8" height="1.8" fill="#7070ff"/><rect x="120.3" y="131" width="1.4" height="1.4" fill="#8a10a8"/><rect x="107.4" y="147" width="2" height="2" fill="#8a10a8"/><rect x="111.7" y="132.3" width="1.4" height="1.4" fill="#8a10a8"/><rect x="112.9" y="133.5" width="1.4" height="1.4" fill="#ff9898"/><rect x="114" y="147" width="1.4" height="1.4" fill="#7070ff"/><rect x="95.9" y="136.3" width="1.4" height="1.4" fill="#7070ff"/><rect x="117.2" y="139.5" width="1.4" height="1.4" fill="#ff9898"/><rect x="104.1" y="137.2" width="2" height="2" fill="#8a10a8"/><rect x="117.3" y="143.6" width="1.4" height="1.4" fill="#7070ff"/><rect x="118.4" y="127.2" width="2" height="2" fill="#8a10a8"/><rect x="98.4" y="124.5" width="1.8" height="1.8" fill="#ff9898"/><rect x="104.5" y="148.4" width="1.4" height="1.4" fill="#7070ff"/><rect x="109.1" y="127.6" width="1.4" height="1.4" fill="#7070ff"/><rect x="120.6" y="136.8" width="1.8" height="1.8" fill="#7070ff"/><rect x="123.2" y="141.1" width="1.4" height="1.4" fill="#8a10a8"/><rect x="121.4" y="143.3" width="2" height="2" fill="#7070ff"/><rect x="121.7" y="143.4" width="1.8" height="1.8" fill="#7070ff"/><circle cx="116.1" cy="150" r="1.2" fill="#900000"/><circle cx="116.6" cy="151.3" r="1.6" fill="#a00000"/><circle cx="117.3" cy="151.3" r="1.1" fill="#d40000"/><circle cx="117.1" cy="150.8" r="0.6" fill="#ff2424"/><circle cx="126.3" cy="127.7" r="1" fill="#900000"/><circle cx="127.6" cy="127.2" r="1.4" fill="#a00000"/><circle cx="127" cy="127.5" r="1" fill="#d40000"/><circle cx="128" cy="126.8" r="0.5" fill="#ff2424"/><circle cx="96.9" cy="144.2" r="1.3" fill="#900000"/><circle cx="95.9" cy="145" r="1.7" fill="#a00000"/><circle cx="95.3" cy="144.4" r="1.2" fill="#d40000"/><circle cx="96.4" cy="144.5" r="0.6" fill="#ff2424"/><circle cx="108.7" cy="117.2" r="1.3" fill="#900000"/><circle cx="108.6" cy="115.8" r="1.8" fill="#a00000"/><circle cx="108.3" cy="115" r="1.2" fill="#d40000"/><circle cx="109.1" cy="115.2" r="0.7" fill="#ff2424"/><circle cx="124.5" cy="143.5" r="1" fill="#900000"/><circle cx="125.6" cy="144.3" r="1.4" fill="#a00000"/><circle cx="126.2" cy="144.5" r="1" fill="#d40000"/><circle cx="126" cy="143.9" r="0.5" fill="#ff2424"/><circle cx="116.2" cy="149.9" r="1.3" fill="#900000"/><circle cx="116.6" cy="151.2" r="1.7" fill="#a00000"/><circle cx="116.6" cy="150.4" r="1.2" fill="#d40000"/><circle cx="117.2" cy="150.6" r="0.6" fill="#ff2424"/><circle cx="99.3" cy="145.3" r="0.9" fill="#900000"/><circle cx="98.4" cy="146.2" r="1.2" fill="#a00000"/><circle cx="98.2" cy="145.7" r="0.8" fill="#d40000"/><circle cx="98.8" cy="145.9" r="0.4" fill="#ff2424"/><circle cx="94.7" cy="135.4" r="0.9" fill="#900000"/><circle cx="93.5" cy="135.5" r="1.3" fill="#a00000"/><circle cx="92.9" cy="135.7" r="0.9" fill="#d40000"/><circle cx="93.9" cy="135.1" r="0.5" fill="#ff2424"/><circle cx="125.6" cy="137.3" r="0.9" fill="#900000"/><circle cx="126.8" cy="137.6" r="1.2" fill="#a00000"/><circle cx="127.3" cy="137.9" r="0.8" fill="#d40000"/><circle cx="127.2" cy="137.2" r="0.4" fill="#ff2424"/><circle cx="117.2" cy="120.1" r="1" fill="#900000"/><circle cx="117.8" cy="119" r="1.4" fill="#a00000"/><circle cx="117.6" cy="118.4" r="1" fill="#d40000"/><circle cx="118.2" cy="118.6" r="0.5" fill="#ff2424"/><circle cx="112.3" cy="149" r="1.2" fill="#900000"/><circle cx="112.4" cy="150.2" r="1.6" fill="#a00000"/><circle cx="112.9" cy="149.6" r="1.1" fill="#d40000"/><circle cx="112.9" cy="149.7" r="0.6" fill="#ff2424"/><circle cx="102.2" cy="122.4" r="1.3" fill="#900000"/><circle cx="101.5" cy="121.4" r="1.7" fill="#a00000"/><circle cx="101.5" cy="120.6" r="1.2" fill="#d40000"/><circle cx="102.1" cy="120.9" r="0.6" fill="#ff2424"/><circle cx="122.9" cy="140.2" r="0.9" fill="#900000"/><circle cx="123.9" cy="140.8" r="1.3" fill="#a00000"/><circle cx="123.9" cy="140.2" r="0.9" fill="#d40000"/><circle cx="124.3" cy="140.4" r="0.5" fill="#ff2424"/><circle cx="115" cy="121.4" r="1.2" fill="#900000"/><circle cx="115.3" cy="120.4" r="1.6" fill="#a00000"/><circle cx="115.9" cy="120.8" r="1.1" fill="#d40000"/><circle cx="115.8" cy="119.8" r="0.6" fill="#ff2424"/><circle cx="117.4" cy="123.3" r="0.8" fill="#900000"/><circle cx="118" cy="122.5" r="1.1" fill="#a00000"/><circle cx="118.4" cy="122.2" r="0.7" fill="#d40000"/><circle cx="118.4" cy="122.1" r="0.4" fill="#ff2424"/><circle cx="98" cy="133.8" r="0.9" fill="#900000"/><circle cx="97" cy="133.8" r="1.2" fill="#a00000"/><circle cx="97.3" cy="133.4" r="0.8" fill="#d40000"/><circle cx="97.4" cy="133.4" r="0.4" fill="#ff2424"/><circle cx="118.8" cy="143.3" r="1.3" fill="#900000"/><circle cx="119.5" cy="144.1" r="1.8" fill="#a00000"/><circle cx="118.8" cy="144.5" r="1.2" fill="#d40000"/><circle cx="120.1" cy="143.5" r="0.6" fill="#ff2424"/><circle cx="121.6" cy="128.4" r="1.1" fill="#900000"/><circle cx="122.5" cy="127.9" r="1.5" fill="#a00000"/><circle cx="123.1" cy="128.2" r="1" fill="#d40000"/><circle cx="122.9" cy="127.5" r="0.5" fill="#ff2424"/><circle cx="98.3" cy="134.7" r="0.8" fill="#900000"/><circle cx="97.3" cy="134.8" r="1.1" fill="#a00000"/><circle cx="97.6" cy="134.4" r="0.8" fill="#d40000"/><circle cx="97.7" cy="134.4" r="0.4" fill="#ff2424"/><circle cx="122.3" cy="130.9" r="1.1" fill="#900000"/><circle cx="123.3" cy="130.7" r="1.5" fill="#a00000"/><circle cx="123.2" cy="131.4" r="1" fill="#d40000"/><circle cx="123.8" cy="130.2" r="0.6" fill="#ff2424"/><circle cx="122.6" cy="135.1" r="0.9" fill="#900000"/><circle cx="123.6" cy="135.2" r="1.2" fill="#a00000"/><circle cx="124.1" cy="135.5" r="0.8" fill="#d40000"/><circle cx="124" cy="134.8" r="0.4" fill="#ff2424"/><circle cx="121" cy="139.2" r="1.2" fill="#900000"/><circle cx="121.9" cy="139.6" r="1.6" fill="#a00000"/><circle cx="121.8" cy="140.3" r="1.1" fill="#d40000"/><circle cx="122.4" cy="139.1" r="0.6" fill="#ff2424"/><circle cx="99.8" cy="131.5" r="0.8" fill="#900000"/><circle cx="98.9" cy="131.3" r="1.1" fill="#a00000"/><circle cx="99.1" cy="130.9" r="0.8" fill="#d40000"/><circle cx="99.2" cy="131" r="0.4" fill="#ff2424"/><circle cx="113.5" cy="143.7" r="1" fill="#900000"/><circle cx="113.8" cy="144.4" r="1.3" fill="#a00000"/><circle cx="114.1" cy="145" r="0.9" fill="#d40000"/><circle cx="114.2" cy="144" r="0.5" fill="#ff2424"/><circle cx="107.3" cy="142.2" r="1.1" fill="#900000"/><circle cx="107.1" cy="142.9" r="1.5" fill="#a00000"/><circle cx="106.6" cy="143.4" r="1" fill="#d40000"/><circle cx="107.6" cy="142.4" r="0.5" fill="#ff2424"/><circle cx="102.3" cy="132.8" r="1.1" fill="#900000"/><circle cx="101.6" cy="132.7" r="1.5" fill="#a00000"/><circle cx="101" cy="132.9" r="1" fill="#d40000"/><circle cx="102.1" cy="132.3" r="0.5" fill="#ff2424"/><circle cx="118" cy="132.3" r="1.1" fill="#900000"/><circle cx="118.6" cy="132.2" r="1.5" fill="#a00000"/><circle cx="118.5" cy="132.8" r="1" fill="#d40000"/><circle cx="119.1" cy="131.7" r="0.5" fill="#ff2424"/><circle cx="252.1" cy="188" r="1.3" fill="#900000"/><circle cx="252.4" cy="187.9" r="1.8" fill="#a00000"/><circle cx="252.3" cy="188.7" r="1.2" fill="#d40000"/><circle cx="253" cy="187.3" r="0.7" fill="#ff2424"/><circle cx="253.3" cy="185.7" r="1.4" fill="#900000"/><circle cx="253.7" cy="185.4" r="1.9" fill="#a00000"/><circle cx="252.9" cy="185.1" r="1.3" fill="#d40000"/><circle cx="254.3" cy="184.8" r="0.7" fill="#ff2424"/><circle cx="255.3" cy="183.9" r="1" fill="#900000"/><circle cx="255.8" cy="183.5" r="1.3" fill="#a00000"/><circle cx="255.5" cy="184" r="0.9" fill="#d40000"/><circle cx="256.2" cy="183.1" r="0.5" fill="#ff2424"/><circle cx="255.5" cy="195.5" r="1.5" fill="#900000"/><circle cx="256.1" cy="195.9" r="2" fill="#a00000"/><circle cx="256.6" cy="195.1" r="1.4" fill="#d40000"/><circle cx="256.7" cy="195.3" r="0.7" fill="#ff2424"/><circle cx="257.1" cy="185.8" r="1.3" fill="#900000"/><circle cx="257.8" cy="185.5" r="1.8" fill="#a00000"/><circle cx="258.6" cy="185.5" r="1.2" fill="#d40000"/><circle cx="258.4" cy="185" r="0.6" fill="#ff2424"/><circle cx="242.5" cy="181.8" r="1.5" fill="#900000"/><circle cx="242" cy="181.1" r="2.1" fill="#a00000"/><circle cx="242.2" cy="180.2" r="1.4" fill="#d40000"/><circle cx="242.6" cy="180.5" r="0.7" fill="#ff2424"/><circle cx="246.5" cy="199.4" r="1.4" fill="#900000"/><circle cx="246.4" cy="200.2" r="2" fill="#a00000"/><circle cx="245.5" cy="200.2" r="1.3" fill="#d40000"/><circle cx="247" cy="199.6" r="0.7" fill="#ff2424"/><circle cx="243.2" cy="199.4" r="1.4" fill="#900000"/><circle cx="242.8" cy="200.2" r="2" fill="#a00000"/><circle cx="242.6" cy="201.1" r="1.3" fill="#d40000"/><circle cx="243.4" cy="199.6" r="0.7" fill="#ff2424"/><circle cx="239.5" cy="183.3" r="1.5" fill="#900000"/><circle cx="238.7" cy="182.7" r="2" fill="#a00000"/><circle cx="239.7" cy="182.6" r="1.4" fill="#d40000"/><circle cx="239.4" cy="182.1" r="0.7" fill="#ff2424"/><circle cx="243.2" cy="178.6" r="1.4" fill="#900000"/><circle cx="242.7" cy="177.7" r="1.9" fill="#a00000"/><circle cx="243.6" cy="177.4" r="1.3" fill="#d40000"/><circle cx="243.3" cy="177.1" r="0.7" fill="#ff2424"/><circle cx="251.6" cy="202.7" r="1.3" fill="#900000"/><circle cx="251.8" cy="203.8" r="1.8" fill="#a00000"/><circle cx="251.5" cy="203" r="1.2" fill="#d40000"/><circle cx="252.4" cy="203.2" r="0.7" fill="#ff2424"/><circle cx="234.9" cy="190.5" r="1" fill="#900000"/><circle cx="233.8" cy="190.6" r="1.3" fill="#a00000"/><circle cx="233.7" cy="190" r="0.9" fill="#d40000"/><circle cx="234.2" cy="190.2" r="0.5" fill="#ff2424"/><circle cx="251.7" cy="202.9" r="0.9" fill="#900000"/><circle cx="252" cy="203.9" r="1.3" fill="#a00000"/><circle cx="252.4" cy="203.6" r="0.9" fill="#d40000"/><circle cx="252.4" cy="203.5" r="0.5" fill="#ff2424"/><circle cx="248.1" cy="175.5" r="1.4" fill="#900000"/><circle cx="248" cy="174.3" r="1.9" fill="#a00000"/><circle cx="248.6" cy="173.7" r="1.3" fill="#d40000"/><circle cx="248.6" cy="173.7" r="0.7" fill="#ff2424"/><circle cx="249.9" cy="175.2" r="1.3" fill="#900000"/><circle cx="250" cy="174.1" r="1.8" fill="#a00000"/><circle cx="249.9" cy="174.9" r="1.3" fill="#d40000"/><circle cx="250.6" cy="173.5" r="0.7" fill="#ff2424"/><circle cx="234" cy="185.9" r="1.3" fill="#900000"/><circle cx="232.8" cy="185.6" r="1.7" fill="#a00000"/><circle cx="232" cy="185.6" r="1.2" fill="#d40000"/><circle cx="233.4" cy="185" r="0.6" fill="#ff2424"/><circle cx="252.4" cy="175.1" r="1.4" fill="#900000"/><circle cx="252.8" cy="173.9" r="2" fill="#a00000"/><circle cx="252" cy="173.4" r="1.3" fill="#d40000"/><circle cx="253.4" cy="173.3" r="0.7" fill="#ff2424"/><circle cx="263.5" cy="193.4" r="1.1" fill="#900000"/><circle cx="264.7" cy="193.7" r="1.6" fill="#a00000"/><circle cx="264.6" cy="193" r="1.1" fill="#d40000"/><circle cx="265.2" cy="193.2" r="0.6" fill="#ff2424"/><circle cx="257.1" cy="202.6" r="1.4" fill="#900000"/><circle cx="257.8" cy="203.7" r="1.9" fill="#a00000"/><circle cx="257.3" cy="203" r="1.3" fill="#d40000"/><circle cx="258.4" cy="203.1" r="0.7" fill="#ff2424"/><circle cx="263.1" cy="183.7" r="1.1" fill="#900000"/><circle cx="264.3" cy="183.2" r="1.5" fill="#a00000"/><circle cx="263.9" cy="182.6" r="1" fill="#d40000"/><circle cx="264.8" cy="182.7" r="0.6" fill="#ff2424"/><circle cx="249.1" cy="206" r="1.2" fill="#900000"/><circle cx="249.2" cy="207.3" r="1.7" fill="#a00000"/><circle cx="249.8" cy="207.8" r="1.2" fill="#d40000"/><circle cx="249.7" cy="206.8" r="0.6" fill="#ff2424"/><circle cx="235.2" cy="178.8" r="1.1" fill="#900000"/><circle cx="234.1" cy="177.9" r="1.5" fill="#a00000"/><circle cx="234.5" cy="178.5" r="1" fill="#d40000"/><circle cx="234.6" cy="177.5" r="0.5" fill="#ff2424"/><circle cx="258.5" cy="175.9" r="1.2" fill="#900000"/><circle cx="259.4" cy="174.8" r="1.7" fill="#a00000"/><circle cx="259.9" cy="175.2" r="1.1" fill="#d40000"/><circle cx="259.9" cy="174.2" r="0.6" fill="#ff2424"/><circle cx="264.7" cy="182.7" r="1.4" fill="#900000"/><circle cx="266.1" cy="182.1" r="1.9" fill="#a00000"/><circle cx="265.4" cy="181.7" r="1.3" fill="#d40000"/><circle cx="266.7" cy="181.5" r="0.7" fill="#ff2424"/><circle cx="250.3" cy="172" r="1" fill="#900000"/><circle cx="250.5" cy="170.6" r="1.3" fill="#a00000"/><circle cx="250.3" cy="170" r="0.9" fill="#d40000"/><circle cx="250.9" cy="170.1" r="0.5" fill="#ff2424"/><circle cx="233.9" cy="200.4" r="1.4" fill="#900000"/><circle cx="232.7" cy="201.3" r="1.9" fill="#a00000"/><circle cx="233.5" cy="201.5" r="1.3" fill="#d40000"/><circle cx="233.3" cy="200.7" r="0.7" fill="#ff2424"/><circle cx="266.2" cy="185.7" r="1.3" fill="#900000"/><circle cx="267.7" cy="185.4" r="1.8" fill="#a00000"/><circle cx="266.8" cy="185.5" r="1.3" fill="#d40000"/><circle cx="268.3" cy="184.8" r="0.7" fill="#ff2424"/><circle cx="253" cy="207.8" r="1.4" fill="#900000"/><circle cx="253.4" cy="209.2" r="2" fill="#a00000"/><circle cx="254.2" cy="208.8" r="1.3" fill="#d40000"/><circle cx="254" cy="208.6" r="0.7" fill="#ff2424"/><circle cx="231.8" cy="181.1" r="1.3" fill="#900000"/><circle cx="230.5" cy="180.4" r="1.7" fill="#a00000"/><circle cx="230.7" cy="179.6" r="1.2" fill="#d40000"/><circle cx="231" cy="179.8" r="0.6" fill="#ff2424"/><circle cx="239.1" cy="173.5" r="1" fill="#900000"/><circle cx="238.4" cy="172.2" r="1.4" fill="#a00000"/><circle cx="238.3" cy="171.5" r="0.9" fill="#d40000"/><circle cx="238.8" cy="171.7" r="0.5" fill="#ff2424"/><circle cx="241.9" cy="207.5" r="1.3" fill="#900000"/><circle cx="241.3" cy="208.9" r="1.8" fill="#a00000"/><circle cx="241.3" cy="208.1" r="1.2" fill="#d40000"/><circle cx="241.9" cy="208.4" r="0.7" fill="#ff2424"/><circle cx="230.2" cy="195.7" r="1.2" fill="#900000"/><circle cx="228.8" cy="196.2" r="1.6" fill="#a00000"/><circle cx="228.8" cy="196.9" r="1.1" fill="#d40000"/><circle cx="229.3" cy="195.7" r="0.6" fill="#ff2424"/><circle cx="261.7" cy="175.8" r="1.1" fill="#900000"/><circle cx="262.7" cy="174.7" r="1.5" fill="#a00000"/><circle cx="263.1" cy="175.3" r="1.1" fill="#d40000"/><circle cx="263.2" cy="174.2" r="0.6" fill="#ff2424"/><circle cx="250.6" cy="170.5" r="1.3" fill="#900000"/><circle cx="250.8" cy="169" r="1.8" fill="#a00000"/><circle cx="250.4" cy="168.3" r="1.2" fill="#d40000"/><circle cx="251.3" cy="168.4" r="0.6" fill="#ff2424"/><circle cx="235.4" cy="203.9" r="1.3" fill="#900000"/><circle cx="234.3" cy="205.1" r="1.7" fill="#a00000"/><circle cx="234.5" cy="204.3" r="1.2" fill="#d40000"/><circle cx="234.9" cy="204.5" r="0.6" fill="#ff2424"/><circle cx="236" cy="204.6" r="1.1" fill="#900000"/><circle cx="235" cy="205.8" r="1.5" fill="#a00000"/><circle cx="234.5" cy="205.4" r="1" fill="#d40000"/><circle cx="235.5" cy="205.3" r="0.5" fill="#ff2424"/><circle cx="243.8" cy="170.9" r="1.4" fill="#900000"/><circle cx="243.4" cy="169.4" r="1.9" fill="#a00000"/><circle cx="242.8" cy="168.7" r="1.3" fill="#d40000"/><circle cx="244" cy="168.8" r="0.7" fill="#ff2424"/><circle cx="253.8" cy="171.1" r="1" fill="#900000"/><circle cx="254.2" cy="169.6" r="1.4" fill="#a00000"/><circle cx="254.1" cy="170.2" r="0.9" fill="#d40000"/><circle cx="254.6" cy="169.1" r="0.5" fill="#ff2424"/><circle cx="248.4" cy="189.7" r="18.7" fill="url(#g)"/><rect x="244.6" y="199.1" width="1.8" height="1.8" fill="#ff9898"/><rect x="246.3" y="176.2" width="2" height="2" fill="#ff9898"/><rect x="232.1" y="184.8" width="2" height="2" fill="#7070ff"/><rect x="264" y="197.1" width="1.4" height="1.4" fill="#7070ff"/><rect x="260.9" y="196.1" width="2" height="2" fill="#ff9898"/><rect x="258.7" y="192.3" width="2" height="2" fill="#8a10a8"/><rect x="254.1" y="199.2" width="2" height="2" fill="#7070ff"/><rect x="231.3" y="189.1" width="2" height="2" fill="#8a10a8"/><rect x="248.9" y="173.3" width="1.4" height="1.4" fill="#7070ff"/><rect x="261.7" y="199.3" width="1.4" height="1.4" fill="#ff9898"/><rect x="233.8" y="198.1" width="1.4" height="1.4" fill="#ff9898"/><rect x="232.3" y="191.8" width="1.4" height="1.4" fill="#ff9898"/><rect x="247.7" y="172.3" width="2" height="2" fill="#ff9898"/><rect x="261.5" y="192.9" width="1.4" height="1.4" fill="#8a10a8"/><rect x="255.3" y="183.3" width="1.4" height="1.4" fill="#8a10a8"/><rect x="247.6" y="190.5" width="1.8" height="1.8" fill="#8a10a8"/><rect x="261" y="179.2" width="2" height="2" fill="#7070ff"/><rect x="244.9" y="177" width="1.8" height="1.8" fill="#ff9898"/><rect x="243.9" y="196.5" width="1.4" height="1.4" fill="#ff9898"/><rect x="261.2" y="199" width="1.8" height="1.8" fill="#ff9898"/><rect x="240.2" y="190.2" width="1.4" height="1.4" fill="#8a10a8"/><rect x="255" y="173.5" width="1.8" height="1.8" fill="#8a10a8"/><rect x="244.8" y="189.4" width="1.4" height="1.4" fill="#ff9898"/><rect x="234.8" y="195.3" width="1.8" height="1.8" fill="#ff9898"/><rect x="234.4" y="199" width="1.8" height="1.8" fill="#ff9898"/><rect x="261.6" y="181.4" width="2" height="2" fill="#7070ff"/><rect x="248.2" y="183.2" width="1.8" height="1.8" fill="#7070ff"/><rect x="256.8" y="197.1" width="1.4" height="1.4" fill="#7070ff"/><rect x="242.8" y="201.5" width="2" height="2" fill="#8a10a8"/><rect x="240.3" y="201.2" width="2" height="2" fill="#ff9898"/><rect x="255.7" y="176.3" width="1.4" height="1.4" fill="#7070ff"/><rect x="265.1" y="196.4" width="1.4" height="1.4" fill="#ff9898"/><rect x="242.8" y="205.3" width="2" height="2" fill="#7070ff"/><rect x="241.6" y="206.4" width="2" height="2" fill="#ff9898"/><rect x="244.9" y="178.2" width="1.4" height="1.4" fill="#7070ff"/><rect x="251.4" y="177.9" width="1.4" height="1.4" fill="#7070ff"/><rect x="256.7" y="188.1" width="2" height="2" fill="#7070ff"/><rect x="255.9" y="202.6" width="1.4" height="1.4" fill="#8a10a8"/><rect x="259.9" y="176.5" width="1.4" height="1.4" fill="#7070ff"/><rect x="242.8" y="187.3" width="1.8" height="1.8" fill="#7070ff"/><rect x="231.9" y="192.2" width="1.8" height="1.8" fill="#7070ff"/><rect x="255.1" y="196.6" width="1.4" height="1.4" fill="#7070ff"/><rect x="255.3" y="178.8" width="2" height="2" fill="#7070ff"/><rect x="261.5" y="184.9" width="1.8" height="1.8" fill="#ff9898"/><rect x="235.8" y="186.5" width="1.4" height="1.4" fill="#7070ff"/><rect x="263.3" y="182.3" width="1.8" height="1.8" fill="#7070ff"/><rect x="257.8" y="190.8" width="1.8" height="1.8" fill="#8a10a8"/><rect x="245.7" y="196.3" width="1.8" height="1.8" fill="#8a10a8"/><circle cx="258.3" cy="206.4" r="1.2" fill="#900000"/><circle cx="259.1" cy="207.7" r="1.6" fill="#a00000"/><circle cx="258.8" cy="207" r="1.1" fill="#d40000"/><circle cx="259.6" cy="207.2" r="0.6" fill="#ff2424"/><circle cx="258.3" cy="173" r="1.3" fill="#900000"/><circle cx="259.1" cy="171.7" r="1.8" fill="#a00000"/><circle cx="258.5" cy="172.3" r="1.2" fill="#d40000"/><circle cx="259.6" cy="171.1" r="0.7" fill="#ff2424"/><circle cx="233.4" cy="177.5" r="1.2" fill="#900000"/><circle cx="232.2" cy="176.5" r="1.6" fill="#a00000"/><circle cx="231.6" cy="176" r="1.1" fill="#d40000"/><circle cx="232.7" cy="176" r="0.6" fill="#ff2424"/><circle cx="252.6" cy="208.4" r="1.4" fill="#900000"/><circle cx="252.9" cy="210" r="1.9" fill="#a00000"/><circle cx="253.7" cy="210.4" r="1.3" fill="#d40000"/><circle cx="253.5" cy="209.4" r="0.7" fill="#ff2424"/><circle cx="266.8" cy="195.1" r="1.2" fill="#900000"/><circle cx="268.3" cy="195.5" r="1.7" fill="#a00000"/><circle cx="269" cy="195.8" r="1.1" fill="#d40000"/><circle cx="268.8" cy="195" r="0.6" fill="#ff2424"/><circle cx="267.6" cy="189.1" r="1" fill="#900000"/><circle cx="269.1" cy="189.1" r="1.3" fill="#a00000"/><circle cx="268.7" cy="189.5" r="0.9" fill="#d40000"/><circle cx="269.5" cy="188.6" r="0.5" fill="#ff2424"/><circle cx="230.7" cy="182.3" r="0.9" fill="#900000"/><circle cx="229.3" cy="181.7" r="1.3" fill="#a00000"/><circle cx="229.8" cy="181.8" r="0.9" fill="#d40000"/><circle cx="229.7" cy="181.3" r="0.5" fill="#ff2424"/><circle cx="248.6" cy="170.6" r="1.3" fill="#900000"/><circle cx="248.7" cy="169.1" r="1.8" fill="#a00000"/><circle cx="248.5" cy="169.9" r="1.2" fill="#d40000"/><circle cx="249.2" cy="168.5" r="0.7" fill="#ff2424"/><circle cx="264.9" cy="180.2" r="1.4" fill="#900000"/><circle cx="266.3" cy="179.4" r="2" fill="#a00000"/><circle cx="266.5" cy="180.3" r="1.4" fill="#d40000"/><circle cx="266.9" cy="178.8" r="0.7" fill="#ff2424"/><circle cx="232.7" cy="179.5" r="1.4" fill="#900000"/><circle cx="231.4" cy="178.7" r="1.9" fill="#a00000"/><circle cx="231.8" cy="179.5" r="1.3" fill="#d40000"/><circle cx="232" cy="178.1" r="0.7" fill="#ff2424"/><circle cx="265.4" cy="197.6" r="1.4" fill="#900000"/><circle cx="266.8" cy="198.2" r="1.9" fill="#a00000"/><circle cx="267.3" cy="197.5" r="1.3" fill="#d40000"/><circle cx="267.4" cy="197.6" r="0.7" fill="#ff2424"/><circle cx="237.2" cy="204.7" r="1.2" fill="#900000"/><circle cx="236.3" cy="205.9" r="1.7" fill="#a00000"/><circle cx="236.6" cy="206.6" r="1.1" fill="#d40000"/><circle cx="236.9" cy="205.4" r="0.6" fill="#ff2424"/><circle cx="231.8" cy="181.2" r="1" fill="#900000"/><circle cx="230.4" cy="180.5" r="1.4" fill="#a00000"/><circle cx="231" cy="180.7" r="1" fill="#d40000"/><circle cx="230.9" cy="180" r="0.5" fill="#ff2424"/><circle cx="236.4" cy="203.7" r="0.9" fill="#900000"/><circle cx="235.4" cy="204.8" r="1.3" fill="#a00000"/><circle cx="235.2" cy="204.2" r="0.9" fill="#d40000"/><circle cx="235.8" cy="204.4" r="0.5" fill="#ff2424"/><circle cx="266.2" cy="185.6" r="1.1" fill="#900000"/><circle cx="267.6" cy="185.3" r="1.6" fill="#a00000"/><circle cx="267.2" cy="185.8" r="1.1" fill="#d40000"/><circle cx="268.1" cy="184.8" r="0.6" fill="#ff2424"/><circle cx="239.3" cy="205.3" r="1.4" fill="#900000"/><circle cx="238.6" cy="206.6" r="2" fill="#a00000"/><circle cx="238.2" cy="205.8" r="1.3" fill="#d40000"/><circle cx="239.2" cy="206" r="0.7" fill="#ff2424"/><circle cx="262.4" cy="201.1" r="1.1" fill="#900000"/><circle cx="263.5" cy="202" r="1.5" fill="#a00000"/><circle cx="263.1" cy="201.5" r="1" fill="#d40000"/><circle cx="264" cy="201.6" r="0.5" fill="#ff2424"/><circle cx="248.3" cy="172" r="1" fill="#900000"/><circle cx="248.3" cy="170.6" r="1.3" fill="#a00000"/><circle cx="248.9" cy="170.5" r="0.9" fill="#d40000"/><circle cx="248.7" cy="170.2" r="0.5" fill="#ff2424"/><circle cx="232.1" cy="196.2" r="1.1" fill="#900000"/><circle cx="230.8" cy="196.7" r="1.5" fill="#a00000"/><circle cx="230.8" cy="197.4" r="1" fill="#d40000"/><circle cx="231.3" cy="196.2" r="0.5" fill="#ff2424"/><circle cx="236.3" cy="202.4" r="1" fill="#900000"/><circle cx="235.3" cy="203.4" r="1.3" fill="#a00000"/><circle cx="235" cy="202.9" r="0.9" fill="#d40000"/><circle cx="235.7" cy="203" r="0.5" fill="#ff2424"/><circle cx="242.3" cy="173.3" r="1.2" fill="#900000"/><circle cx="241.8" cy="172" r="1.6" fill="#a00000"/><circle cx="241.9" cy="172.8" r="1.1" fill="#d40000"/><circle cx="242.3" cy="171.5" r="0.6" fill="#ff2424"/><circle cx="248.8" cy="206.9" r="1" fill="#900000"/><circle cx="248.8" cy="208.3" r="1.4" fill="#a00000"/><circle cx="249.4" cy="208.4" r="1" fill="#d40000"/><circle cx="249.3" cy="207.8" r="0.5" fill="#ff2424"/><circle cx="232.5" cy="190.1" r="1.4" fill="#900000"/><circle cx="231.2" cy="190.1" r="2" fill="#a00000"/><circle cx="231.9" cy="190.7" r="1.3" fill="#d40000"/><circle cx="231.8" cy="189.5" r="0.7" fill="#ff2424"/><circle cx="254.7" cy="176" r="1.2" fill="#900000"/><circle cx="255.2" cy="174.8" r="1.7" fill="#a00000"/><circle cx="255.9" cy="174.5" r="1.1" fill="#d40000"/><circle cx="255.8" cy="174.3" r="0.6" fill="#ff2424"/><circle cx="256.9" cy="202.2" r="1.1" fill="#900000"/><circle cx="257.6" cy="203.2" r="1.5" fill="#a00000"/><circle cx="257" cy="203.5" r="1" fill="#d40000"/><circle cx="258.1" cy="202.7" r="0.5" fill="#ff2424"/><circle cx="233.9" cy="192.4" r="1.5" fill="#900000"/><circle cx="232.7" cy="192.6" r="2" fill="#a00000"/><circle cx="232.4" cy="191.7" r="1.4" fill="#d40000"/><circle cx="233.3" cy="191.9" r="0.7" fill="#ff2424"/><circle cx="262" cy="188.6" r="1.1" fill="#900000"/><circle cx="263.2" cy="188.5" r="1.5" fill="#a00000"/><circle cx="263.8" cy="188.7" r="1.1" fill="#d40000"/><circle cx="263.6" cy="188" r="0.6" fill="#ff2424"/><circle cx="241.7" cy="201.2" r="0.9" fill="#900000"/><circle cx="241.1" cy="202.1" r="1.3" fill="#a00000"/><circle cx="240.6" cy="202.5" r="0.9" fill="#d40000"/><circle cx="241.5" cy="201.7" r="0.5" fill="#ff2424"/><circle cx="236.9" cy="195.3" r="1.2" fill="#900000"/><circle cx="236" cy="195.8" r="1.7" fill="#a00000"/><circle cx="235.3" cy="195.6" r="1.1" fill="#d40000"/><circle cx="236.5" cy="195.3" r="0.6" fill="#ff2424"/><circle cx="239.8" cy="182.5" r="1.2" fill="#900000"/><circle cx="239.1" cy="181.9" r="1.7" fill="#a00000"/><circle cx="239.2" cy="181.1" r="1.1" fill="#d40000"/><circle cx="239.6" cy="181.4" r="0.6" fill="#ff2424"/><circle cx="237.3" cy="189.5" r="1.4" fill="#900000"/><circle cx="236.4" cy="189.5" r="1.9" fill="#a00000"/><circle cx="237.3" cy="189.4" r="1.3" fill="#d40000"/><circle cx="237" cy="188.9" r="0.7" fill="#ff2424"/><circle cx="251.9" cy="179.2" r="1" fill="#900000"/><circle cx="252.2" cy="178.4" r="1.3" fill="#a00000"/><circle cx="252.7" cy="178.1" r="0.9" fill="#d40000"/><circle cx="252.6" cy="178" r="0.5" fill="#ff2424"/><circle cx="246" cy="179.8" r="1.2" fill="#900000"/><circle cx="245.8" cy="179" r="1.6" fill="#a00000"/><circle cx="245.8" cy="178.3" r="1.1" fill="#d40000"/><circle cx="246.3" cy="178.5" r="0.6" fill="#ff2424"/><circle cx="246.8" cy="181.8" r="0.9" fill="#900000"/><circle cx="246.7" cy="181.2" r="1.2" fill="#a00000"/><circle cx="246.9" cy="180.6" r="0.8" fill="#d40000"/><circle cx="247.1" cy="180.8" r="0.4" fill="#ff2424"/><circle cx="242.8" cy="190.8" r="0.9" fill="#900000"/><circle cx="242.3" cy="190.9" r="1.3" fill="#a00000"/><circle cx="241.7" cy="190.8" r="0.9" fill="#d40000"/><circle cx="242.7" cy="190.5" r="0.5" fill="#ff2424"/><circle cx="250.8" cy="189.5" r="1.3" fill="#900000"/><circle cx="251" cy="189.5" r="1.7" fill="#a00000"/><circle cx="251.8" cy="189.6" r="1.2" fill="#d40000"/><circle cx="251.5" cy="189" r="0.6" fill="#ff2424"/><circle cx="60.9" cy="233.2" r="2.6" fill="#900000"/><circle cx="60.8" cy="233.1" r="3.5" fill="#a00000"/><circle cx="60.1" cy="231.7" r="2.4" fill="#d40000"/><circle cx="61.9" cy="232" r="1.3" fill="#ff2424"/><circle cx="59.1" cy="239.2" r="2.6" fill="#900000"/><circle cx="58.8" cy="239.6" r="3.6" fill="#a00000"/><circle cx="57.2" cy="239.5" r="2.5" fill="#d40000"/><circle cx="60" cy="238.4" r="1.3" fill="#ff2424"/><circle cx="67.8" cy="239.5" r="1.9" fill="#900000"/><circle cx="68.3" cy="240" r="2.6" fill="#a00000"/><circle cx="67.2" cy="240.6" r="1.8" fill="#d40000"/><circle cx="69.1" cy="239.1" r="1" fill="#ff2424"/><circle cx="67.3" cy="241.8" r="2.4" fill="#900000"/><circle cx="67.8" cy="242.5" r="3.3" fill="#a00000"/><circle cx="66.6" cy="243.3" r="2.2" fill="#d40000"/><circle cx="68.8" cy="241.4" r="1.2" fill="#ff2424"/><circle cx="52.5" cy="231.5" r="2.7" fill="#900000"/><circle cx="51.7" cy="231.2" r="3.7" fill="#a00000"/><circle cx="51.5" cy="232.9" r="2.5" fill="#d40000"/><circle cx="52.9" cy="230.1" r="1.3" fill="#ff2424"/><circle cx="72.2" cy="242.9" r="2.7" fill="#900000"/><circle cx="73.1" cy="243.6" r="3.7" fill="#a00000"/><circle cx="71.5" cy="243" r="2.5" fill="#d40000"/><circle cx="74.2" cy="242.4" r="1.3" fill="#ff2424"/><circle cx="76.7" cy="239.4" r="1.8" fill="#900000"/><circle cx="77.9" cy="239.9" r="2.4" fill="#a00000"/><circle cx="77.2" cy="240.8" r="1.6" fill="#d40000"/><circle cx="78.6" cy="239.1" r="0.9" fill="#ff2424"/><circle cx="64.3" cy="217.6" r="1.6" fill="#900000"/><circle cx="64.5" cy="216.3" r="2.3" fill="#a00000"/><circle cx="63.5" cy="216" r="1.5" fill="#d40000"/><circle cx="65.2" cy="215.6" r="0.8" fill="#ff2424"/><circle cx="61.6" cy="217.2" r="1.7" fill="#900000"/><circle cx="61.6" cy="215.8" r="2.4" fill="#a00000"/><circle cx="60.7" cy="215.2" r="1.6" fill="#d40000"/><circle cx="62.3" cy="215.1" r="0.9" fill="#ff2424"/><circle cx="55.6" cy="250.2" r="1.6" fill="#900000"/><circle cx="55.1" cy="251.5" r="2.3" fill="#a00000"/><circle cx="55.7" cy="250.7" r="1.5" fill="#d40000"/><circle cx="55.8" cy="250.8" r="0.8" fill="#ff2424"/><circle cx="45.7" cy="226.1" r="1.8" fill="#900000"/><circle cx="44.3" cy="225.5" r="2.5" fill="#a00000"/><circle cx="43.3" cy="225.9" r="1.7" fill="#d40000"/><circle cx="45.2" cy="224.7" r="0.9" fill="#ff2424"/><circle cx="80.6" cy="233.2" r="1.8" fill="#900000"/><circle cx="82.2" cy="233.1" r="2.5" fill="#a00000"/><circle cx="81.2" cy="232.6" r="1.7" fill="#d40000"/><circle cx="82.9" cy="232.3" r="0.9" fill="#ff2424"/><circle cx="44.9" cy="224.2" r="1.8" fill="#900000"/><circle cx="43.5" cy="223.4" r="2.4" fill="#a00000"/><circle cx="42.6" cy="224.1" r="1.7" fill="#d40000"/><circle cx="44.3" cy="222.7" r="0.9" fill="#ff2424"/><circle cx="77.5" cy="220" r="1.9" fill="#900000"/><circle cx="78.8" cy="218.9" r="2.7" fill="#a00000"/><circle cx="80" cy="219.1" r="1.8" fill="#d40000"/><circle cx="79.6" cy="218" r="1" fill="#ff2424"/><circle cx="44.9" cy="220.2" r="2.5" fill="#900000"/><circle cx="43.6" cy="219.1" r="3.5" fill="#a00000"/><circle cx="42.5" cy="220.2" r="2.4" fill="#d40000"/><circle cx="44.7" cy="218" r="1.3" fill="#ff2424"/><circle cx="83.7" cy="242.6" r="1.8" fill="#900000"/><circle cx="85.4" cy="243.3" r="2.5" fill="#a00000"/><circle cx="84.3" cy="243.5" r="1.7" fill="#d40000"/><circle cx="86.2" cy="242.5" r="0.9" fill="#ff2424"/><circle cx="41" cy="222.9" r="2" fill="#900000"/><circle cx="39.3" cy="222" r="2.8" fill="#a00000"/><circle cx="40" cy="223.1" r="1.9" fill="#d40000"/><circle cx="40.2" cy="221.1" r="1" fill="#ff2424"/><circle cx="59.4" cy="257.8" r="2" fill="#900000"/><circle cx="59.1" cy="259.7" r="2.8" fill="#a00000"/><circle cx="58.5" cy="260.8" r="1.9" fill="#d40000"/><circle cx="60" cy="258.8" r="1" fill="#ff2424"/><circle cx="83.3" cy="220.5" r="2" fill="#900000"/><circle cx="85.1" cy="219.4" r="2.8" fill="#a00000"/><circle cx="85" cy="218.1" r="1.9" fill="#d40000"/><circle cx="85.9" cy="218.5" r="1" fill="#ff2424"/><circle cx="42" cy="250.1" r="1.7" fill="#900000"/><circle cx="40.4" cy="251.4" r="2.4" fill="#a00000"/><circle cx="41.2" cy="252.1" r="1.6" fill="#d40000"/><circle cx="41.2" cy="250.7" r="0.9" fill="#ff2424"/><circle cx="68.2" cy="259.4" r="2.5" fill="#900000"/><circle cx="68.7" cy="261.4" r="3.5" fill="#a00000"/><circle cx="67.7" cy="260.2" r="2.4" fill="#d40000"/><circle cx="69.8" cy="260.3" r="1.3" fill="#ff2424"/><circle cx="55.7" cy="208.1" r="2" fill="#900000"/><circle cx="55.2" cy="206" r="2.7" fill="#a00000"/><circle cx="54.5" cy="205" r="1.9" fill="#d40000"/><circle cx="56.1" cy="205.2" r="1" fill="#ff2424"/><circle cx="60.3" cy="207.4" r="2.6" fill="#900000"/><circle cx="60.2" cy="205.3" r="3.6" fill="#a00000"/><circle cx="59.9" cy="203.6" r="2.4" fill="#d40000"/><circle cx="61.3" cy="204.1" r="1.3" fill="#ff2424"/><circle cx="42.2" cy="215.8" r="1.6" fill="#900000"/><circle cx="40.6" cy="214.3" r="2.2" fill="#a00000"/><circle cx="41.6" cy="214.7" r="1.5" fill="#d40000"/><circle cx="41.3" cy="213.6" r="0.8" fill="#ff2424"/><circle cx="53" cy="259.6" r="2.4" fill="#900000"/><circle cx="52.3" cy="261.7" r="3.3" fill="#a00000"/><circle cx="53.1" cy="262.9" r="2.2" fill="#d40000"/><circle cx="53.3" cy="260.6" r="1.2" fill="#ff2424"/><circle cx="42.2" cy="214.5" r="2.1" fill="#900000"/><circle cx="40.6" cy="213" r="2.8" fill="#a00000"/><circle cx="41.9" cy="212.7" r="1.9" fill="#d40000"/><circle cx="41.5" cy="212.1" r="1" fill="#ff2424"/><circle cx="85.7" cy="219.4" r="1.9" fill="#900000"/><circle cx="87.6" cy="218.2" r="2.6" fill="#a00000"/><circle cx="88.5" cy="219" r="1.8" fill="#d40000"/><circle cx="88.4" cy="217.4" r="0.9" fill="#ff2424"/><circle cx="36.6" cy="246.1" r="2.4" fill="#900000"/><circle cx="34.5" cy="247.1" r="3.3" fill="#a00000"/><circle cx="34.9" cy="245.6" r="2.3" fill="#d40000"/><circle cx="35.6" cy="246" r="1.2" fill="#ff2424"/><circle cx="36" cy="245.1" r="1.9" fill="#900000"/><circle cx="33.9" cy="246" r="2.5" fill="#a00000"/><circle cx="34.1" cy="247.2" r="1.7" fill="#d40000"/><circle cx="34.8" cy="245.2" r="0.9" fill="#ff2424"/><circle cx="58.9" cy="263.3" r="2.3" fill="#900000"/><circle cx="58.6" cy="265.6" r="3.2" fill="#a00000"/><circle cx="58" cy="266.9" r="2.2" fill="#d40000"/><circle cx="59.6" cy="264.6" r="1.2" fill="#ff2424"/><circle cx="91.7" cy="231.8" r="2.3" fill="#900000"/><circle cx="94.1" cy="231.6" r="3.2" fill="#a00000"/><circle cx="93" cy="232.5" r="2.2" fill="#d40000"/><circle cx="95.1" cy="230.6" r="1.1" fill="#ff2424"/><circle cx="73.2" cy="262.1" r="1.6" fill="#900000"/><circle cx="74.1" cy="264.4" r="2.2" fill="#a00000"/><circle cx="73.2" cy="264.9" r="1.5" fill="#d40000"/><circle cx="74.8" cy="263.7" r="0.8" fill="#ff2424"/><circle cx="87.9" cy="249.8" r="2.4" fill="#900000"/><circle cx="90" cy="251.1" r="3.4" fill="#a00000"/><circle cx="89.1" cy="252.3" r="2.3" fill="#d40000"/><circle cx="91.1" cy="250" r="1.2" fill="#ff2424"/><circle cx="31.8" cy="228.9" r="2.5" fill="#900000"/><circle cx="29.4" cy="228.5" r="3.5" fill="#a00000"/><circle cx="29.4" cy="227" r="2.4" fill="#d40000"/><circle cx="30.5" cy="227.4" r="1.3" fill="#ff2424"/><circle cx="74.5" cy="262" r="2" fill="#900000"/><circle cx="75.5" cy="264.3" r="2.7" fill="#a00000"/><circle cx="76.7" cy="264.4" r="1.9" fill="#d40000"/><circle cx="76.4" cy="263.4" r="1" fill="#ff2424"/><circle cx="69" cy="263.9" r="2.6" fill="#900000"/><circle cx="69.6" cy="266.4" r="3.6" fill="#a00000"/><circle cx="70.5" cy="265" r="2.4" fill="#d40000"/><circle cx="70.7" cy="265.2" r="1.3" fill="#ff2424"/><circle cx="30.8" cy="235" r="1.7" fill="#900000"/><circle cx="28.2" cy="235" r="2.3" fill="#a00000"/><circle cx="29.3" cy="235.2" r="1.6" fill="#d40000"/><circle cx="29" cy="234.3" r="0.8" fill="#ff2424"/><circle cx="69.6" cy="203.4" r="2.4" fill="#900000"/><circle cx="70.2" cy="201" r="3.4" fill="#a00000"/><circle cx="68.8" cy="200.4" r="2.3" fill="#d40000"/><circle cx="71.3" cy="199.9" r="1.2" fill="#ff2424"/><circle cx="38.9" cy="255.7" r="2.3" fill="#900000"/><circle cx="37" cy="257.5" r="3.2" fill="#a00000"/><circle cx="35.8" cy="258.3" r="2.2" fill="#d40000"/><circle cx="38" cy="256.5" r="1.2" fill="#ff2424"/><circle cx="94" cy="230" r="1.8" fill="#900000"/><circle cx="96.6" cy="229.7" r="2.4" fill="#a00000"/><circle cx="97.1" cy="228.7" r="1.7" fill="#d40000"/><circle cx="97.4" cy="228.9" r="0.9" fill="#ff2424"/><circle cx="45.1" cy="261.8" r="2" fill="#900000"/><circle cx="43.7" cy="264.1" r="2.7" fill="#a00000"/><circle cx="43.4" cy="265.2" r="1.8" fill="#d40000"/><circle cx="44.6" cy="263.2" r="1" fill="#ff2424"/><circle cx="66.3" cy="266.4" r="2.6" fill="#900000"/><circle cx="66.7" cy="269.1" r="3.6" fill="#a00000"/><circle cx="65.4" cy="270.2" r="2.5" fill="#d40000"/><circle cx="67.8" cy="267.9" r="1.3" fill="#ff2424"/><circle cx="34.8" cy="252.3" r="1.9" fill="#900000"/><circle cx="32.6" cy="253.8" r="2.6" fill="#a00000"/><circle cx="31.4" cy="253.5" r="1.7" fill="#d40000"/><circle cx="33.4" cy="253" r="0.9" fill="#ff2424"/><circle cx="92.1" cy="220.8" r="2" fill="#900000"/><circle cx="94.5" cy="219.7" r="2.8" fill="#a00000"/><circle cx="95" cy="220.9" r="1.9" fill="#d40000"/><circle cx="95.4" cy="218.9" r="1" fill="#ff2424"/><circle cx="72.5" cy="265.2" r="1.8" fill="#900000"/><circle cx="73.3" cy="267.7" r="2.5" fill="#a00000"/><circle cx="73.8" cy="266.7" r="1.7" fill="#d40000"/><circle cx="74.1" cy="266.9" r="0.9" fill="#ff2424"/><circle cx="30.7" cy="223.8" r="2" fill="#900000"/><circle cx="28.2" cy="223" r="2.8" fill="#a00000"/><circle cx="27.8" cy="224.2" r="1.9" fill="#d40000"/><circle cx="29.1" cy="222.1" r="1" fill="#ff2424"/><circle cx="29" cy="235.1" r="2.5" fill="#900000"/><circle cx="26.4" cy="235.1" r="3.4" fill="#a00000"/><circle cx="26.8" cy="236.6" r="2.3" fill="#d40000"/><circle cx="27.5" cy="234.1" r="1.3" fill="#ff2424"/><circle cx="94.5" cy="227.8" r="1.6" fill="#900000"/><circle cx="97.2" cy="227.3" r="2.2" fill="#a00000"/><circle cx="98.1" cy="226.9" r="1.5" fill="#d40000"/><circle cx="97.9" cy="226.6" r="0.8" fill="#ff2424"/><circle cx="94.8" cy="240.3" r="2.6" fill="#900000"/><circle cx="97.4" cy="240.8" r="3.5" fill="#a00000"/><circle cx="98.1" cy="242.2" r="2.4" fill="#d40000"/><circle cx="98.6" cy="239.7" r="1.3" fill="#ff2424"/><circle cx="30.7" cy="222" r="2" fill="#900000"/><circle cx="28.2" cy="221.1" r="2.7" fill="#a00000"/><circle cx="28.1" cy="219.8" r="1.9" fill="#d40000"/><circle cx="29.1" cy="220.2" r="1" fill="#ff2424"/><circle cx="80.3" cy="205.5" r="2" fill="#900000"/><circle cx="81.8" cy="203.2" r="2.7" fill="#a00000"/><circle cx="81.5" cy="204.4" r="1.8" fill="#d40000"/><circle cx="82.6" cy="202.3" r="1" fill="#ff2424"/><circle cx="88.7" cy="213.2" r="1.8" fill="#900000"/><circle cx="90.9" cy="211.5" r="2.5" fill="#a00000"/><circle cx="91.9" cy="212" r="1.7" fill="#d40000"/><circle cx="91.7" cy="210.7" r="0.9" fill="#ff2424"/><circle cx="65.1" cy="200.2" r="2.1" fill="#900000"/><circle cx="65.4" cy="197.5" r="2.8" fill="#a00000"/><circle cx="64.4" cy="198.4" r="1.9" fill="#d40000"/><circle cx="66.3" cy="196.6" r="1" fill="#ff2424"/><circle cx="62.6" cy="200" r="2.5" fill="#900000"/><circle cx="62.7" cy="197.3" r="3.5" fill="#a00000"/><circle cx="61.7" cy="196.1" r="2.4" fill="#d40000"/><circle cx="63.8" cy="196.2" r="1.3" fill="#ff2424"/><circle cx="66" cy="267.7" r="2" fill="#900000"/><circle cx="66.4" cy="270.5" r="2.8" fill="#a00000"/><circle cx="67.5" cy="271" r="1.9" fill="#d40000"/><circle cx="67.3" cy="269.6" r="1" fill="#ff2424"/><circle cx="95.8" cy="230.3" r="2" fill="#900000"/><circle cx="98.5" cy="230" r="2.7" fill="#a00000"/><circle cx="99.7" cy="229.7" r="1.8" fill="#d40000"/><circle cx="99.4" cy="229.1" r="1" fill="#ff2424"/><circle cx="30.1" cy="246.1" r="2.5" fill="#900000"/><circle cx="27.5" cy="247.1" r="3.4" fill="#a00000"/><circle cx="29.1" cy="247.4" r="2.3" fill="#d40000"/><circle cx="28.6" cy="246" r="1.3" fill="#ff2424"/><circle cx="77.5" cy="203.6" r="1.8" fill="#900000"/><circle cx="78.8" cy="201.1" r="2.5" fill="#a00000"/><circle cx="77.7" cy="200.9" r="1.7" fill="#d40000"/><circle cx="79.6" cy="200.3" r="0.9" fill="#ff2424"/><circle cx="54.8" cy="200.6" r="2.6" fill="#900000"/><circle cx="54.3" cy="197.9" r="3.6" fill="#a00000"/><circle cx="55.4" cy="199.1" r="2.4" fill="#d40000"/><circle cx="55.4" cy="196.8" r="1.3" fill="#ff2424"/><circle cx="80.7" cy="205.1" r="2.1" fill="#900000"/><circle cx="82.3" cy="202.8" r="2.9" fill="#a00000"/><circle cx="81.5" cy="201.7" r="2" fill="#d40000"/><circle cx="83.2" cy="201.8" r="1.1" fill="#ff2424"/><circle cx="41.7" cy="206" r="1.7" fill="#900000"/><circle cx="40.1" cy="203.7" r="2.3" fill="#a00000"/><circle cx="39.7" cy="204.6" r="1.6" fill="#d40000"/><circle cx="40.8" cy="202.9" r="0.8" fill="#ff2424"/><circle cx="80.4" cy="263.3" r="2.4" fill="#900000"/><circle cx="81.9" cy="265.7" r="3.3" fill="#a00000"/><circle cx="83.4" cy="265.2" r="2.3" fill="#d40000"/><circle cx="83" cy="264.6" r="1.2" fill="#ff2424"/><circle cx="28.4" cy="225.3" r="1.7" fill="#900000"/><circle cx="25.7" cy="224.6" r="2.4" fill="#a00000"/><circle cx="26.8" cy="224.6" r="1.6" fill="#d40000"/><circle cx="26.5" cy="223.9" r="0.9" fill="#ff2424"/><circle cx="96.7" cy="232.7" r="1.9" fill="#900000"/><circle cx="99.5" cy="232.6" r="2.7" fill="#a00000"/><circle cx="98.4" cy="233.2" r="1.8" fill="#d40000"/><circle cx="100.3" cy="231.8" r="1" fill="#ff2424"/><circle cx="68.3" cy="268.2" r="1.8" fill="#900000"/><circle cx="68.8" cy="270.9" r="2.5" fill="#a00000"/><circle cx="69.8" cy="270.4" r="1.7" fill="#d40000"/><circle cx="69.6" cy="270.1" r="0.9" fill="#ff2424"/><circle cx="68.4" cy="268.2" r="2" fill="#900000"/><circle cx="68.9" cy="270.9" r="2.8" fill="#a00000"/><circle cx="68.8" cy="269.7" r="1.9" fill="#d40000"/><circle cx="69.8" cy="270.1" r="1" fill="#ff2424"/><circle cx="29.1" cy="222.7" r="2.2" fill="#900000"/><circle cx="26.4" cy="221.8" r="3" fill="#a00000"/><circle cx="25.3" cy="222.5" r="2.1" fill="#d40000"/><circle cx="27.4" cy="220.8" r="1.1" fill="#ff2424"/><circle cx="88.6" cy="211.6" r="2" fill="#900000"/><circle cx="90.8" cy="209.8" r="2.7" fill="#a00000"/><circle cx="92" cy="209.5" r="1.9" fill="#d40000"/><circle cx="91.6" cy="208.9" r="1" fill="#ff2424"/><circle cx="49.2" cy="266.4" r="2.3" fill="#900000"/><circle cx="48.2" cy="269" r="3.2" fill="#a00000"/><circle cx="49" cy="267.8" r="2.2" fill="#d40000"/><circle cx="49.2" cy="268" r="1.2" fill="#ff2424"/><circle cx="27.2" cy="234.1" r="1.8" fill="#900000"/><circle cx="24.4" cy="234.1" r="2.4" fill="#a00000"/><circle cx="23.3" cy="234" r="1.7" fill="#d40000"/><circle cx="25.1" cy="233.3" r="0.9" fill="#ff2424"/><circle cx="62" cy="234" r="33.6" fill="url(#g)"/><rect x="63.2" y="253.6" width="1.8" height="1.8" fill="#8a10a8"/><rect x="85.9" y="226.1" width="1.4" height="1.4" fill="#ff9898"/><rect x="77.8" y="206.1" width="1.4" height="1.4" fill="#ff9898"/><rect x="70" y="241.7" width="1.8" height="1.8" fill="#ff9898"/><rect x="74.3" y="247.3" width="1.8" height="1.8" fill="#8a10a8"/><rect x="45.4" y="217" width="1.8" height="1.8" fill="#7070ff"/><rect x="85.1" y="253.2" width="2" height="2" fill="#7070ff"/><rect x="69.3" y="209" width="1.8" height="1.8" fill="#7070ff"/><rect x="31.4" y="229.4" width="2" height="2" fill="#7070ff"/><rect x="44.9" y="234.7" width="1.4" height="1.4" fill="#8a10a8"/><rect x="41.6" y="254.5" width="1.4" height="1.4" fill="#7070ff"/><rect x="83.1" y="248.6" width="1.8" height="1.8" fill="#ff9898"/><rect x="74" y="260.8" width="1.8" height="1.8" fill="#ff9898"/><rect x="63.9" y="256.2" width="2" height="2" fill="#7070ff"/><rect x="57.4" y="224.9" width="1.4" height="1.4" fill="#ff9898"/><rect x="75.4" y="248.6" width="1.4" height="1.4" fill="#7070ff"/><rect x="30.1" y="228.8" width="2" height="2" fill="#7070ff"/><rect x="57.2" y="208.2" width="1.4" height="1.4" fill="#ff9898"/><rect x="78.7" y="238.7" width="1.8" height="1.8" fill="#8a10a8"/><rect x="57.8" y="213.7" width="1.4" height="1.4" fill="#8a10a8"/><rect x="77.3" y="213.5" width="1.8" height="1.8" fill="#ff9898"/><rect x="58.7" y="254" width="2" height="2" fill="#ff9898"/><rect x="70.7" y="220.8" width="1.4" height="1.4" fill="#7070ff"/><rect x="56.6" y="243.2" width="1.4" height="1.4" fill="#8a10a8"/><rect x="33" y="232.5" width="1.8" height="1.8" fill="#8a10a8"/><rect x="32" y="241.6" width="1.8" height="1.8" fill="#ff9898"/><rect x="55.2" y="238.6" width="1.8" height="1.8" fill="#7070ff"/><rect x="56.4" y="259.3" width="1.4" height="1.4" fill="#7070ff"/><rect x="79.4" y="250.8" width="1.4" height="1.4" fill="#ff9898"/><rect x="52.2" y="250.8" width="1.8" height="1.8" fill="#7070ff"/><rect x="71.6" y="226.8" width="1.4" height="1.4" fill="#ff9898"/><rect x="54.7" y="223.1" width="2" height="2" fill="#8a10a8"/><rect x="73.3" y="215" width="1.4" height="1.4" fill="#7070ff"/><rect x="60" y="230.2" width="2" height="2" fill="#7070ff"/><rect x="83.8" y="221.1" width="1.4" height="1.4" fill="#7070ff"/><rect x="37.5" y="215.6" width="1.4" height="1.4" fill="#ff9898"/><rect x="62.1" y="228.8" width="2" height="2" fill="#8a10a8"/><rect x="52.8" y="240.6" width="1.8" height="1.8" fill="#8a10a8"/><rect x="87.8" y="216.8" width="1.4" height="1.4" fill="#8a10a8"/><rect x="32.5" y="240.9" width="1.8" height="1.8" fill="#ff9898"/><rect x="63.1" y="231.5" width="1.8" height="1.8" fill="#7070ff"/><rect x="33.2" y="223.8" width="2" height="2" fill="#7070ff"/><rect x="59.5" y="232" width="2" height="2" fill="#8a10a8"/><rect x="67.7" y="249.2" width="1.4" height="1.4" fill="#7070ff"/><rect x="71.3" y="218.7" width="2" height="2" fill="#8a10a8"/><rect x="38.1" y="236.6" width="1.8" height="1.8" fill="#ff9898"/><rect x="83.1" y="254.2" width="1.8" height="1.8" fill="#ff9898"/><rect x="44.1" y="256.3" width="2" height="2" fill="#ff9898"/><rect x="73" y="218.3" width="1.8" height="1.8" fill="#7070ff"/><rect x="46.3" y="260.2" width="1.4" height="1.4" fill="#ff9898"/><rect x="32.2" y="239.2" width="1.4" height="1.4" fill="#ff9898"/><rect x="33.3" y="227.4" width="2" height="2" fill="#ff9898"/><rect x="43" y="237.6" width="2" height="2" fill="#7070ff"/><rect x="78.4" y="210.3" width="1.4" height="1.4" fill="#7070ff"/><rect x="71.7" y="227.5" width="1.4" height="1.4" fill="#ff9898"/><rect x="49.9" y="261.4" width="2" height="2" fill="#7070ff"/><rect x="65.3" y="227.9" width="2" height="2" fill="#7070ff"/><rect x="69" y="251.6" width="1.4" height="1.4" fill="#7070ff"/><rect x="82.1" y="240.9" width="1.8" height="1.8" fill="#7070ff"/><rect x="52.4" y="206.2" width="2" height="2" fill="#8a10a8"/><rect x="37" y="238.1" width="2" height="2" fill="#7070ff"/><rect x="57.5" y="263.4" width="1.4" height="1.4" fill="#7070ff"/><rect x="83.2" y="253.9" width="1.4" height="1.4" fill="#8a10a8"/><rect x="47.1" y="253.8" width="2" height="2" fill="#8a10a8"/><rect x="67.5" y="240.8" width="1.8" height="1.8" fill="#8a10a8"/><rect x="59.3" y="222.5" width="1.8" height="1.8" fill="#7070ff"/><rect x="62.2" y="246.8" width="2" height="2" fill="#ff9898"/><rect x="86.3" y="253.8" width="1.4" height="1.4" fill="#7070ff"/><rect x="64.4" y="248.4" width="2" height="2" fill="#ff9898"/><rect x="52.1" y="263.1" width="1.8" height="1.8" fill="#7070ff"/><rect x="88.1" y="244.3" width="1.8" height="1.8" fill="#7070ff"/><rect x="77.8" y="239.1" width="1.4" height="1.4" fill="#ff9898"/><rect x="37" y="233.9" width="1.8" height="1.8" fill="#7070ff"/><rect x="60.8" y="255.9" width="1.8" height="1.8" fill="#ff9898"/><rect x="71.5" y="256.4" width="1.4" height="1.4" fill="#ff9898"/><rect x="52.1" y="229.5" width="1.8" height="1.8" fill="#ff9898"/><rect x="88" y="234" width="1.4" height="1.4" fill="#7070ff"/><rect x="76.8" y="231.1" width="2" height="2" fill="#ff9898"/><rect x="35.6" y="215.7" width="2" height="2" fill="#ff9898"/><rect x="86.3" y="227.7" width="1.8" height="1.8" fill="#ff9898"/><rect x="74.2" y="252.7" width="2" height="2" fill="#ff9898"/><rect x="76.4" y="213.3" width="2" height="2" fill="#7070ff"/><rect x="84.7" y="212.5" width="1.4" height="1.4" fill="#8a10a8"/><rect x="82" y="249.5" width="1.8" height="1.8" fill="#7070ff"/><rect x="69.5" y="225.1" width="1.8" height="1.8" fill="#7070ff"/><rect x="94.3" y="234.9" width="2" height="2" fill="#ff9898"/><rect x="37" y="216.7" width="2" height="2" fill="#7070ff"/><circle cx="65.1" cy="199.3" r="2" fill="#900000"/><circle cx="65.3" cy="196.5" r="2.7" fill="#a00000"/><circle cx="64.6" cy="195.5" r="1.8" fill="#d40000"/><circle cx="66.2" cy="195.7" r="1" fill="#ff2424"/><circle cx="60.3" cy="199.2" r="2" fill="#900000"/><circle cx="60.2" cy="196.4" r="2.7" fill="#a00000"/><circle cx="60.1" cy="195.2" r="1.9" fill="#d40000"/><circle cx="61.1" cy="195.5" r="1" fill="#ff2424"/><circle cx="32.2" cy="216" r="2" fill="#900000"/><circle cx="29.8" cy="214.5" r="2.8" fill="#a00000"/><circle cx="28.7" cy="213.9" r="1.9" fill="#d40000"/><circle cx="30.7" cy="213.6" r="1" fill="#ff2424"/><circle cx="69.9" cy="267.9" r="2.2" fill="#900000"/><circle cx="70.5" cy="270.6" r="3" fill="#a00000"/><circle cx="69.5" cy="271.6" r="2.1" fill="#d40000"/><circle cx="71.5" cy="269.7" r="1.1" fill="#ff2424"/><circle cx="89.1" cy="212.2" r="2.7" fill="#900000"/><circle cx="91.3" cy="210.5" r="3.7" fill="#a00000"/><circle cx="92.1" cy="209" r="2.5" fill="#d40000"/><circle cx="92.5" cy="209.3" r="1.3" fill="#ff2424"/><circle cx="96.7" cy="232.2" r="1.9" fill="#900000"/><circle cx="99.5" cy="232" r="2.6" fill="#a00000"/><circle cx="98.3" cy="231.7" r="1.8" fill="#d40000"/><circle cx="100.3" cy="231.2" r="1" fill="#ff2424"/><circle cx="30.4" cy="248.3" r="2.3" fill="#900000"/><circle cx="27.8" cy="249.5" r="3.1" fill="#a00000"/><circle cx="28" cy="250.9" r="2.1" fill="#d40000"/><circle cx="28.8" cy="248.5" r="1.1" fill="#ff2424"/><circle cx="50.5" cy="266.7" r="1.8" fill="#900000"/><circle cx="49.6" cy="269.3" r="2.5" fill="#a00000"/><circle cx="48.6" cy="269.9" r="1.7" fill="#d40000"/><circle cx="50.4" cy="268.5" r="0.9" fill="#ff2424"/><circle cx="88.6" cy="256.1" r="2.2" fill="#900000"/><circle cx="90.8" cy="257.9" r="3.1" fill="#a00000"/><circle cx="91.5" cy="256.7" r="2.1" fill="#d40000"/><circle cx="91.8" cy="256.9" r="1.1" fill="#ff2424"/><circle cx="28.4" cy="241.9" r="2.2" fill="#900000"/><circle cx="25.6" cy="242.5" r="3" fill="#a00000"/><circle cx="24.3" cy="242.5" r="2.1" fill="#d40000"/><circle cx="26.6" cy="241.6" r="1.1" fill="#ff2424"/><circle cx="95.9" cy="228" r="2.1" fill="#900000"/><circle cx="98.6" cy="227.5" r="2.9" fill="#a00000"/><circle cx="99.9" cy="227.8" r="2" fill="#d40000"/><circle cx="99.6" cy="226.6" r="1.1" fill="#ff2424"/><circle cx="48.4" cy="265.5" r="1.9" fill="#900000"/><circle cx="47.3" cy="268.1" r="2.7" fill="#a00000"/><circle cx="47.4" cy="266.9" r="1.8" fill="#d40000"/><circle cx="48.1" cy="267.2" r="1" fill="#ff2424"/><circle cx="87.4" cy="211" r="2.3" fill="#900000"/><circle cx="89.5" cy="209.1" r="3.2" fill="#a00000"/><circle cx="90.8" cy="209.9" r="2.2" fill="#d40000"/><circle cx="90.5" cy="208.1" r="1.2" fill="#ff2424"/><circle cx="36.7" cy="211" r="2.6" fill="#900000"/><circle cx="34.6" cy="209.1" r="3.5" fill="#a00000"/><circle cx="35.8" cy="208" r="2.4" fill="#d40000"/><circle cx="35.8" cy="208" r="1.3" fill="#ff2424"/><circle cx="92.8" cy="248.8" r="2.5" fill="#900000"/><circle cx="95.3" cy="250" r="3.5" fill="#a00000"/><circle cx="95.4" cy="248.4" r="2.4" fill="#d40000"/><circle cx="96.4" cy="248.9" r="1.3" fill="#ff2424"/><circle cx="28.5" cy="240.7" r="2" fill="#900000"/><circle cx="25.8" cy="241.3" r="2.7" fill="#a00000"/><circle cx="25.7" cy="242.5" r="1.8" fill="#d40000"/><circle cx="26.6" cy="240.4" r="1" fill="#ff2424"/><circle cx="76.8" cy="264.7" r="2" fill="#900000"/><circle cx="78.1" cy="267.2" r="2.8" fill="#a00000"/><circle cx="77" cy="267.8" r="1.9" fill="#d40000"/><circle cx="78.9" cy="266.3" r="1" fill="#ff2424"/><circle cx="94.8" cy="224.5" r="1.7" fill="#900000"/><circle cx="97.4" cy="223.8" r="2.3" fill="#a00000"/><circle cx="97.8" cy="224.8" r="1.6" fill="#d40000"/><circle cx="98.2" cy="223.1" r="0.8" fill="#ff2424"/><circle cx="47.1" cy="264.5" r="2.4" fill="#900000"/><circle cx="45.9" cy="267" r="3.2" fill="#a00000"/><circle cx="46.7" cy="265.8" r="2.2" fill="#d40000"/><circle cx="46.9" cy="266" r="1.2" fill="#ff2424"/><circle cx="76" cy="203.1" r="1.7" fill="#900000"/><circle cx="77.2" cy="200.6" r="2.3" fill="#a00000"/><circle cx="77.7" cy="201.6" r="1.6" fill="#d40000"/><circle cx="77.9" cy="199.9" r="0.8" fill="#ff2424"/><circle cx="95.2" cy="240.4" r="1.9" fill="#900000"/><circle cx="97.9" cy="241" r="2.6" fill="#a00000"/><circle cx="98.4" cy="239.9" r="1.8" fill="#d40000"/><circle cx="98.7" cy="240.1" r="0.9" fill="#ff2424"/><circle cx="33" cy="216.8" r="2.1" fill="#900000"/><circle cx="30.6" cy="215.4" r="2.9" fill="#a00000"/><circle cx="30.3" cy="216.7" r="2" fill="#d40000"/><circle cx="31.5" cy="214.5" r="1.1" fill="#ff2424"/><circle cx="76.4" cy="264.4" r="2.3" fill="#900000"/><circle cx="77.5" cy="266.8" r="3.1" fill="#a00000"/><circle cx="77.4" cy="265.4" r="2.1" fill="#d40000"/><circle cx="78.5" cy="265.8" r="1.1" fill="#ff2424"/><circle cx="58.7" cy="200.7" r="2.2" fill="#900000"/><circle cx="58.4" cy="198" r="3.1" fill="#a00000"/><circle cx="57.3" cy="197.2" r="2.1" fill="#d40000"/><circle cx="59.4" cy="197" r="1.1" fill="#ff2424"/><circle cx="57.9" cy="267.2" r="2.5" fill="#900000"/><circle cx="57.6" cy="269.9" r="3.4" fill="#a00000"/><circle cx="56.1" cy="269.4" r="2.3" fill="#d40000"/><circle cx="58.7" cy="268.8" r="1.2" fill="#ff2424"/><circle cx="91.2" cy="217.9" r="2.3" fill="#900000"/><circle cx="93.6" cy="216.6" r="3.2" fill="#a00000"/><circle cx="92.3" cy="217.3" r="2.2" fill="#d40000"/><circle cx="94.6" cy="215.6" r="1.1" fill="#ff2424"/><circle cx="34.1" cy="216" r="2.5" fill="#900000"/><circle cx="31.8" cy="214.5" r="3.5" fill="#a00000"/><circle cx="33.3" cy="213.8" r="2.4" fill="#d40000"/><circle cx="32.9" cy="213.4" r="1.3" fill="#ff2424"/><circle cx="95.1" cy="234.7" r="2.2" fill="#900000"/><circle cx="97.8" cy="234.8" r="3" fill="#a00000"/><circle cx="96.7" cy="233.9" r="2.1" fill="#d40000"/><circle cx="98.7" cy="233.8" r="1.1" fill="#ff2424"/><circle cx="80.2" cy="261.5" r="2.6" fill="#900000"/><circle cx="81.7" cy="263.7" r="3.5" fill="#a00000"/><circle cx="82.9" cy="264.8" r="2.4" fill="#d40000"/><circle cx="82.8" cy="262.6" r="1.3" fill="#ff2424"/><circle cx="92.8" cy="244.1" r="2" fill="#900000"/><circle cx="95.3" cy="244.9" r="2.7" fill="#a00000"/><circle cx="94.7" cy="246" r="1.9" fill="#d40000"/><circle cx="96.2" cy="244" r="1" fill="#ff2424"/><circle cx="45" cy="206.7" r="2.2" fill="#900000"/><circle cx="43.7" cy="204.4" r="3.1" fill="#a00000"/><circle cx="43.9" cy="203.1" r="2.1" fill="#d40000"/><circle cx="44.7" cy="203.5" r="1.1" fill="#ff2424"/><circle cx="44.4" cy="260.6" r="2.2" fill="#900000"/><circle cx="42.9" cy="262.8" r="3.1" fill="#a00000"/><circle cx="41.6" cy="262.2" r="2.1" fill="#d40000"/><circle cx="43.9" cy="261.8" r="1.1" fill="#ff2424"/><circle cx="80.8" cy="208.6" r="2.4" fill="#900000"/><circle cx="82.4" cy="206.6" r="3.4" fill="#a00000"/><circle cx="81.4" cy="207.8" r="2.3" fill="#d40000"/><circle cx="83.4" cy="205.5" r="1.2" fill="#ff2424"/><circle cx="58.2" cy="265.3" r="2.3" fill="#900000"/><circle cx="57.9" cy="267.8" r="3.2" fill="#a00000"/><circle cx="58.1" cy="266.4" r="2.2" fill="#d40000"/><circle cx="58.9" cy="266.8" r="1.2" fill="#ff2424"/><circle cx="73.1" cy="205.8" r="2.1" fill="#900000"/><circle cx="74" cy="203.5" r="2.9" fill="#a00000"/><circle cx="74" cy="202.2" r="2" fill="#d40000"/><circle cx="74.9" cy="202.6" r="1.1" fill="#ff2424"/><circle cx="92.1" cy="235.2" r="1.6" fill="#900000"/><circle cx="94.6" cy="235.3" r="2.2" fill="#a00000"/><circle cx="93.8" cy="234.7" r="1.5" fill="#d40000"/><circle cx="95.3" cy="234.6" r="0.8" fill="#ff2424"/><circle cx="70.5" cy="262.4" r="2.4" fill="#900000"/><circle cx="71.2" cy="264.7" r="3.3" fill="#a00000"/><circle cx="70.7" cy="263.3" r="2.2" fill="#d40000"/><circle cx="72.3" cy="263.6" r="1.2" fill="#ff2424"/><circle cx="33.4" cy="237.9" r="1.7" fill="#900000"/><circle cx="31.1" cy="238.2" r="2.4" fill="#a00000"/><circle cx="30" cy="238.1" r="1.6" fill="#d40000"/><circle cx="31.8" cy="237.5" r="0.9" fill="#ff2424"/><circle cx="37" cy="219.6" r="2.3" fill="#900000"/><circle cx="34.9" cy="218.5" r="3.2" fill="#a00000"/><circle cx="34.6" cy="217.1" r="2.2" fill="#d40000"/><circle cx="35.9" cy="217.4" r="1.1" fill="#ff2424"/><circle cx="90.1" cy="239.2" r="2.6" fill="#900000"/><circle cx="92.4" cy="239.6" r="3.6" fill="#a00000"/><circle cx="93.6" cy="240.6" r="2.5" fill="#d40000"/><circle cx="93.5" cy="238.4" r="1.3" fill="#ff2424"/><circle cx="90.1" cy="232.9" r="1.8" fill="#900000"/><circle cx="92.4" cy="232.8" r="2.5" fill="#a00000"/><circle cx="91.8" cy="231.8" r="1.7" fill="#d40000"/><circle cx="93.2" cy="232" r="0.9" fill="#ff2424"/><circle cx="36.5" cy="224.1" r="1.7" fill="#900000"/><circle cx="34.5" cy="223.3" r="2.3" fill="#a00000"/><circle cx="33.5" cy="223.7" r="1.6" fill="#d40000"/><circle cx="35.2" cy="222.6" r="0.8" fill="#ff2424"/><circle cx="76.8" cy="256.9" r="1.7" fill="#900000"/><circle cx="78" cy="258.7" r="2.3" fill="#a00000"/><circle cx="77.3" cy="257.9" r="1.6" fill="#d40000"/><circle cx="78.7" cy="258" r="0.8" fill="#ff2424"/><circle cx="36.3" cy="227.9" r="2.3" fill="#900000"/><circle cx="34.2" cy="227.4" r="3.2" fill="#a00000"/><circle cx="35.3" cy="228.3" r="2.1" fill="#d40000"/><circle cx="35.2" cy="226.4" r="1.1" fill="#ff2424"/><circle cx="45.3" cy="213.9" r="1.8" fill="#900000"/><circle cx="43.9" cy="212.3" r="2.4" fill="#a00000"/><circle cx="43.3" cy="213.2" r="1.7" fill="#d40000"/><circle cx="44.7" cy="211.5" r="0.9" fill="#ff2424"/><circle cx="38.9" cy="222.1" r="1.9" fill="#900000"/><circle cx="37.1" cy="221.1" r="2.7" fill="#a00000"/><circle cx="35.9" cy="221.2" r="1.8" fill="#d40000"/><circle cx="37.9" cy="220.3" r="1" fill="#ff2424"/><circle cx="46.2" cy="254.2" r="2.2" fill="#900000"/><circle cx="44.9" cy="255.9" r="3.1" fill="#a00000"/><circle cx="44.2" cy="257.1" r="2.1" fill="#d40000"/><circle cx="45.9" cy="254.9" r="1.1" fill="#ff2424"/><circle cx="82.1" cy="249.6" r="1.6" fill="#900000"/><circle cx="83.7" cy="250.8" r="2.2" fill="#a00000"/><circle cx="84.7" cy="251.2" r="1.5" fill="#d40000"/><circle cx="84.4" cy="250.1" r="0.8" fill="#ff2424"/><circle cx="41.6" cy="247.6" r="2.5" fill="#900000"/><circle cx="40" cy="248.7" r="3.5" fill="#a00000"/><circle cx="40.6" cy="250.2" r="2.4" fill="#d40000"/><circle cx="41.1" cy="247.6" r="1.3" fill="#ff2424"/><circle cx="57.4" cy="257.9" r="2.6" fill="#900000"/><circle cx="57" cy="259.9" r="3.6" fill="#a00000"/><circle cx="55.5" cy="260.6" r="2.5" fill="#d40000"/><circle cx="58.2" cy="258.7" r="1.3" fill="#ff2424"/><circle cx="41.1" cy="246.2" r="1.8" fill="#900000"/><circle cx="39.4" cy="247.2" r="2.5" fill="#a00000"/><circle cx="38.4" cy="246.8" r="1.7" fill="#d40000"/><circle cx="40.2" cy="246.4" r="0.9" fill="#ff2424"/><circle cx="63" cy="210" r="1.7" fill="#900000"/><circle cx="63.1" cy="208" r="2.3" fill="#a00000"/><circle cx="63.1" cy="209.1" r="1.6" fill="#d40000"/><circle cx="63.8" cy="207.3" r="0.8" fill="#ff2424"/><circle cx="60" cy="257.7" r="2.2" fill="#900000"/><circle cx="59.8" cy="259.6" r="3.1" fill="#a00000"/><circle cx="58.9" cy="260.6" r="2.1" fill="#d40000"/><circle cx="60.8" cy="258.6" r="1.1" fill="#ff2424"/><circle cx="57" cy="212.1" r="1.7" fill="#900000"/><circle cx="56.6" cy="210.3" r="2.3" fill="#a00000"/><circle cx="56" cy="209.5" r="1.6" fill="#d40000"/><circle cx="57.3" cy="209.6" r="0.9" fill="#ff2424"/><circle cx="46.3" cy="222.3" r="1.9" fill="#900000"/><circle cx="45" cy="221.3" r="2.6" fill="#a00000"/><circle cx="46.1" cy="221" r="1.8" fill="#d40000"/><circle cx="45.8" cy="220.5" r="0.9" fill="#ff2424"/><circle cx="59.1" cy="252.8" r="1.8" fill="#900000"/><circle cx="58.9" cy="254.4" r="2.5" fill="#a00000"/><circle cx="59.4" cy="255.3" r="1.7" fill="#d40000"/><circle cx="59.6" cy="253.6" r="0.9" fill="#ff2424"/><circle cx="50" cy="248.4" r="1.9" fill="#900000"/><circle cx="49" cy="249.5" r="2.6" fill="#a00000"/><circle cx="49.4" cy="248.4" r="1.8" fill="#d40000"/><circle cx="49.8" cy="248.7" r="1" fill="#ff2424"/><circle cx="44" cy="230.4" r="2.6" fill="#900000"/><circle cx="42.5" cy="230.1" r="3.5" fill="#a00000"/><circle cx="43.1" cy="228.6" r="2.4" fill="#d40000"/><circle cx="43.6" cy="229" r="1.3" fill="#ff2424"/><circle cx="60.1" cy="248.1" r="1.9" fill="#900000"/><circle cx="60" cy="249.3" r="2.6" fill="#a00000"/><circle cx="59" cy="250" r="1.7" fill="#d40000"/><circle cx="60.8" cy="248.5" r="0.9" fill="#ff2424"/><circle cx="51.1" cy="225.7" r="2.2" fill="#900000"/><circle cx="50.2" cy="225" r="3" fill="#a00000"/><circle cx="48.8" cy="224.8" r="2.1" fill="#d40000"/><circle cx="51.2" cy="224" r="1.1" fill="#ff2424"/><circle cx="63.9" cy="244" r="2.6" fill="#900000"/><circle cx="64" cy="244.8" r="3.6" fill="#a00000"/><circle cx="64.3" cy="243.2" r="2.5" fill="#d40000"/><circle cx="65.1" cy="243.6" r="1.3" fill="#ff2424"/><circle cx="70.4" cy="237" r="2.2" fill="#900000"/><circle cx="71.1" cy="237.2" r="3" fill="#a00000"/><circle cx="71.9" cy="238.3" r="2" fill="#d40000"/><circle cx="72" cy="236.3" r="1.1" fill="#ff2424"/><circle cx="67.6" cy="238.2" r="2.7" fill="#900000"/><circle cx="68" cy="238.5" r="3.7" fill="#a00000"/><circle cx="69.7" cy="238.4" r="2.5" fill="#d40000"/><circle cx="69.2" cy="237.3" r="1.3" fill="#ff2424"/><circle cx="56.1" cy="235" r="2.5" fill="#900000"/><circle cx="55.6" cy="235" r="3.4" fill="#a00000"/><circle cx="55.6" cy="233.5" r="2.3" fill="#d40000"/><circle cx="56.7" cy="233.9" r="1.2" fill="#ff2424"/><circle cx="183.4" cy="224" r="1.3" fill="#900000"/><circle cx="183.4" cy="223.7" r="1.8" fill="#a00000"/><circle cx="184.1" cy="224.2" r="1.2" fill="#d40000"/><circle cx="184" cy="223.2" r="0.6" fill="#ff2424"/><circle cx="186.8" cy="227.3" r="1.1" fill="#900000"/><circle cx="187.1" cy="227.3" r="1.6" fill="#a00000"/><circle cx="186.8" cy="226.6" r="1.1" fill="#d40000"/><circle cx="187.6" cy="226.8" r="0.6" fill="#ff2424"/><circle cx="179.6" cy="229.3" r="1.8" fill="#900000"/><circle cx="179.3" cy="229.5" r="2.5" fill="#a00000"/><circle cx="178.9" cy="228.4" r="1.7" fill="#d40000"/><circle cx="180.1" cy="228.7" r="0.9" fill="#ff2424"/><circle cx="176.7" cy="227.3" r="1.5" fill="#900000"/><circle cx="176.1" cy="227.3" r="2.1" fill="#a00000"/><circle cx="175.9" cy="226.3" r="1.4" fill="#d40000"/><circle cx="176.8" cy="226.6" r="0.8" fill="#ff2424"/><circle cx="194.5" cy="221" r="1.7" fill="#900000"/><circle cx="195.4" cy="220.5" r="2.3" fill="#a00000"/><circle cx="196.5" cy="220.4" r="1.6" fill="#d40000"/><circle cx="196.2" cy="219.7" r="0.8" fill="#ff2424"/><circle cx="174" cy="238.1" r="1.6" fill="#900000"/><circle cx="173.3" cy="239" r="2.2" fill="#a00000"/><circle cx="173.8" cy="239.8" r="1.5" fill="#d40000"/><circle cx="174" cy="238.3" r="0.8" fill="#ff2424"/><circle cx="173.1" cy="238.1" r="1.8" fill="#900000"/><circle cx="172.3" cy="238.9" r="2.5" fill="#a00000"/><circle cx="171.9" cy="237.9" r="1.7" fill="#d40000"/><circle cx="173.1" cy="238.1" r="0.9" fill="#ff2424"/><circle cx="178.6" cy="241.4" r="1.4" fill="#900000"/><circle cx="178.2" cy="242.5" r="1.9" fill="#a00000"/><circle cx="178.9" cy="242" r="1.3" fill="#d40000"/><circle cx="178.8" cy="241.9" r="0.7" fill="#ff2424"/><circle cx="169.6" cy="233.6" r="1.8" fill="#900000"/><circle cx="168.6" cy="234.1" r="2.4" fill="#a00000"/><circle cx="167.7" cy="234.8" r="1.7" fill="#d40000"/><circle cx="169.3" cy="233.3" r="0.9" fill="#ff2424"/><circle cx="186.7" cy="242.3" r="1.4" fill="#900000"/><circle cx="187" cy="243.5" r="1.9" fill="#a00000"/><circle cx="187.5" cy="244.2" r="1.3" fill="#d40000"/><circle cx="187.6" cy="242.9" r="0.7" fill="#ff2424"/><circle cx="182.6" cy="212.2" r="1.8" fill="#900000"/><circle cx="182.6" cy="210.9" r="2.5" fill="#a00000"/><circle cx="182.3" cy="209.8" r="1.7" fill="#d40000"/><circle cx="183.4" cy="210.1" r="0.9" fill="#ff2424"/><circle cx="191.1" cy="240.6" r="1.6" fill="#900000"/><circle cx="191.7" cy="241.7" r="2.2" fill="#a00000"/><circle cx="191.9" cy="242.7" r="1.5" fill="#d40000"/><circle cx="192.4" cy="241" r="0.8" fill="#ff2424"/><circle cx="180.3" cy="242.7" r="1.7" fill="#900000"/><circle cx="180.1" cy="244" r="2.3" fill="#a00000"/><circle cx="181" cy="243.6" r="1.5" fill="#d40000"/><circle cx="180.8" cy="243.3" r="0.8" fill="#ff2424"/><circle cx="198.6" cy="227.1" r="1.7" fill="#900000"/><circle cx="199.9" cy="227.1" r="2.4" fill="#a00000"/><circle cx="198.9" cy="227.3" r="1.6" fill="#d40000"/><circle cx="200.7" cy="226.3" r="0.9" fill="#ff2424"/><circle cx="188.3" cy="212.4" r="1.2" fill="#900000"/><circle cx="188.8" cy="211.2" r="1.6" fill="#a00000"/><circle cx="188.3" cy="210.6" r="1.1" fill="#d40000"/><circle cx="189.3" cy="210.7" r="0.6" fill="#ff2424"/><circle cx="197.6" cy="219.9" r="1.1" fill="#900000"/><circle cx="198.8" cy="219.3" r="1.6" fill="#a00000"/><circle cx="198.2" cy="219.6" r="1.1" fill="#d40000"/><circle cx="199.3" cy="218.8" r="0.6" fill="#ff2424"/><circle cx="183.1" cy="210.7" r="1.4" fill="#900000"/><circle cx="183.1" cy="209.3" r="1.9" fill="#a00000"/><circle cx="183.9" cy="209" r="1.3" fill="#d40000"/><circle cx="183.7" cy="208.7" r="0.7" fill="#ff2424"/><circle cx="195.1" cy="241.1" r="1.7" fill="#900000"/><circle cx="196.1" cy="242.2" r="2.3" fill="#a00000"/><circle cx="196.8" cy="242.9" r="1.6" fill="#d40000"/><circle cx="196.8" cy="241.4" r="0.8" fill="#ff2424"/><circle cx="173.2" cy="211.5" r="1.5" fill="#900000"/><circle cx="172.4" cy="210.2" r="2.1" fill="#a00000"/><circle cx="171.8" cy="209.5" r="1.4" fill="#d40000"/><circle cx="173.1" cy="209.6" r="0.8" fill="#ff2424"/><circle cx="183.8" cy="246.9" r="1.3" fill="#900000"/><circle cx="183.9" cy="248.5" r="1.8" fill="#a00000"/><circle cx="183.2" cy="248.1" r="1.2" fill="#d40000"/><circle cx="184.5" cy="247.9" r="0.6" fill="#ff2424"/><circle cx="166" cy="218" r="1.1" fill="#900000"/><circle cx="164.6" cy="217.2" r="1.6" fill="#a00000"/><circle cx="164.5" cy="216.5" r="1.1" fill="#d40000"/><circle cx="165.1" cy="216.7" r="0.6" fill="#ff2424"/><circle cx="202.6" cy="228" r="1.5" fill="#900000"/><circle cx="204.2" cy="228.1" r="2.1" fill="#a00000"/><circle cx="205" cy="227.6" r="1.4" fill="#d40000"/><circle cx="204.9" cy="227.4" r="0.8" fill="#ff2424"/><circle cx="192.4" cy="245.3" r="1.8" fill="#900000"/><circle cx="193.2" cy="246.7" r="2.4" fill="#a00000"/><circle cx="192.8" cy="247.8" r="1.7" fill="#d40000"/><circle cx="193.9" cy="245.9" r="0.9" fill="#ff2424"/><circle cx="172.5" cy="246.1" r="1.1" fill="#900000"/><circle cx="171.6" cy="247.6" r="1.6" fill="#a00000"/><circle cx="171.2" cy="247" r="1.1" fill="#d40000"/><circle cx="172.1" cy="247.1" r="0.6" fill="#ff2424"/><circle cx="188.6" cy="248.3" r="1.6" fill="#900000"/><circle cx="189.1" cy="250" r="2.2" fill="#a00000"/><circle cx="189" cy="249" r="1.5" fill="#d40000"/><circle cx="189.8" cy="249.3" r="0.8" fill="#ff2424"/><circle cx="164.9" cy="215.6" r="1.3" fill="#900000"/><circle cx="163.4" cy="214.6" r="1.8" fill="#a00000"/><circle cx="162.7" cy="215.1" r="1.3" fill="#d40000"/><circle cx="164" cy="214" r="0.7" fill="#ff2424"/><circle cx="174.4" cy="207.6" r="1.7" fill="#900000"/><circle cx="173.7" cy="206" r="2.3" fill="#a00000"/><circle cx="172.8" cy="205.3" r="1.6" fill="#d40000"/><circle cx="174.4" cy="205.2" r="0.8" fill="#ff2424"/><circle cx="165.7" cy="213.4" r="1.3" fill="#900000"/><circle cx="164.3" cy="212.3" r="1.8" fill="#a00000"/><circle cx="164.9" cy="212.8" r="1.2" fill="#d40000"/><circle cx="164.9" cy="211.7" r="0.7" fill="#ff2424"/><circle cx="186.3" cy="205.4" r="1.6" fill="#900000"/><circle cx="186.5" cy="203.6" r="2.2" fill="#a00000"/><circle cx="186.2" cy="204.5" r="1.5" fill="#d40000"/><circle cx="187.3" cy="202.8" r="0.8" fill="#ff2424"/><circle cx="174.1" cy="248.1" r="1.8" fill="#900000"/><circle cx="173.3" cy="249.8" r="2.5" fill="#a00000"/><circle cx="173.9" cy="248.9" r="1.7" fill="#d40000"/><circle cx="174.1" cy="249" r="0.9" fill="#ff2424"/><circle cx="164.2" cy="241" r="1.4" fill="#900000"/><circle cx="162.7" cy="242.1" r="2" fill="#a00000"/><circle cx="162.9" cy="243" r="1.3" fill="#d40000"/><circle cx="163.3" cy="241.5" r="0.7" fill="#ff2424"/><circle cx="204.7" cy="236.3" r="1.1" fill="#900000"/><circle cx="206.4" cy="237" r="1.5" fill="#a00000"/><circle cx="205.7" cy="236.8" r="1.1" fill="#d40000"/><circle cx="206.9" cy="236.5" r="0.6" fill="#ff2424"/><circle cx="195.1" cy="207.5" r="1.6" fill="#900000"/><circle cx="196.1" cy="205.8" r="2.2" fill="#a00000"/><circle cx="197" cy="206.4" r="1.5" fill="#d40000"/><circle cx="196.8" cy="205.1" r="0.8" fill="#ff2424"/><circle cx="171.9" cy="206.9" r="1.4" fill="#900000"/><circle cx="171" cy="205.2" r="1.9" fill="#a00000"/><circle cx="170.4" cy="205.8" r="1.3" fill="#d40000"/><circle cx="171.6" cy="204.6" r="0.7" fill="#ff2424"/><circle cx="167.5" cy="209.8" r="1.5" fill="#900000"/><circle cx="166.2" cy="208.4" r="2" fill="#a00000"/><circle cx="165.4" cy="207.9" r="1.4" fill="#d40000"/><circle cx="166.8" cy="207.8" r="0.7" fill="#ff2424"/><circle cx="199.2" cy="244.7" r="1.4" fill="#900000"/><circle cx="200.5" cy="246.1" r="2" fill="#a00000"/><circle cx="200.2" cy="245.3" r="1.3" fill="#d40000"/><circle cx="201.1" cy="245.5" r="0.7" fill="#ff2424"/><circle cx="206.5" cy="230.2" r="1.3" fill="#900000"/><circle cx="208.5" cy="230.4" r="1.7" fill="#a00000"/><circle cx="208.4" cy="229.6" r="1.2" fill="#d40000"/><circle cx="209" cy="229.8" r="0.6" fill="#ff2424"/><circle cx="206.8" cy="228.5" r="1.5" fill="#900000"/><circle cx="208.7" cy="228.6" r="2" fill="#a00000"/><circle cx="207.9" cy="228.1" r="1.4" fill="#d40000"/><circle cx="209.3" cy="228" r="0.7" fill="#ff2424"/><circle cx="200.4" cy="211.2" r="1.6" fill="#900000"/><circle cx="201.8" cy="209.9" r="2.1" fill="#a00000"/><circle cx="202.6" cy="209.4" r="1.5" fill="#d40000"/><circle cx="202.5" cy="209.2" r="0.8" fill="#ff2424"/><circle cx="163.4" cy="214" r="1.8" fill="#900000"/><circle cx="161.8" cy="212.9" r="2.5" fill="#a00000"/><circle cx="162.9" cy="213" r="1.7" fill="#d40000"/><circle cx="162.6" cy="212.1" r="0.9" fill="#ff2424"/><circle cx="191.9" cy="205.4" r="1.6" fill="#900000"/><circle cx="192.6" cy="203.6" r="2.2" fill="#a00000"/><circle cx="191.6" cy="203.4" r="1.5" fill="#d40000"/><circle cx="193.3" cy="202.9" r="0.8" fill="#ff2424"/><circle cx="183" cy="227.5" r="23" fill="url(#g)"/><rect x="176.1" y="219.2" width="1.8" height="1.8" fill="#ff9898"/><rect x="161.3" y="223.3" width="1.8" height="1.8" fill="#ff9898"/><rect x="191" y="229.2" width="1.4" height="1.4" fill="#ff9898"/><rect x="195.6" y="232.9" width="2" height="2" fill="#ff9898"/><rect x="175" y="240.4" width="1.4" height="1.4" fill="#ff9898"/><rect x="171.5" y="213.9" width="2" height="2" fill="#ff9898"/><rect x="168.9" y="235.1" width="1.8" height="1.8" fill="#7070ff"/><rect x="199.3" y="219.2" width="1.4" height="1.4" fill="#7070ff"/><rect x="189.5" y="235.7" width="1.8" height="1.8" fill="#8a10a8"/><rect x="193.1" y="216.5" width="2" height="2" fill="#7070ff"/><rect x="188.9" y="223.6" width="1.4" height="1.4" fill="#7070ff"/><rect x="168.4" y="241.3" width="1.4" height="1.4" fill="#7070ff"/><rect x="172" y="213.4" width="1.8" height="1.8" fill="#ff9898"/><rect x="187.8" y="221.1" width="2" height="2" fill="#7070ff"/><rect x="193.5" y="231.5" width="2" height="2" fill="#7070ff"/><rect x="172.4" y="216.2" width="2" height="2" fill="#ff9898"/><rect x="181.7" y="242.1" width="1.8" height="1.8" fill="#8a10a8"/><rect x="160.8" y="228.8" width="1.8" height="1.8" fill="#7070ff"/><rect x="173.5" y="246.9" width="1.4" height="1.4" fill="#ff9898"/><rect x="197.5" y="239" width="2" height="2" fill="#7070ff"/><rect x="169.6" y="242.6" width="1.8" height="1.8" fill="#8a10a8"/><rect x="200" y="223.5" width="1.4" height="1.4" fill="#7070ff"/><rect x="164.2" y="226" width="1.8" height="1.8" fill="#ff9898"/><rect x="195.4" y="243.7" width="1.8" height="1.8" fill="#7070ff"/><rect x="161.5" y="230.9" width="1.8" height="1.8" fill="#ff9898"/><rect x="176.3" y="225.7" width="1.8" height="1.8" fill="#8a10a8"/><rect x="163.7" y="218.7" width="1.4" height="1.4" fill="#ff9898"/><rect x="167.4" y="236.5" width="2" height="2" fill="#ff9898"/><rect x="194.2" y="222.2" width="2" height="2" fill="#ff9898"/><rect x="166.4" y="228.4" width="1.8" height="1.8" fill="#8a10a8"/><rect x="176.4" y="214.7" width="2" height="2" fill="#7070ff"/><rect x="192.4" y="244.6" width="1.8" height="1.8" fill="#7070ff"/><rect x="170.1" y="242.1" width="1.8" height="1.8" fill="#7070ff"/><rect x="193.3" y="225.9" width="2" height="2" fill="#7070ff"/><rect x="187.3" y="226.2" width="1.8" height="1.8" fill="#ff9898"/><rect x="171.8" y="217.1" width="2" height="2" fill="#ff9898"/><rect x="163.2" y="230.6" width="2" height="2" fill="#7070ff"/><rect x="184.8" y="240.6" width="2" height="2" fill="#ff9898"/><rect x="178.8" y="219.9" width="1.8" height="1.8" fill="#7070ff"/><rect x="191.7" y="208.9" width="2" height="2" fill="#8a10a8"/><rect x="182.9" y="210.5" width="1.8" height="1.8" fill="#ff9898"/><rect x="166.7" y="221.2" width="1.8" height="1.8" fill="#ff9898"/><rect x="180.6" y="237" width="1.4" height="1.4" fill="#7070ff"/><rect x="189.5" y="234.5" width="2" height="2" fill="#8a10a8"/><rect x="164" y="216.1" width="1.8" height="1.8" fill="#ff9898"/><rect x="196.5" y="236" width="1.4" height="1.4" fill="#7070ff"/><rect x="168.3" y="218" width="1.8" height="1.8" fill="#7070ff"/><rect x="172.7" y="245.4" width="1.4" height="1.4" fill="#ff9898"/><rect x="171.2" y="238.8" width="1.8" height="1.8" fill="#8a10a8"/><rect x="190.1" y="219.8" width="1.4" height="1.4" fill="#ff9898"/><rect x="178.6" y="220.5" width="1.4" height="1.4" fill="#ff9898"/><rect x="165.6" y="225.1" width="1.4" height="1.4" fill="#7070ff"/><rect x="174.3" y="243.3" width="1.8" height="1.8" fill="#ff9898"/><rect x="203.2" y="228.3" width="2" height="2" fill="#ff9898"/><rect x="165.9" y="232.3" width="1.4" height="1.4" fill="#7070ff"/><rect x="203.7" y="229.6" width="1.4" height="1.4" fill="#7070ff"/><rect x="180.3" y="211.1" width="1.4" height="1.4" fill="#8a10a8"/><rect x="197.5" y="219.3" width="1.8" height="1.8" fill="#ff9898"/><rect x="166.1" y="219.7" width="1.4" height="1.4" fill="#7070ff"/><circle cx="160.3" cy="234.6" r="1.3" fill="#900000"/><circle cx="158.4" cy="235.2" r="1.8" fill="#a00000"/><circle cx="157.9" cy="234.5" r="1.2" fill="#d40000"/><circle cx="159" cy="234.6" r="0.6" fill="#ff2424"/><circle cx="167.3" cy="209.6" r="1.6" fill="#900000"/><circle cx="166" cy="208.1" r="2.2" fill="#a00000"/><circle cx="165" cy="208.1" r="1.5" fill="#d40000"/><circle cx="166.7" cy="207.4" r="0.8" fill="#ff2424"/><circle cx="201.1" cy="243" r="1.4" fill="#900000"/><circle cx="202.6" cy="244.2" r="2" fill="#a00000"/><circle cx="203.1" cy="243.4" r="1.3" fill="#d40000"/><circle cx="203.2" cy="243.6" r="0.7" fill="#ff2424"/><circle cx="162.3" cy="215.8" r="1.2" fill="#900000"/><circle cx="160.6" cy="214.9" r="1.7" fill="#a00000"/><circle cx="161.2" cy="215.3" r="1.1" fill="#d40000"/><circle cx="161.1" cy="214.3" r="0.6" fill="#ff2424"/><circle cx="200.4" cy="243.7" r="1.6" fill="#900000"/><circle cx="201.8" cy="245.1" r="2.2" fill="#a00000"/><circle cx="202" cy="244.1" r="1.5" fill="#d40000"/><circle cx="202.5" cy="244.4" r="0.8" fill="#ff2424"/><circle cx="201.9" cy="213.2" r="1.3" fill="#900000"/><circle cx="203.5" cy="212" r="1.9" fill="#a00000"/><circle cx="204.3" cy="211.8" r="1.3" fill="#d40000"/><circle cx="204.1" cy="211.4" r="0.7" fill="#ff2424"/><circle cx="159.5" cy="231.1" r="1.3" fill="#900000"/><circle cx="157.6" cy="231.4" r="1.8" fill="#a00000"/><circle cx="157.6" cy="232.2" r="1.2" fill="#d40000"/><circle cx="158.2" cy="230.8" r="0.7" fill="#ff2424"/><circle cx="194.3" cy="248.3" r="1.6" fill="#900000"/><circle cx="195.2" cy="250" r="2.2" fill="#a00000"/><circle cx="194.3" cy="249.6" r="1.5" fill="#d40000"/><circle cx="195.9" cy="249.3" r="0.8" fill="#ff2424"/><circle cx="159.6" cy="231.2" r="1.1" fill="#900000"/><circle cx="157.7" cy="231.5" r="1.5" fill="#a00000"/><circle cx="158.4" cy="231.8" r="1.1" fill="#d40000"/><circle cx="158.2" cy="231" r="0.6" fill="#ff2424"/><circle cx="182.5" cy="203.9" r="1.2" fill="#900000"/><circle cx="182.5" cy="201.9" r="1.6" fill="#a00000"/><circle cx="182.1" cy="202.5" r="1.1" fill="#d40000"/><circle cx="183" cy="201.4" r="0.6" fill="#ff2424"/><circle cx="203.9" cy="238.3" r="1.1" fill="#900000"/><circle cx="205.6" cy="239.2" r="1.5" fill="#a00000"/><circle cx="205.6" cy="238.5" r="1.1" fill="#d40000"/><circle cx="206.1" cy="238.7" r="0.6" fill="#ff2424"/><circle cx="160.8" cy="220.1" r="1.6" fill="#900000"/><circle cx="159" cy="219.5" r="2.2" fill="#a00000"/><circle cx="158.1" cy="219.1" r="1.5" fill="#d40000"/><circle cx="159.7" cy="218.8" r="0.8" fill="#ff2424"/><circle cx="190.8" cy="205.5" r="1.3" fill="#900000"/><circle cx="191.4" cy="203.7" r="1.8" fill="#a00000"/><circle cx="191.8" cy="204.3" r="1.2" fill="#d40000"/><circle cx="192" cy="203.1" r="0.6" fill="#ff2424"/><circle cx="167.8" cy="245.3" r="1.8" fill="#900000"/><circle cx="166.6" cy="246.7" r="2.5" fill="#a00000"/><circle cx="165.5" cy="247" r="1.7" fill="#d40000"/><circle cx="167.4" cy="245.9" r="0.9" fill="#ff2424"/><circle cx="196.7" cy="208.7" r="1.3" fill="#900000"/><circle cx="197.8" cy="207.2" r="1.8" fill="#a00000"/><circle cx="197" cy="207.4" r="1.2" fill="#d40000"/><circle cx="198.4" cy="206.6" r="0.7" fill="#ff2424"/><circle cx="193.3" cy="248.4" r="1.5" fill="#900000"/><circle cx="194.1" cy="250.1" r="2.1" fill="#a00000"/><circle cx="194.8" cy="249.5" r="1.4" fill="#d40000"/><circle cx="194.7" cy="249.4" r="0.8" fill="#ff2424"/><circle cx="174.5" cy="249.1" r="1.5" fill="#900000"/><circle cx="173.8" cy="250.8" r="2.1" fill="#a00000"/><circle cx="173.7" cy="251.8" r="1.4" fill="#d40000"/><circle cx="174.4" cy="250.2" r="0.7" fill="#ff2424"/><circle cx="206.1" cy="229.4" r="1.2" fill="#900000"/><circle cx="208" cy="229.5" r="1.6" fill="#a00000"/><circle cx="208.5" cy="229" r="1.1" fill="#d40000"/><circle cx="208.5" cy="229" r="0.6" fill="#ff2424"/><circle cx="166.2" cy="243.2" r="1.7" fill="#900000"/><circle cx="164.8" cy="244.5" r="2.3" fill="#a00000"/><circle cx="164.5" cy="243.5" r="1.6" fill="#d40000"/><circle cx="165.5" cy="243.8" r="0.9" fill="#ff2424"/><circle cx="192.8" cy="206.8" r="1.3" fill="#900000"/><circle cx="193.6" cy="205.1" r="1.7" fill="#a00000"/><circle cx="194.2" cy="204.6" r="1.2" fill="#d40000"/><circle cx="194.2" cy="204.6" r="0.6" fill="#ff2424"/><circle cx="201.5" cy="240.7" r="1.5" fill="#900000"/><circle cx="203" cy="241.8" r="2" fill="#a00000"/><circle cx="202.7" cy="240.9" r="1.4" fill="#d40000"/><circle cx="203.6" cy="241.1" r="0.7" fill="#ff2424"/><circle cx="202.6" cy="216.1" r="1.1" fill="#900000"/><circle cx="204.2" cy="215.1" r="1.6" fill="#a00000"/><circle cx="203.5" cy="215.1" r="1.1" fill="#d40000"/><circle cx="204.7" cy="214.6" r="0.6" fill="#ff2424"/><circle cx="176.9" cy="249.3" r="1.7" fill="#900000"/><circle cx="176.4" cy="251" r="2.3" fill="#a00000"/><circle cx="176.7" cy="250.1" r="1.6" fill="#d40000"/><circle cx="177.1" cy="250.3" r="0.8" fill="#ff2424"/><circle cx="160.6" cy="229.8" r="1.7" fill="#900000"/><circle cx="158.8" cy="230" r="2.3" fill="#a00000"/><circle cx="157.8" cy="230.4" r="1.6" fill="#d40000"/><circle cx="159.5" cy="229.2" r="0.8" fill="#ff2424"/><circle cx="172.2" cy="208" r="1.3" fill="#900000"/><circle cx="171.3" cy="206.4" r="1.8" fill="#a00000"/><circle cx="171.8" cy="205.8" r="1.2" fill="#d40000"/><circle cx="171.9" cy="205.8" r="0.6" fill="#ff2424"/><circle cx="161.4" cy="222.6" r="1.8" fill="#900000"/><circle cx="159.6" cy="222.2" r="2.4" fill="#a00000"/><circle cx="160.6" cy="221.8" r="1.7" fill="#d40000"/><circle cx="160.4" cy="221.5" r="0.9" fill="#ff2424"/><circle cx="180.7" cy="205.5" r="1.5" fill="#900000"/><circle cx="180.5" cy="203.7" r="2" fill="#a00000"/><circle cx="181.3" cy="203.2" r="1.4" fill="#d40000"/><circle cx="181.2" cy="203" r="0.7" fill="#ff2424"/><circle cx="191.8" cy="207.5" r="1.1" fill="#900000"/><circle cx="192.5" cy="205.9" r="1.5" fill="#a00000"/><circle cx="193.1" cy="205.5" r="1" fill="#d40000"/><circle cx="193" cy="205.4" r="0.6" fill="#ff2424"/><circle cx="188" cy="248.8" r="1.2" fill="#900000"/><circle cx="188.4" cy="250.5" r="1.7" fill="#a00000"/><circle cx="188.7" cy="251.2" r="1.2" fill="#d40000"/><circle cx="189" cy="249.9" r="0.6" fill="#ff2424"/><circle cx="161.3" cy="225.4" r="1.4" fill="#900000"/><circle cx="159.5" cy="225.3" r="2" fill="#a00000"/><circle cx="159" cy="224.5" r="1.3" fill="#d40000"/><circle cx="160.1" cy="224.7" r="0.7" fill="#ff2424"/><circle cx="181" cy="249" r="1.3" fill="#900000"/><circle cx="180.8" cy="250.7" r="1.8" fill="#a00000"/><circle cx="181.1" cy="251.5" r="1.2" fill="#d40000"/><circle cx="181.4" cy="250.2" r="0.6" fill="#ff2424"/><circle cx="190.9" cy="247.6" r="1.7" fill="#900000"/><circle cx="191.5" cy="249.2" r="2.4" fill="#a00000"/><circle cx="190.6" cy="248.7" r="1.6" fill="#d40000"/><circle cx="192.3" cy="248.4" r="0.9" fill="#ff2424"/><circle cx="186.3" cy="206.3" r="1.4" fill="#900000"/><circle cx="186.5" cy="204.6" r="2" fill="#a00000"/><circle cx="186.6" cy="203.7" r="1.3" fill="#d40000"/><circle cx="187.1" cy="203.9" r="0.7" fill="#ff2424"/><circle cx="172.4" cy="209.3" r="1.6" fill="#900000"/><circle cx="171.6" cy="207.8" r="2.2" fill="#a00000"/><circle cx="172.4" cy="207.3" r="1.5" fill="#d40000"/><circle cx="172.2" cy="207.1" r="0.8" fill="#ff2424"/><circle cx="181.1" cy="248.4" r="1.4" fill="#900000"/><circle cx="181" cy="250.1" r="1.9" fill="#a00000"/><circle cx="181.5" cy="250.8" r="1.3" fill="#d40000"/><circle cx="181.6" cy="249.4" r="0.7" fill="#ff2424"/><circle cx="187.6" cy="207.1" r="1.2" fill="#900000"/><circle cx="188" cy="205.5" r="1.6" fill="#a00000"/><circle cx="187.6" cy="204.9" r="1.1" fill="#d40000"/><circle cx="188.5" cy="205" r="0.6" fill="#ff2424"/><circle cx="192.9" cy="209.6" r="1.3" fill="#900000"/><circle cx="193.8" cy="208.1" r="1.8" fill="#a00000"/><circle cx="194.6" cy="208.4" r="1.3" fill="#d40000"/><circle cx="194.3" cy="207.5" r="0.7" fill="#ff2424"/><circle cx="164.8" cy="236.5" r="1.5" fill="#900000"/><circle cx="163.4" cy="237.3" r="2.1" fill="#a00000"/><circle cx="162.6" cy="236.7" r="1.4" fill="#d40000"/><circle cx="164" cy="236.6" r="0.7" fill="#ff2424"/><circle cx="164.5" cy="235.4" r="1.8" fill="#900000"/><circle cx="163" cy="236.1" r="2.4" fill="#a00000"/><circle cx="162.7" cy="237.2" r="1.7" fill="#d40000"/><circle cx="163.8" cy="235.3" r="0.9" fill="#ff2424"/><circle cx="188.7" cy="246.7" r="1.4" fill="#900000"/><circle cx="189.2" cy="248.3" r="1.9" fill="#a00000"/><circle cx="189.9" cy="247.8" r="1.3" fill="#d40000"/><circle cx="189.8" cy="247.7" r="0.7" fill="#ff2424"/><circle cx="195.3" cy="212.9" r="1.6" fill="#900000"/><circle cx="196.3" cy="211.7" r="2.2" fill="#a00000"/><circle cx="196.9" cy="212.5" r="1.5" fill="#d40000"/><circle cx="197" cy="211" r="0.8" fill="#ff2424"/><circle cx="196" cy="214.3" r="1.4" fill="#900000"/><circle cx="197.1" cy="213.3" r="1.9" fill="#a00000"/><circle cx="197.4" cy="214.1" r="1.3" fill="#d40000"/><circle cx="197.7" cy="212.7" r="0.7" fill="#ff2424"/><circle cx="191.9" cy="243.3" r="1.6" fill="#900000"/><circle cx="192.6" cy="244.5" r="2.2" fill="#a00000"/><circle cx="192.2" cy="243.6" r="1.5" fill="#d40000"/><circle cx="193.3" cy="243.8" r="0.8" fill="#ff2424"/><circle cx="182.4" cy="243.9" r="1.5" fill="#900000"/><circle cx="182.3" cy="245.2" r="2" fill="#a00000"/><circle cx="183.2" cy="245.5" r="1.4" fill="#d40000"/><circle cx="183" cy="244.6" r="0.7" fill="#ff2424"/><circle cx="184.6" cy="213.5" r="1.5" fill="#900000"/><circle cx="184.7" cy="212.4" r="2" fill="#a00000"/><circle cx="184.7" cy="213.3" r="1.4" fill="#d40000"/><circle cx="185.4" cy="211.7" r="0.7" fill="#ff2424"/><circle cx="173.8" cy="219.9" r="1.5" fill="#900000"/><circle cx="173" cy="219.3" r="2" fill="#a00000"/><circle cx="173.2" cy="220.2" r="1.4" fill="#d40000"/><circle cx="173.7" cy="218.6" r="0.7" fill="#ff2424"/><circle cx="187.6" cy="237.9" r="1.2" fill="#900000"/><circle cx="187.9" cy="238.8" r="1.6" fill="#a00000"/><circle cx="188.5" cy="238.3" r="1.1" fill="#d40000"/><circle cx="188.4" cy="238.3" r="0.6" fill="#ff2424"/><circle cx="179" cy="236.8" r="1.6" fill="#900000"/><circle cx="178.7" cy="237.6" r="2.1" fill="#a00000"/><circle cx="179.1" cy="236.7" r="1.5" fill="#d40000"/><circle cx="179.4" cy="236.9" r="0.8" fill="#ff2424"/><circle cx="186.6" cy="236.8" r="1.6" fill="#900000"/><circle cx="186.9" cy="237.5" r="2.2" fill="#a00000"/><circle cx="187.8" cy="237.7" r="1.5" fill="#d40000"/><circle cx="187.6" cy="236.8" r="0.8" fill="#ff2424"/><circle cx="178.1" cy="221.4" r="1.8" fill="#900000"/><circle cx="177.7" cy="221" r="2.5" fill="#a00000"/><circle cx="177.7" cy="222.1" r="1.7" fill="#d40000"/><circle cx="178.5" cy="220.2" r="0.9" fill="#ff2424"/><circle cx="185.1" cy="226.7" r="1.1" fill="#900000"/><circle cx="185.3" cy="226.7" r="1.5" fill="#a00000"/><circle cx="185.1" cy="227.3" r="1.1" fill="#d40000"/><circle cx="185.8" cy="226.2" r="0.6" fill="#ff2424"/></svg></div></div>

<div class="btn" style="left:135px;top:365px;width:25px;height:25px"></div>
<div class="btn" style="left:162px;top:365px;width:25px;height:25px"></div>
<svg class="a" style="left:135px;top:365px" width="52" height="25" viewBox="0 0 52 25">
 <path d="M7.5 9.5 L12 14 L16.5 9.5" fill="none" stroke="#1a1a1a" stroke-width="2"/>
 <path d="M34.5 14 L39 9.5 L43.5 14" fill="none" stroke="#1a1a1a" stroke-width="2"/>
</svg>

<div class="t" style="left:91px;top:405px;letter-spacing:0.57px"><span class="u">B</span>lank After</div>
<div class="spin" style="left:172px;top:402px"><div class="f"></div><div class="sep"></div><div class="v">10</div>
 <svg width="12" height="22" viewBox="0 0 12 22"><path d="M2.8 7.6 L6.3 4.1 L9.8 7.6 M2.8 15 L6.3 18.5 L9.8 15" fill="none" stroke="#2e3d49" stroke-width="1.3"/></svg></div>
<div class="t" style="left:235px;top:405px;letter-spacing:0.75px">minutes</div>
<div class="t" style="left:92px;top:433px;letter-spacing:0.5px"><span class="u">C</span>ycle After</div>
<div class="spin" style="left:172px;top:430px"><div class="f"></div><div class="sep"></div><div class="v">10</div>
 <svg width="12" height="22" viewBox="0 0 12 22"><path d="M2.8 7.6 L6.3 4.1 L9.8 7.6 M2.8 15 L6.3 18.5 L9.8 15" fill="none" stroke="#2e3d49" stroke-width="1.3"/></svg></div>
<div class="t" style="left:235px;top:433px;letter-spacing:0.75px">minutes</div>

<div class="a" style="left:29px;top:474px;width:12px;height:12px;border:1.5px solid #5d7384;border-radius:2px;background:#dfe8ef"></div>
<div class="t" style="left:48px;top:471px;letter-spacing:0.2px"><span class="u">L</span>ock Screen After</div>
<div class="spin" style="left:172px;top:468px;border-color:#aebdc8;background:#eef2f5"><div class="f" style="background:#e8eef3;border-color:#c3cfd8"></div><div class="sep" style="background:#c3cfd8"></div><div class="v" style="color:#a9b8c4">0</div>
 <svg width="12" height="22" viewBox="0 0 12 22"><path d="M2.8 7.6 L6.3 4.1 L9.8 7.6 M2.8 15 L6.3 18.5 L9.8 15" fill="none" stroke="#a9b8c4" stroke-width="1.3"/></svg></div>
<div class="t" style="left:235px;top:471px;color:#a3b3bf;letter-spacing:0.75px">minutes</div>

<div class="btn" style="left:393px;top:438px;width:83px;height:27px"></div>
<div class="t" style="left:408px;top:443px;letter-spacing:0.45px"><span class="u">P</span>review</div>
<div class="btn" style="left:574px;top:438px;width:83px;height:27px"></div>
<div class="t" style="left:583px;top:443px;letter-spacing:0.42px"><span class="u">S</span>ettings...</div>

<!-- cursor -->
<svg class="a" style="left:214px;top:292px" width="14" height="22" viewBox="0 0 14 22">
 <path d="M1.5 1.5 L1.5 17 L5 13.5 L8 20 L10.5 19 L7.8 12.5 L12.5 12.5 Z" fill="#fff" stroke="#000" stroke-width="1.2" stroke-linejoin="round"/>
</svg>
<div id="hl" class="a"></div><div id="tophl" class="a"></div><div id="frameov" class="a"></div>
</div></body></html>
